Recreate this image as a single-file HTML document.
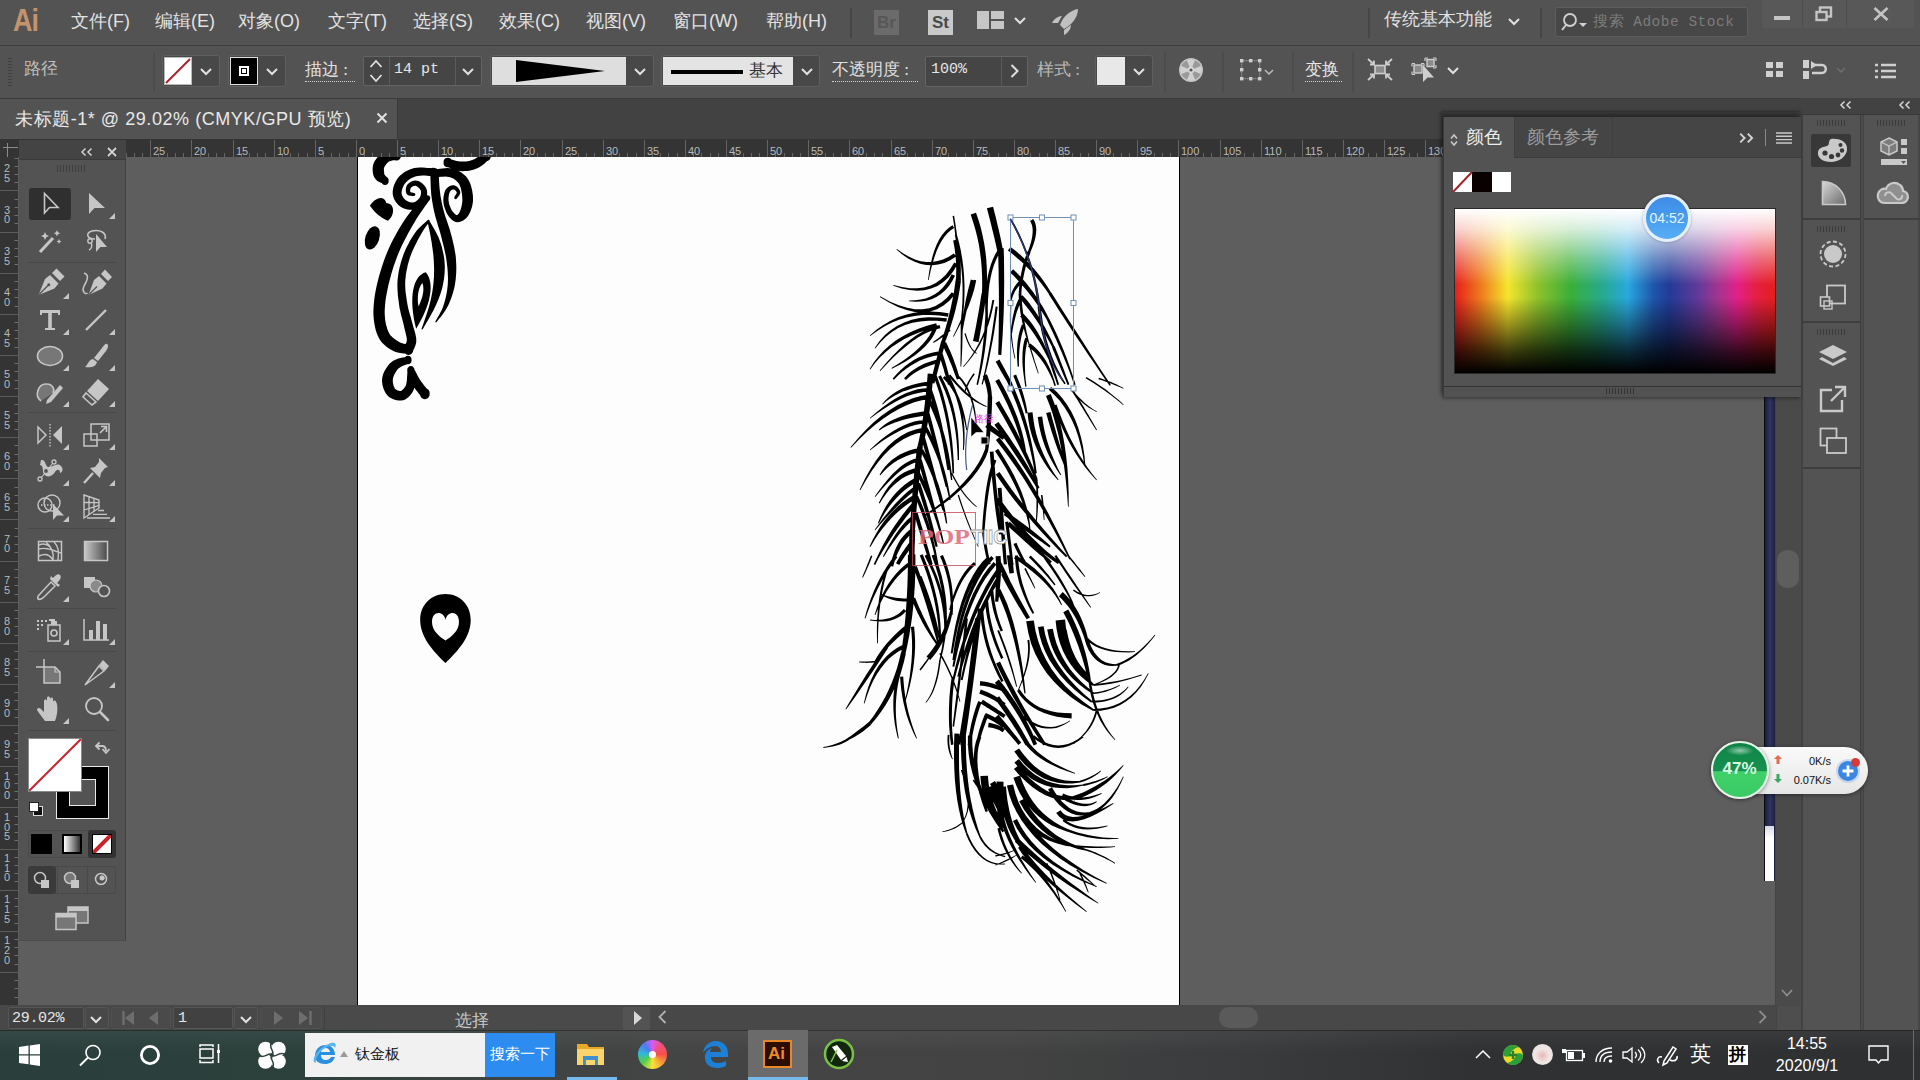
<!DOCTYPE html>
<html lang="zh">
<head>
<meta charset="utf-8">
<title>未标题-1* @ 29.02% (CMYK/GPU 预览) - Adobe Illustrator</title>
<style>
*{box-sizing:border-box;margin:0;padding:0}
html,body{width:1920px;height:1080px;overflow:hidden;background:#535353;font-family:"Liberation Sans",sans-serif;color:#dcdcdc}
.abs{position:absolute}
#root{position:relative;width:1920px;height:1080px;overflow:hidden;background:#535353}
#root div,#root span,#root svg{position:absolute}
svg{overflow:visible}
/* menu bar */
#menubar{left:0;top:0;width:1920px;height:45px;background:#535353}
#menubar .mi{top:9px;font-size:18px;line-height:24px;color:#e2e2e2;white-space:nowrap}
/* control bar */
#ctrl{left:0;top:45px;width:1920px;height:53px;background:#535353;border-top:1px solid #3e3e3e}
.lbl{font-family:"Liberation Serif",serif;font-size:17px;line-height:22px;color:#d6d6d6;white-space:nowrap}
.ul{border-bottom:1px dotted #cfcfcf}
.dd{background:#484848;border:1px solid #5f5f5f;border-radius:3px}
.fld{background:#454545;border:1px solid #646464;border-radius:2px}
.mono{font-family:"Liberation Mono",monospace;color:#e6e6e6;font-size:15px;line-height:20px;white-space:nowrap}
.vsep{width:2px;background:#4c4c4c}
/* tab bar */
#tabbar{left:0;top:98px;width:1920px;height:41px;background:#424242;border-top:1px solid #3a3a3a}
#tab{left:0;top:0;width:398px;height:40px;background:#535353;border-right:1px solid #383838}
/* canvas */
#canvas{left:0;top:139px;width:1801px;height:866px;background:#5e5e5e;overflow:hidden}
#artboard{left:357px;top:0px;width:823px;height:870px;background:#fdfdfd;border:1px solid #000;border-top:none}
#rulerT{left:0;top:0;width:1801px;height:18px;background:#343434}
#rulerL{left:0;top:18px;width:18px;height:850px;background:#343434}
.rl{font-size:11px;line-height:11px;color:#b9b9b9;white-space:nowrap}
/* status */
#status{left:0;top:1005px;width:1801px;height:25px;background:#484848}
/* taskbar */
#taskbar{left:0;top:1030px;width:1920px;height:50px;background:linear-gradient(180deg,rgba(255,255,255,.05) 0,rgba(255,255,255,0) 45%),linear-gradient(90deg,#2a3f3b 0px,#2c403c 300px,#3f4443 520px,#444444 700px,#434343 1000px,#393b3c 1250px,#2f3133 1480px,#2e3032 1920px)}
/* toolbar */
#tools{left:19px;top:140px;width:107px;height:801px;background:#535353;border-right:1px solid #414141;border-bottom:1px solid #4c4c4c}
#tools .hsep{left:9px;width:88px;height:1px;background:#484848}
/* dock */
#dock{left:1801px;top:98px;width:119px;height:932px;background:#535353}
/* color panel */
#cpanel{left:1443px;top:117px;width:358px;height:280px;background:#535353;box-shadow:-2px -3px 4px rgba(0,0,0,.35), -1px 2px 3px rgba(0,0,0,.3)}
</style>
</head>
<body>
<div id="root">
<div id="canvas">
<div id="artboard"></div>
<svg width="1801" height="866" viewBox="0 139 1801 866" style="left:0;top:0"><defs><clipPath id="abclip"><rect x="358" y="139" width="821" height="867"/></clipPath></defs><g clip-path="url(#abclip)"><path d="M395.9 150.9L395.1 150.9L394.1 150.9L392.7 150.9L391.0 150.9L389.2 151.0L387.2 151.2L385.2 151.7L383.2 152.5L381.5 153.6L380.0 154.8L378.6 156.0L377.3 157.4L376.2 158.9L375.1 160.4L374.2 162.0L373.5 163.8L373.0 165.6L372.7 167.5L372.6 169.3L372.7 171.1L372.9 172.7L373.2 174.4L373.7 175.9L374.4 177.5L375.5 179.1L376.8 180.4L378.2 181.4L379.5 182.1L380.6 182.7L381.6 183.1L382.4 183.3L382.8 183.6L387.4 178.1L386.9 177.5L386.2 176.8L385.6 176.0L385.0 175.2L384.5 174.4L384.2 173.8L384.1 173.3L384.2 173.1L384.2 172.6L384.1 171.9L384.0 171.1L383.9 170.2L383.9 169.4L383.9 168.7L384.0 168.0L384.2 167.5L384.4 167.0L384.8 166.2L385.3 165.4L386.0 164.5L386.6 163.7L387.3 162.9L388.0 162.3L388.4 161.9L388.9 161.6L389.7 161.2L390.8 160.9L392.1 160.6L393.5 160.3L394.8 160.1L396.0 159.9L397.0 159.7ZM392.0 155.3a4.5 4.5 0 1 0 8.9 0a4.5 4.5 0 1 0 -8.9 0ZM381.5 180.8a3.6 3.6 0 1 0 7.1 0a3.6 3.6 0 1 0 -7.1 0ZM446.4 166.5L447.3 166.8L448.6 167.4L450.1 168.1L452.0 168.8L454.0 169.6L456.1 170.3L458.4 170.8L460.6 171.1L462.8 171.2L464.9 171.1L467.0 171.0L469.1 170.7L471.2 170.2L473.3 169.7L475.3 169.1L477.3 168.3L479.3 167.3L481.2 166.1L483.0 164.8L484.6 163.4L486.1 162.1L487.3 161.0L488.3 160.1L489.0 159.5L483.4 152.5L482.5 153.2L481.4 154.2L480.2 155.2L478.8 156.3L477.4 157.3L476.0 158.3L474.7 159.0L473.5 159.6L472.2 160.0L470.7 160.5L469.2 160.9L467.5 161.2L465.9 161.4L464.3 161.5L462.7 161.6L461.3 161.6L459.9 161.5L458.4 161.3L456.6 160.9L454.9 160.4L453.2 159.9L451.6 159.4L450.1 158.9L449.0 158.6ZM443.6 162.5a4.2 4.2 0 1 0 8.3 0a4.2 4.2 0 1 0 -8.3 0ZM481.8 156.0a4.5 4.5 0 1 0 8.9 0a4.5 4.5 0 1 0 -8.9 0ZM433.4 168.3L432.0 168.2L430.2 168.1L427.8 167.9L425.2 167.7L422.5 167.5L419.6 167.5L416.9 167.7L414.3 168.1L411.9 168.8L409.7 169.6L407.6 170.5L405.5 171.6L403.6 172.8L401.8 174.2L400.1 175.6L398.5 177.2L397.2 179.0L396.0 180.9L395.0 183.0L394.1 185.1L393.4 187.2L393.0 189.3L392.7 191.5L392.7 193.6L393.0 195.7L393.6 197.8L394.5 199.7L395.5 201.4L396.7 203.0L397.9 204.4L399.3 205.7L400.7 206.8L402.3 207.8L404.0 208.5L405.8 209.1L407.6 209.5L409.4 209.7L411.2 209.8L413.0 209.6L414.8 209.3L416.5 208.8L418.0 208.0L419.5 207.1L420.9 206.0L422.2 204.9L423.3 203.6L424.4 202.4L425.2 201.0L425.9 199.6L426.4 198.1L426.8 196.5L427.1 194.9L427.2 193.4L427.1 191.8L426.9 190.2L426.4 188.7L425.6 187.2L424.7 185.9L423.6 184.7L422.4 183.6L421.1 182.6L419.8 181.8L418.5 181.1L417.0 180.7L415.5 180.5L414.0 180.7L412.6 181.0L411.4 181.6L410.2 182.2L409.1 182.9L408.2 183.7L407.3 184.7L406.7 185.8L406.2 186.9L405.9 188.2L405.8 189.4L405.8 190.6L405.9 191.7L406.2 192.8L406.7 193.9L407.7 194.9L408.8 195.4L409.8 195.7L410.9 195.8L411.8 195.9L412.7 195.9L413.3 195.9L413.7 196.0L414.3 193.1L413.8 193.0L413.1 192.8L412.3 192.6L411.5 192.4L410.8 192.2L410.3 191.9L410.1 191.7L410.2 191.8L410.2 191.6L410.2 191.2L410.2 190.5L410.2 189.8L410.4 189.0L410.6 188.4L410.8 187.9L411.0 187.6L411.4 187.3L411.9 186.9L412.6 186.5L413.4 186.1L414.2 185.9L414.9 185.7L415.4 185.7L415.8 185.8L416.3 186.0L417.0 186.5L417.8 187.1L418.7 187.8L419.5 188.6L420.1 189.4L420.6 190.2L420.9 190.8L421.0 191.4L421.1 192.2L421.0 193.1L420.9 194.1L420.7 195.2L420.4 196.1L420.0 197.0L419.6 197.7L419.1 198.4L418.4 199.2L417.6 200.0L416.7 200.7L415.8 201.4L414.8 201.9L414.0 202.2L413.2 202.4L412.4 202.4L411.5 202.4L410.4 202.2L409.2 201.9L408.2 201.6L407.1 201.1L406.3 200.6L405.6 200.1L404.9 199.5L404.2 198.7L403.5 197.7L402.8 196.8L402.3 195.7L401.9 194.8L401.7 193.9L401.6 193.1L401.6 192.1L401.8 190.9L402.1 189.5L402.6 188.1L403.2 186.7L403.8 185.3L404.6 184.0L405.4 183.0L406.3 182.0L407.4 180.9L408.6 179.9L410.0 179.0L411.5 178.1L413.0 177.4L414.6 176.7L416.1 176.2L417.8 175.9L420.0 175.7L422.4 175.6L424.9 175.6L427.3 175.7L429.6 175.9L431.6 176.0L433.1 176.0ZM429.4 172.2a3.9 3.9 0 1 0 7.7 0a3.9 3.9 0 1 0 -7.7 0ZM412.5 194.5a1.4 1.4 0 1 0 2.9 0a1.4 1.4 0 1 0 -2.9 0ZM424.9 196.3L423.5 197.8L421.7 199.7L419.4 202.0L416.9 204.6L414.2 207.5L411.5 210.6L408.9 213.9L406.4 217.2L404.1 220.7L401.7 224.4L399.4 228.2L397.1 232.3L394.8 236.4L392.6 240.6L390.5 244.8L388.6 249.0L386.8 253.3L385.1 257.6L383.5 262.0L382.0 266.5L380.6 270.9L379.3 275.2L378.2 279.5L377.2 283.6L376.3 287.6L375.5 291.5L374.8 295.5L374.3 299.3L373.9 303.1L373.6 306.8L373.4 310.4L373.4 313.9L373.6 317.3L373.9 320.6L374.4 323.8L375.0 326.9L375.7 329.9L376.6 332.8L377.7 335.5L378.9 338.1L380.4 340.5L382.1 342.7L384.0 344.6L385.9 346.3L387.9 347.7L389.8 348.9L391.6 350.0L393.4 351.0L395.6 351.9L397.8 352.6L400.0 353.0L402.1 353.3L403.9 353.5L405.5 353.6L406.7 353.7L407.6 353.7L409.3 345.0L408.2 344.7L406.9 344.4L405.4 344.1L403.8 343.7L402.3 343.2L400.8 342.7L399.6 342.2L398.4 341.5L397.1 340.7L395.7 339.7L394.3 338.7L393.0 337.7L391.7 336.6L390.6 335.4L389.7 334.2L388.9 332.8L388.1 331.0L387.3 329.1L386.7 326.8L386.0 324.5L385.5 321.9L385.1 319.2L384.9 316.5L384.7 313.6L384.7 310.6L384.9 307.5L385.1 304.2L385.5 300.8L386.0 297.2L386.7 293.6L387.4 289.9L388.2 286.1L389.1 282.2L390.2 278.2L391.3 274.0L392.6 269.8L393.9 265.6L395.4 261.4L396.9 257.2L398.5 253.2L400.2 249.3L402.0 245.2L404.0 241.2L406.1 237.2L408.2 233.3L410.3 229.5L412.4 225.8L414.4 222.4L416.4 219.1L418.5 215.8L420.7 212.6L422.8 209.4L424.9 206.5L426.7 203.9L428.3 201.7L429.5 200.0ZM424.3 198.2a2.9 2.9 0 1 0 5.9 0a2.9 2.9 0 1 0 -5.9 0ZM404.0 349.4a4.5 4.5 0 1 0 8.9 0a4.5 4.5 0 1 0 -8.9 0ZM412.8 351.2L413.1 350.7L413.4 350.0L414.0 348.9L414.6 347.6L415.2 346.1L415.8 344.3L416.2 342.4L416.3 340.3L416.2 338.3L415.9 336.4L415.5 334.5L415.0 332.6L414.5 330.8L413.9 328.8L413.3 326.9L412.8 324.7L412.1 322.3L411.4 319.8L410.7 317.1L409.9 314.4L409.1 311.7L408.4 308.9L407.8 306.2L407.3 303.4L406.8 300.6L406.4 297.7L406.0 294.8L405.6 291.9L405.4 288.9L405.2 286.0L405.2 283.2L405.3 280.3L405.6 277.4L405.9 274.5L406.4 271.6L407.0 268.7L407.6 265.7L408.4 262.8L409.2 259.9L410.1 257.1L411.1 254.4L412.2 251.6L413.5 248.7L414.8 246.0L416.2 243.2L417.5 240.6L418.9 238.1L420.1 235.9L421.3 233.7L422.6 231.6L423.9 229.6L425.2 227.6L426.5 225.8L427.6 224.2L428.6 222.9L429.3 221.8L427.6 220.3L426.6 221.1L425.4 222.2L423.9 223.5L422.2 225.0L420.4 226.7L418.6 228.5L416.8 230.5L415.1 232.7L413.6 235.0L412.0 237.5L410.4 240.1L408.9 242.9L407.4 245.8L405.9 248.8L404.6 251.8L403.4 254.8L402.4 257.7L401.4 260.8L400.5 263.9L399.7 267.0L399.0 270.2L398.4 273.4L398.0 276.6L397.6 279.7L397.4 283.0L397.4 286.2L397.5 289.4L397.7 292.6L397.9 295.7L398.3 298.8L398.7 301.8L399.1 304.8L399.5 307.8L400.2 310.8L400.8 313.8L401.6 316.7L402.3 319.4L403.0 322.1L403.6 324.5L404.1 326.8L404.6 329.1L405.2 331.2L405.6 333.1L406.1 334.9L406.4 336.5L406.7 337.9L406.8 339.2L406.8 340.2L406.8 341.0L406.6 341.9L406.2 342.8L405.8 343.8L405.4 344.8L404.9 345.7L404.4 346.7L404.1 347.5ZM403.7 349.4a4.8 4.8 0 1 0 9.5 0a4.8 4.8 0 1 0 -9.5 0ZM427.3 221.0a1.1 1.1 0 1 0 2.3 0a1.1 1.1 0 1 0 -2.3 0ZM436.0 177.2L437.3 177.1L439.0 177.0L441.0 176.8L443.1 176.7L445.2 176.6L447.2 176.7L448.9 176.9L450.2 177.2L451.5 177.7L452.8 178.3L454.1 179.1L455.4 180.0L456.5 180.9L457.5 181.9L458.4 183.0L459.1 184.0L459.7 185.3L460.3 186.8L460.9 188.6L461.3 190.6L461.7 192.6L462.0 194.6L462.2 196.6L462.3 198.3L462.4 199.9L462.3 201.6L462.1 203.2L461.8 204.9L461.5 206.5L461.1 208.0L460.7 209.3L460.3 210.4L460.0 211.3L459.5 212.2L459.1 213.0L458.6 213.7L458.1 214.2L457.6 214.7L457.3 214.9L457.3 215.1L457.2 215.2L456.8 215.1L456.3 214.9L455.6 214.5L454.8 213.9L454.0 213.1L453.2 212.3L452.6 211.5L451.9 210.5L451.3 209.4L450.7 208.1L450.1 206.8L449.6 205.4L449.2 204.0L448.9 202.7L448.7 201.5L448.5 200.3L448.5 199.0L448.6 197.6L448.7 196.3L448.9 195.0L449.2 193.8L449.5 192.8L449.8 192.1L450.1 191.5L450.5 191.0L451.0 190.5L451.6 190.1L452.2 189.7L452.7 189.5L453.2 189.4L453.4 189.4L453.7 189.4L454.1 189.6L454.7 190.0L455.3 190.5L455.9 191.1L456.4 191.7L456.7 192.2L456.8 192.4L456.8 192.5L456.7 193.0L456.5 193.6L456.1 194.3L455.6 195.1L455.1 195.8L454.7 196.4L454.4 196.9L456.9 198.5L457.1 198.1L457.6 197.6L458.1 196.9L458.7 196.1L459.3 195.2L459.8 194.2L460.2 193.1L460.3 191.9L459.9 190.7L459.4 189.7L458.8 188.8L458.0 187.8L457.2 187.0L456.2 186.3L455.2 185.7L454.0 185.3L452.8 185.2L451.7 185.4L450.5 185.7L449.4 186.2L448.4 186.9L447.3 187.7L446.4 188.7L445.6 189.8L445.0 191.1L444.5 192.4L444.1 193.9L443.8 195.5L443.5 197.1L443.4 198.8L443.3 200.4L443.4 202.1L443.6 203.7L443.9 205.4L444.4 207.0L444.9 208.7L445.5 210.3L446.2 211.9L446.9 213.4L447.7 214.7L448.5 216.0L449.4 217.2L450.4 218.3L451.5 219.4L452.7 220.4L454.1 221.2L455.6 221.9L457.4 222.2L459.2 222.0L460.8 221.6L462.4 220.9L463.9 220.1L465.2 219.0L466.6 217.8L467.8 216.3L468.8 214.8L469.7 213.1L470.5 211.3L471.2 209.3L471.9 207.2L472.4 205.0L472.8 202.7L473.0 200.4L473.0 198.0L472.9 195.6L472.6 193.2L472.2 190.7L471.6 188.1L470.9 185.6L470.0 183.1L468.9 180.8L467.6 178.6L466.1 176.6L464.4 174.9L462.6 173.4L460.7 172.1L458.7 170.9L456.7 170.0L454.6 169.2L452.4 168.6L450.0 168.2L447.4 168.1L444.8 168.2L442.4 168.5L440.1 168.8L438.1 169.1L436.5 169.4L435.4 169.5ZM431.8 173.4a3.9 3.9 0 1 0 7.7 0a3.9 3.9 0 1 0 -7.7 0ZM454.2 197.7a1.4 1.4 0 1 0 2.9 0a1.4 1.4 0 1 0 -2.9 0ZM430.3 173.1L430.4 174.6L430.4 176.7L430.5 179.3L430.6 182.1L430.7 185.1L430.8 188.1L431.0 191.1L431.2 193.9L431.5 196.4L431.8 198.8L432.2 201.2L432.6 203.6L433.0 206.0L433.5 208.5L434.0 211.1L434.7 213.8L435.4 216.7L436.3 219.7L437.2 222.8L438.1 225.9L439.1 228.9L440.0 232.0L440.8 235.0L441.6 237.9L442.3 240.9L443.1 243.9L443.8 246.8L444.5 249.8L445.1 252.7L445.7 255.5L446.2 258.4L446.6 261.3L447.0 264.2L447.3 267.1L447.6 270.0L447.8 273.0L447.9 275.9L448.0 278.8L447.9 281.6L447.8 284.4L447.5 287.1L447.2 289.9L446.7 292.7L446.2 295.4L445.6 298.1L444.9 300.8L444.2 303.3L443.4 305.7L442.6 308.0L441.5 310.4L440.3 312.8L439.1 315.0L437.9 317.1L436.8 319.0L435.9 320.6L435.2 321.9L436.1 322.5L437.0 321.4L438.1 320.0L439.5 318.3L441.1 316.4L442.7 314.3L444.3 312.0L445.8 309.7L447.2 307.3L448.4 304.9L449.5 302.4L450.6 299.7L451.6 297.0L452.6 294.1L453.4 291.2L454.2 288.3L454.8 285.3L455.3 282.3L455.7 279.2L456.0 276.1L456.2 272.9L456.3 269.8L456.3 266.6L456.2 263.4L456.0 260.3L455.8 257.1L455.4 253.9L454.8 250.8L454.3 247.7L453.6 244.6L452.9 241.5L452.2 238.5L451.4 235.4L450.5 232.3L449.6 229.1L448.6 225.9L447.5 222.8L446.5 219.8L445.5 216.9L444.6 214.1L443.9 211.4L443.2 208.9L442.6 206.5L442.1 204.2L441.6 201.9L441.2 199.7L440.8 197.5L440.4 195.2L440.1 192.8L439.8 190.3L439.5 187.5L439.3 184.6L439.1 181.7L439.0 178.9L438.8 176.4L438.7 174.3L438.6 172.7ZM430.3 172.9a4.2 4.2 0 1 0 8.3 0a4.2 4.2 0 1 0 -8.3 0ZM427.5 221.4L427.9 223.0L428.3 225.3L428.9 227.9L429.5 230.8L430.1 233.8L430.7 236.9L431.2 239.9L431.7 242.6L432.0 245.2L432.4 247.8L432.8 250.5L433.1 253.1L433.4 255.7L433.6 258.3L433.8 260.9L433.9 263.5L434.0 266.0L434.1 268.6L434.1 271.2L434.0 273.7L434.0 276.3L433.8 278.9L433.6 281.5L433.4 284.1L433.1 286.6L432.7 289.2L432.3 291.9L431.8 294.5L431.3 297.2L430.7 299.9L430.0 302.7L429.3 305.5L428.4 308.5L427.4 311.8L426.3 315.2L425.1 318.6L424.0 321.9L423.0 324.8L422.1 327.3L421.4 329.2L422.4 329.6L423.4 327.9L424.7 325.7L426.3 323.0L428.1 320.0L429.9 316.8L431.7 313.6L433.4 310.5L434.8 307.5L436.1 304.8L437.3 302.1L438.4 299.4L439.4 296.7L440.4 294.0L441.3 291.2L442.1 288.4L442.8 285.6L443.3 282.8L443.8 280.0L444.2 277.1L444.5 274.3L444.7 271.4L444.8 268.6L444.8 265.7L444.6 262.9L444.4 260.0L444.0 257.1L443.5 254.2L442.9 251.4L442.2 248.6L441.5 245.8L440.6 243.1L439.7 240.4L438.6 237.6L437.2 234.7L435.7 231.8L434.2 229.0L432.7 226.4L431.3 224.1L430.2 222.2L429.4 220.7ZM427.4 221.0a1.0 1.0 0 1 0 2.0 0a1.0 1.0 0 1 0 -2.0 0ZM406.8 356.6L405.8 356.9L404.4 357.2L402.6 357.5L400.5 358.0L398.3 358.6L396.0 359.4L393.7 360.5L391.6 361.9L389.8 363.5L388.3 365.3L386.9 367.2L385.6 369.2L384.4 371.3L383.4 373.5L382.7 375.7L382.2 378.0L382.0 380.4L382.2 382.8L382.5 385.1L383.1 387.4L383.9 389.6L384.8 391.6L385.9 393.5L387.3 395.3L389.0 396.9L390.8 398.1L392.7 399.1L394.8 399.8L396.8 400.3L398.9 400.6L401.0 400.6L403.2 400.2L405.2 399.4L407.0 398.3L408.6 397.0L410.0 395.5L411.2 394.0L412.3 392.4L413.2 390.7L414.0 388.8L414.6 386.8L415.0 384.6L415.1 382.5L415.2 380.4L415.1 378.5L415.1 376.7L415.0 375.2L415.0 374.1L414.9 373.1L414.9 372.2L414.8 371.4L414.7 370.8L414.5 370.2L414.4 369.9L414.4 369.9L414.4 369.9L407.3 370.8L407.4 371.2L407.4 371.6L407.5 371.7L407.4 371.8L407.4 372.0L407.4 372.4L407.3 372.9L407.3 373.8L407.2 375.1L407.1 376.7L407.0 378.4L406.9 380.1L406.7 381.8L406.4 383.3L406.1 384.6L405.8 385.5L405.3 386.4L404.6 387.5L403.9 388.4L403.1 389.3L402.3 390.1L401.6 390.6L401.1 390.9L400.8 391.0L400.4 391.0L399.7 391.0L398.8 390.8L397.8 390.5L396.8 390.1L396.0 389.6L395.3 389.1L394.9 388.7L394.6 388.1L394.1 387.1L393.6 385.9L393.3 384.6L393.0 383.1L392.8 381.8L392.8 380.5L392.8 379.5L393.0 378.4L393.4 377.1L393.9 375.6L394.6 374.1L395.4 372.7L396.2 371.3L397.1 370.0L397.9 369.1L398.7 368.3L399.9 367.5L401.4 366.6L403.1 365.8L404.9 365.1L406.5 364.4L408.0 363.8L409.2 363.3ZM404.4 360.0a3.6 3.6 0 1 0 7.1 0a3.6 3.6 0 1 0 -7.1 0ZM407.3 370.3a3.6 3.6 0 1 0 7.1 0a3.6 3.6 0 1 0 -7.1 0ZM407.6 371.7L407.9 372.7L408.3 373.9L408.9 375.5L409.4 377.2L410.1 379.1L410.9 381.0L411.7 382.9L412.6 384.6L413.6 386.4L414.8 388.2L416.0 389.9L417.3 391.6L418.5 393.2L419.6 394.6L420.4 395.7L421.1 396.6L428.6 390.8L427.9 389.9L426.9 388.7L425.8 387.4L424.6 385.9L423.4 384.4L422.2 382.8L421.1 381.4L420.2 380.1L419.4 378.8L418.5 377.3L417.6 375.7L416.8 374.1L416.0 372.5L415.2 371.1L414.6 369.8L414.1 368.9ZM407.3 370.3a3.6 3.6 0 1 0 7.1 0a3.6 3.6 0 1 0 -7.1 0ZM420.1 393.7a4.8 4.8 0 1 0 9.5 0a4.8 4.8 0 1 0 -9.5 0Z" fill="#000"/><g transform="translate(355 150) scale(0.24079)" fill="#000"><path fill-rule="evenodd" d="M294 508C240 522 222 615 254 742C312 650 334 555 294 508ZM280 552C290 580 281 612 264 650C257 612 262 572 280 552Z"/><path d="M62 232C85 195 122 188 130 220C165 222 168 268 137 294C105 282 80 258 62 232Z"/><ellipse cx="72" cy="365" rx="29" ry="50" transform="rotate(18 72 365)"/></g><path fill-rule="evenodd" fill="#000" d="M445.5 594C431 594 420.2 605 420.2 620C420.2 637 433 651 445.5 663C458 651 470.7 637 470.7 620C470.7 605 460 594 445.5 594ZM445.5 620C444 611 432 610 432 622C432 631 440 637 445.5 640.5C451 637 459 631 459 622C459 610 447 611 445.5 620Z"/><path d="M952.6 216.0L953.7 222.7L954.6 229.4L955.3 236.1L955.9 242.6L956.3 249.0L956.6 255.4L956.7 261.7L956.5 267.9L956.3 273.9L955.8 279.9L960.9 280.1L960.6 274.0L960.3 267.8L959.8 261.6L959.3 255.3L958.7 248.9L957.9 242.4L957.1 235.9L956.2 229.2L955.2 222.5L954.1 215.7ZM953.2 240.4L953.9 244.4L954.6 248.3L955.1 252.3L955.5 256.2L955.9 260.2L956.1 264.1L956.2 268.1L956.2 272.0L956.1 275.9L956.0 279.9L960.7 280.1L960.8 276.1L960.8 272.0L960.8 267.9L960.6 263.9L960.3 259.8L959.9 255.8L959.5 251.7L958.9 247.7L958.3 243.6L957.5 239.6ZM955.7 279.7L954.9 285.3L954.1 291.1L953.0 296.9L951.8 302.9L950.5 309.0L949.0 315.2L947.4 321.5L945.6 327.9L943.6 334.4L941.5 341.0L945.1 342.3L947.5 335.7L949.8 329.2L951.8 322.8L953.7 316.4L955.4 310.2L956.8 304.0L958.2 298.0L959.3 292.0L960.2 286.1L961.0 280.3ZM941.2 341.1L939.8 346.6L938.4 351.8L937.1 356.7L935.9 361.3L934.8 365.6L933.8 369.6L932.9 373.3L932.1 376.8L931.4 379.9L930.7 382.7L934.4 383.6L935.1 380.8L935.9 377.7L936.9 374.3L937.9 370.6L938.9 366.7L940.1 362.4L941.3 357.8L942.6 352.9L944.0 347.7L945.5 342.2ZM954.8 235.3L956.9 243.3L958.7 251.4L960.2 259.6L961.3 267.9L962.1 276.3L962.5 284.8L962.6 293.4L962.4 302.2L961.8 311.0L960.9 319.9L962.5 320.1L963.5 311.1L964.2 302.2L964.5 293.5L964.5 284.8L964.1 276.2L963.4 267.7L962.3 259.3L960.9 251.0L959.1 242.8L956.9 234.7ZM960.7 320.0L960.7 325.9L960.7 331.5L960.7 336.8L960.7 341.9L960.6 346.7L960.6 351.2L960.6 355.4L960.5 359.4L960.5 363.2L960.5 366.6L961.2 366.7L961.5 363.2L961.7 359.5L961.9 355.5L962.1 351.2L962.3 346.7L962.4 341.9L962.5 336.8L962.6 331.5L962.6 325.9L962.6 320.0ZM952.6 225.3L948.8 227.8L945.4 230.9L942.2 234.8L939.3 239.3L936.7 244.4L934.4 250.2L932.4 256.7L930.7 263.8L929.2 271.5L928.0 279.9L928.7 280.1L930.4 271.8L932.3 264.2L934.4 257.3L936.6 251.1L939.1 245.6L941.7 240.7L944.6 236.5L947.6 233.1L950.7 230.2L954.1 228.0ZM953.9 253.5L948.4 256.9L942.9 259.4L937.5 261.1L932.0 262.0L926.4 262.0L920.7 261.2L915.0 259.4L909.1 256.8L903.0 253.3L896.9 248.9L896.4 249.5L902.3 254.4L908.1 258.5L914.1 261.6L920.1 263.8L926.1 265.1L932.2 265.3L938.2 264.6L944.3 262.9L950.2 260.2L956.1 256.5ZM954.2 262.5L950.2 269.1L945.8 274.7L941.0 279.3L935.8 283.0L930.1 285.7L923.9 287.5L917.1 288.3L909.8 288.2L901.9 287.1L893.5 285.0L893.2 285.7L901.6 288.4L909.6 290.1L917.2 290.7L924.4 290.2L931.1 288.6L937.5 285.9L943.3 282.1L948.6 277.2L953.3 271.2L957.5 264.2ZM951.6 274.2L948.9 279.4L945.8 284.0L942.5 288.0L938.8 291.4L934.8 294.3L930.5 296.6L925.8 298.4L920.7 299.6L915.1 300.3L909.2 300.5L909.1 301.2L915.2 301.7L920.9 301.6L926.4 300.7L931.6 299.2L936.4 297.0L940.9 294.1L945.0 290.5L948.8 286.2L952.1 281.3L955.0 275.8ZM951.8 292.2L946.8 298.0L941.3 302.6L935.5 306.0L929.2 308.2L922.4 309.3L915.1 309.2L907.2 307.8L898.8 305.2L889.7 301.4L880.2 296.3L879.8 297.0L889.1 302.6L898.0 307.0L906.6 310.1L914.8 311.9L922.6 312.4L930.0 311.5L937.0 309.3L943.5 305.6L949.4 300.7L954.8 294.5ZM948.6 313.3L939.6 312.0L930.8 311.5L922.3 311.7L913.9 312.8L905.9 314.7L898.1 317.3L890.6 320.7L883.3 324.9L876.4 329.8L869.8 335.6L870.2 336.1L877.2 330.9L884.3 326.4L891.5 322.7L899.0 319.7L906.6 317.4L914.5 315.9L922.5 315.0L930.8 314.9L939.3 315.4L948.0 316.7ZM946.9 318.3L937.3 317.4L928.3 317.3L919.7 318.1L911.6 319.8L904.1 322.4L897.0 325.9L890.6 330.2L884.7 335.3L879.4 341.3L874.7 348.1L875.3 348.5L880.4 342.2L885.9 336.7L891.9 332.0L898.3 328.1L905.1 325.1L912.4 322.8L920.1 321.4L928.4 320.7L937.2 320.8L946.4 321.7ZM936.2 323.2L927.0 325.8L918.4 328.8L910.3 332.3L902.8 336.2L895.8 340.6L889.4 345.4L883.6 350.7L878.4 356.4L873.7 362.5L869.7 369.0L870.3 369.4L874.8 363.3L879.8 357.6L885.2 352.4L891.1 347.6L897.5 343.2L904.4 339.1L911.8 335.5L919.7 332.2L928.2 329.3L937.1 326.8ZM939.7 325.1L934.1 326.5L928.5 328.6L922.7 331.4L916.8 334.9L910.9 339.2L904.8 344.1L898.7 349.7L892.5 355.9L886.1 362.9L879.7 370.6L880.3 371.1L887.1 363.8L893.7 357.1L900.1 351.2L906.4 345.9L912.4 341.3L918.4 337.3L924.1 334.1L929.7 331.4L935.1 329.5L940.3 328.2ZM933.2 327.7L931.4 331.8L929.1 335.9L926.2 339.9L922.8 344.0L918.9 348.0L914.5 352.0L909.5 356.0L904.0 360.0L898.0 364.0L891.4 367.9L891.9 368.8L898.8 365.3L905.2 361.7L911.0 358.0L916.3 354.2L921.1 350.3L925.3 346.3L929.0 342.1L932.1 337.9L934.7 333.5L936.8 329.0ZM949.4 329.3L947.4 330.9L945.6 332.4L943.7 333.9L942.0 335.3L940.3 336.6L938.7 337.9L937.2 339.0L935.8 340.1L934.4 341.1L933.1 342.1L933.6 342.9L935.0 342.1L936.5 341.2L938.1 340.2L939.7 339.1L941.3 338.0L943.1 336.7L944.9 335.3L946.7 333.9L948.6 332.3L950.6 330.7ZM938.1 351.5L933.0 352.4L928.0 353.7L923.1 355.4L918.4 357.5L913.8 360.0L909.3 363.0L904.9 366.3L900.7 370.0L896.7 374.1L892.7 378.6L893.9 379.7L898.1 375.6L902.3 371.8L906.6 368.5L911.0 365.5L915.4 362.9L919.9 360.6L924.4 358.7L929.1 357.2L933.8 356.0L938.6 355.2ZM936.2 359.8L932.2 360.9L928.4 362.2L924.7 363.6L921.2 365.2L917.9 367.0L914.8 368.9L911.8 371.0L909.0 373.3L906.5 375.7L904.1 378.3L905.9 380.0L908.4 377.8L911.0 375.6L913.7 373.6L916.6 371.8L919.6 370.1L922.8 368.5L926.1 367.0L929.6 365.7L933.3 364.5L937.1 363.5ZM942.2 344.3L943.7 347.3L945.1 350.5L946.6 353.7L948.1 357.1L949.5 360.6L951.0 364.1L952.5 367.8L953.9 371.7L955.4 375.6L956.8 379.6L959.8 378.7L958.6 374.5L957.4 370.5L956.1 366.5L954.7 362.7L953.4 359.0L952.0 355.5L950.6 352.0L949.1 348.7L947.6 345.4L946.1 342.3ZM938.2 352.3L939.4 355.7L940.5 359.2L941.5 362.5L942.6 365.9L943.6 369.1L944.5 372.4L945.4 375.5L946.3 378.7L947.1 381.8L947.9 384.8L951.0 384.1L950.2 381.0L949.5 377.9L948.7 374.7L947.9 371.4L947.0 368.1L946.1 364.8L945.1 361.4L944.0 358.0L942.9 354.6L941.8 351.1ZM970.7 214.6L973.1 221.9L975.3 229.2L977.2 236.7L978.8 244.3L980.0 252.1L981.0 260.0L981.7 268.1L982.1 276.3L982.2 284.7L982.0 293.2L986.4 293.5L986.9 284.8L987.0 276.2L986.8 267.8L986.3 259.5L985.4 251.4L984.2 243.4L982.6 235.5L980.8 227.7L978.5 220.1L976.0 212.7ZM981.7 292.9L980.8 298.2L980.0 303.4L979.2 308.5L978.3 313.4L977.4 318.3L976.6 323.1L975.7 327.7L974.8 332.3L973.9 336.8L973.0 341.1L978.6 342.2L979.4 337.8L980.2 333.3L981.0 328.7L981.8 324.0L982.6 319.2L983.4 314.3L984.2 309.3L985.0 304.2L985.8 299.0L986.7 293.7ZM986.9 208.3L988.4 213.9L989.8 219.3L991.1 224.5L992.3 229.4L993.4 234.1L994.5 238.6L995.5 242.9L996.4 246.9L997.2 250.7L997.9 254.2L1003.5 253.2L1002.8 249.5L1002.1 245.7L1001.3 241.6L1000.4 237.3L999.4 232.8L998.3 228.0L997.1 223.0L995.9 217.8L994.5 212.4L993.1 206.7ZM998.4 249.1L995.5 253.8L993.0 259.0L990.9 264.6L989.1 270.7L987.6 277.2L986.5 284.2L985.7 291.6L985.3 299.5L985.2 307.9L985.4 316.7L987.9 316.6L987.8 307.9L988.0 299.7L988.6 291.9L989.4 284.6L990.6 277.8L992.0 271.5L993.8 265.6L995.9 260.2L998.3 255.3L1001.0 250.9ZM985.3 316.6L984.8 323.7L984.3 330.8L983.7 337.7L983.0 344.6L982.2 351.5L981.3 358.2L980.2 364.9L979.1 371.5L977.9 378.0L976.5 384.5L978.0 384.9L979.5 378.4L981.0 371.9L982.4 365.3L983.6 358.6L984.7 351.8L985.6 345.0L986.4 338.0L987.1 331.0L987.6 323.9L988.1 316.7ZM970.8 279.5L969.4 284.9L968.0 290.3L966.8 295.6L965.6 301.0L964.6 306.4L963.7 311.8L962.9 317.1L962.2 322.5L961.6 327.9L961.2 333.3L962.1 333.4L963.1 328.1L964.1 322.8L965.2 317.5L966.3 312.2L967.5 307.0L968.7 301.7L970.0 296.4L971.3 291.1L972.7 285.8L974.2 280.5ZM973.8 279.8L972.8 284.5L971.6 289.4L970.2 294.5L968.5 299.9L966.5 305.5L964.3 311.2L961.9 317.2L959.2 323.4L956.2 329.9L953.0 336.5L953.7 336.8L957.2 330.3L960.4 324.0L963.4 317.9L966.1 312.0L968.5 306.2L970.6 300.6L972.4 295.3L974.0 290.1L975.2 285.0L976.2 280.2ZM964.4 333.5L965.4 336.7L966.5 339.7L967.6 342.4L968.7 344.8L969.9 347.0L971.2 348.8L972.4 350.5L973.7 351.8L975.1 352.9L976.5 353.7L976.8 353.0L975.6 352.2L974.4 351.1L973.2 349.8L972.0 348.2L970.9 346.4L969.8 344.3L968.7 341.9L967.6 339.2L966.6 336.3L965.6 333.2ZM992.4 299.9L990.9 308.0L989.1 315.8L987.0 323.2L984.5 330.4L981.8 337.2L978.7 343.6L975.3 349.8L971.5 355.7L967.5 361.2L963.1 366.4L963.6 366.9L968.2 361.8L972.5 356.3L976.4 350.5L980.0 344.4L983.2 337.8L986.1 331.0L988.7 323.8L990.9 316.2L992.7 308.4L994.3 300.1ZM995.6 306.5L994.5 315.0L993.3 323.3L992.1 331.4L990.8 339.4L989.4 347.3L988.0 355.0L986.5 362.5L985.0 369.9L983.3 377.2L981.6 384.3L982.8 384.6L984.6 377.5L986.4 370.3L988.2 362.9L989.8 355.3L991.3 347.6L992.8 339.8L994.2 331.8L995.4 323.6L996.6 315.3L997.7 306.8ZM1030.1 221.0L1031.1 222.9L1031.9 225.0L1032.4 227.3L1032.7 229.9L1032.6 232.8L1032.3 235.9L1031.7 239.3L1030.8 243.0L1029.5 247.0L1028.0 251.2L1030.3 252.2L1032.1 247.9L1033.6 243.9L1034.8 240.1L1035.6 236.5L1036.1 233.1L1036.3 229.8L1036.1 226.8L1035.5 224.0L1034.6 221.3L1033.2 219.0ZM1027.7 251.1L1026.3 254.8L1024.9 258.7L1023.7 262.7L1022.6 266.8L1021.7 270.9L1020.8 275.2L1020.1 279.6L1019.5 284.0L1019.1 288.6L1018.7 293.2L1021.3 293.4L1021.7 288.8L1022.3 284.4L1022.9 280.0L1023.7 275.7L1024.6 271.6L1025.6 267.5L1026.7 263.5L1027.9 259.7L1029.2 255.9L1030.6 252.3ZM1018.6 293.4L1018.8 298.1L1019.2 302.9L1019.8 307.6L1020.4 312.5L1021.3 317.3L1022.3 322.2L1023.4 327.0L1024.7 332.0L1026.1 336.9L1027.7 341.8L1028.9 341.5L1027.7 336.5L1026.5 331.5L1025.5 326.6L1024.5 321.7L1023.7 316.9L1023.0 312.1L1022.4 307.3L1022.0 302.6L1021.6 297.9L1021.4 293.3ZM1027.7 341.8L1028.7 345.2L1029.8 348.4L1030.8 351.7L1031.8 354.9L1032.8 358.1L1033.8 361.2L1034.9 364.3L1035.9 367.4L1036.9 370.4L1038.0 373.5L1038.7 373.2L1037.7 370.2L1036.8 367.1L1035.8 364.0L1034.8 360.9L1033.9 357.7L1032.9 354.6L1031.9 351.3L1030.9 348.1L1029.9 344.8L1028.9 341.5ZM1009.5 219.1L1013.9 227.1L1018.0 235.3L1021.7 243.6L1025.1 252.1L1028.1 260.8L1030.8 269.7L1033.1 278.7L1035.0 287.9L1036.6 297.3L1037.9 306.8L1040.4 306.5L1039.0 296.9L1037.3 287.5L1035.2 278.2L1032.8 269.1L1030.0 260.2L1026.9 251.4L1023.5 242.9L1019.7 234.5L1015.6 226.3L1011.1 218.2ZM1037.6 306.8L1038.7 316.0L1040.1 324.8L1041.9 333.3L1044.0 341.6L1046.6 349.5L1049.4 357.1L1052.7 364.3L1056.3 371.3L1060.2 377.9L1064.4 384.3L1065.7 383.4L1061.7 377.0L1058.1 370.3L1054.8 363.4L1051.8 356.1L1049.2 348.6L1046.8 340.8L1044.8 332.7L1043.1 324.2L1041.8 315.5L1040.7 306.5ZM1007.9 250.4L1012.5 254.1L1017.1 257.9L1021.5 261.8L1025.8 265.9L1030.0 270.2L1034.0 274.6L1037.9 279.2L1041.7 284.0L1045.4 288.9L1048.9 294.0L1051.1 292.7L1047.8 287.3L1044.3 282.1L1040.7 277.0L1036.9 272.2L1032.9 267.5L1028.8 263.0L1024.5 258.7L1020.0 254.6L1015.3 250.6L1010.5 246.9ZM1048.7 294.2L1053.1 301.1L1057.8 308.6L1063.0 316.5L1068.5 324.9L1074.4 333.9L1080.7 343.3L1087.3 353.2L1094.4 363.5L1101.8 374.4L1109.6 385.8L1110.9 384.9L1103.3 373.4L1096.1 362.4L1089.3 351.9L1082.8 341.8L1076.7 332.3L1070.9 323.4L1065.5 314.9L1060.4 306.9L1055.7 299.5L1051.3 292.5ZM1010.1 272.4L1014.4 276.6L1018.5 280.9L1022.4 285.4L1026.3 290.0L1030.1 294.7L1033.7 299.6L1037.2 304.6L1040.7 309.8L1044.0 315.1L1047.2 320.6L1049.5 319.4L1046.5 313.7L1043.5 308.1L1040.2 302.7L1036.8 297.4L1033.3 292.3L1029.6 287.4L1025.7 282.6L1021.7 278.0L1017.5 273.5L1013.2 269.2ZM1047.1 320.6L1050.2 327.1L1053.3 333.5L1056.3 339.9L1059.1 346.4L1061.9 352.8L1064.5 359.2L1067.1 365.6L1069.6 372.0L1071.9 378.4L1074.1 384.9L1075.6 384.4L1073.5 377.9L1071.4 371.4L1069.1 364.9L1066.7 358.3L1064.2 351.8L1061.5 345.3L1058.7 338.8L1055.8 332.3L1052.8 325.9L1049.6 319.4ZM1019.2 298.2L1022.4 301.6L1025.5 305.4L1028.7 309.4L1031.9 313.8L1035.2 318.6L1038.6 323.6L1041.9 329.0L1045.4 334.7L1048.8 340.8L1052.3 347.2L1054.3 346.2L1051.2 339.5L1048.0 333.3L1044.9 327.3L1041.7 321.7L1038.5 316.4L1035.3 311.5L1032.1 306.9L1028.9 302.6L1025.7 298.7L1022.4 295.2ZM1052.0 347.2L1053.5 351.0L1055.1 354.8L1056.6 358.6L1058.2 362.3L1059.7 366.1L1061.3 369.9L1062.9 373.7L1064.5 377.4L1066.1 381.2L1067.6 385.0L1069.4 384.3L1067.9 380.5L1066.4 376.7L1065.0 372.8L1063.6 369.0L1062.1 365.2L1060.6 361.4L1059.2 357.6L1057.7 353.7L1056.2 349.9L1054.6 346.1ZM1020.1 316.6L1023.0 319.6L1025.9 323.0L1028.8 326.6L1031.7 330.5L1034.6 334.8L1037.5 339.3L1040.4 344.1L1043.3 349.2L1046.2 354.7L1049.1 360.4L1050.9 359.6L1048.4 353.6L1045.9 348.0L1043.3 342.6L1040.6 337.5L1037.9 332.7L1035.1 328.3L1032.2 324.1L1029.3 320.2L1026.3 316.7L1023.2 313.4ZM1048.8 360.4L1049.6 362.9L1050.5 365.3L1051.3 367.8L1052.2 370.3L1053.0 372.7L1053.9 375.2L1054.8 377.6L1055.7 380.1L1056.5 382.6L1057.3 385.0L1059.1 384.4L1058.3 382.0L1057.5 379.5L1056.8 377.0L1056.0 374.5L1055.2 372.0L1054.4 369.5L1053.6 367.0L1052.8 364.6L1052.0 362.1L1051.2 359.6ZM1028.0 346.5L1031.4 349.2L1034.6 352.1L1037.6 355.3L1040.5 358.8L1043.2 362.5L1045.8 366.6L1048.2 370.9L1050.5 375.6L1052.7 380.5L1054.4 385.9L1055.9 385.4L1054.2 380.0L1052.4 374.8L1050.5 369.9L1048.3 365.2L1045.9 360.8L1043.2 356.8L1040.3 353.0L1037.2 349.5L1033.8 346.3L1030.3 343.5ZM1019.8 280.5L1017.9 282.3L1016.3 284.2L1014.8 286.3L1013.5 288.4L1012.4 290.7L1011.5 293.0L1010.8 295.5L1010.3 298.0L1010.0 300.6L1009.9 303.3L1010.8 303.4L1011.4 300.8L1012.1 298.4L1012.9 296.1L1013.8 293.9L1014.8 291.8L1016.0 289.8L1017.3 288.0L1018.7 286.2L1020.2 284.5L1021.9 282.8ZM1018.6 299.3L1017.3 302.1L1016.1 305.0L1015.0 308.1L1014.1 311.3L1013.3 314.7L1012.6 318.1L1012.1 321.7L1011.6 325.5L1011.4 329.3L1011.2 333.3L1012.1 333.4L1012.7 329.5L1013.4 325.7L1014.2 322.1L1015.0 318.7L1015.9 315.3L1016.8 312.1L1017.9 309.1L1019.0 306.2L1020.1 303.4L1021.4 300.7ZM1021.9 324.4L1020.6 327.9L1019.5 331.6L1018.6 335.4L1017.9 339.4L1017.4 343.6L1017.1 347.9L1016.9 352.4L1017.0 357.0L1017.3 361.8L1017.7 366.7L1019.0 366.6L1018.9 361.7L1019.0 357.0L1019.2 352.5L1019.6 348.1L1020.1 343.9L1020.8 339.9L1021.5 336.1L1022.5 332.4L1023.6 328.9L1024.8 325.6ZM1025.2 337.8L1024.1 341.5L1023.3 345.4L1022.8 349.6L1022.5 354.0L1022.4 358.8L1022.5 363.8L1022.9 369.1L1023.6 374.7L1024.4 380.5L1025.3 386.7L1026.5 386.5L1025.7 380.3L1025.2 374.5L1025.0 369.0L1024.9 363.7L1025.0 358.8L1025.3 354.2L1025.7 349.9L1026.4 345.9L1027.2 342.2L1028.2 338.8ZM1010.2 303.3L1010.0 309.3L1009.9 315.1L1009.9 320.9L1010.1 326.6L1010.5 332.1L1011.0 337.6L1011.7 343.0L1012.5 348.2L1013.5 353.4L1014.6 358.4L1015.4 358.2L1014.3 353.2L1013.4 348.1L1012.7 342.8L1012.1 337.5L1011.6 332.0L1011.3 326.5L1011.1 320.9L1011.1 315.1L1011.2 309.3L1011.4 303.4ZM998.0 248.4L998.3 259.2L998.6 270.0L998.7 280.7L998.9 291.4L998.9 302.1L998.9 312.7L998.8 323.3L998.7 333.8L998.5 344.3L998.2 354.8L1001.3 355.0L1002.0 344.5L1002.7 334.0L1003.2 323.4L1003.7 312.8L1004.0 302.1L1004.1 291.4L1004.2 280.7L1004.1 269.9L1004.0 259.1L1003.7 248.2ZM995.6 361.7L997.0 364.1L998.3 366.4L999.6 368.8L1000.9 371.2L1002.3 373.5L1003.7 375.9L1005.0 378.2L1006.4 380.6L1007.8 382.9L1009.1 385.3L1012.4 383.4L1011.1 381.1L1009.8 378.7L1008.6 376.3L1007.3 373.9L1006.0 371.5L1004.7 369.1L1003.4 366.7L1002.1 364.3L1000.8 361.9L999.5 359.6ZM927.7 373.5L927.0 382.5L926.2 391.1L925.3 399.3L924.4 407.2L923.4 414.6L922.4 421.7L921.3 428.3L920.1 434.6L918.9 440.5L917.6 446.0L922.4 447.3L923.9 441.7L925.3 435.7L926.6 429.3L927.8 422.5L928.9 415.4L930.0 407.9L930.9 400.0L931.8 391.7L932.6 383.0L933.3 373.9ZM917.2 446.3L916.2 454.7L915.3 463.0L914.4 471.4L913.6 479.7L912.9 488.1L912.2 496.4L911.5 504.8L911.0 513.1L910.4 521.5L910.0 529.8L915.0 530.2L915.6 521.8L916.2 513.5L916.9 505.2L917.6 496.9L918.4 488.6L919.2 480.3L920.0 472.0L920.9 463.6L921.8 455.3L922.8 447.0ZM909.7 529.9L909.5 533.7L909.3 537.5L909.2 541.2L909.1 544.7L909.0 548.2L908.9 551.6L908.9 555.0L908.8 558.2L908.8 561.3L908.8 564.4L914.5 564.3L914.5 561.3L914.5 558.2L914.5 555.0L914.6 551.7L914.6 548.4L914.7 544.9L914.9 541.4L915.0 537.7L915.1 534.0L915.3 530.1ZM929.8 381.5L923.5 382.3L917.6 383.4L911.9 384.9L906.6 386.7L901.7 388.8L897.0 391.2L892.8 393.9L888.9 397.0L885.4 400.3L882.2 403.9L882.8 404.4L886.3 401.3L890.1 398.5L894.1 395.9L898.4 393.7L902.9 391.6L907.8 389.9L912.9 388.3L918.4 387.0L924.1 386.0L930.2 385.2ZM928.9 394.5L920.8 395.9L912.8 398.3L904.8 401.4L896.9 405.5L889.0 410.4L881.2 416.1L873.4 422.6L865.7 430.0L858.1 438.2L850.5 447.3L851.1 447.7L859.2 439.3L867.3 431.6L875.2 424.7L883.1 418.7L891.0 413.4L898.8 408.9L906.5 405.2L914.2 402.3L921.8 400.2L929.4 398.8ZM926.4 411.1L920.2 411.9L914.2 413.0L908.6 414.2L903.3 415.7L898.4 417.4L893.7 419.4L889.5 421.6L885.5 424.1L882.0 426.8L878.9 429.6L879.5 430.4L883.0 428.1L886.7 426.0L890.7 424.2L895.0 422.4L899.6 420.9L904.4 419.5L909.6 418.3L915.0 417.2L920.8 416.3L926.9 415.5ZM923.0 427.8L915.5 429.4L908.2 432.0L901.2 435.7L894.4 440.4L887.9 446.2L881.7 452.9L875.8 460.7L870.2 469.4L864.8 479.1L859.7 489.8L860.3 490.2L866.1 479.9L872.0 470.6L878.0 462.3L884.1 455.1L890.4 448.8L896.8 443.6L903.3 439.3L909.9 436.0L916.7 433.6L923.6 432.2ZM919.6 447.8L914.3 449.0L909.2 450.6L904.4 452.4L899.9 454.6L895.7 457.2L891.8 460.1L888.3 463.3L885.0 466.8L882.1 470.6L879.6 474.7L880.4 475.3L883.5 471.7L886.7 468.4L890.1 465.4L893.8 462.7L897.6 460.3L901.7 458.2L906.0 456.3L910.5 454.6L915.3 453.3L920.4 452.2ZM918.0 467.8L913.2 468.8L908.5 470.4L904.0 472.6L899.7 475.3L895.7 478.6L891.9 482.5L888.3 486.8L884.9 491.7L881.7 497.2L878.7 503.1L879.6 503.6L883.1 498.0L886.7 493.1L890.4 488.6L894.2 484.7L898.1 481.4L902.0 478.6L906.0 476.2L910.1 474.4L914.3 473.0L918.6 472.2ZM914.8 478.1L909.9 481.0L905.3 484.3L900.9 487.9L896.8 491.9L893.0 496.3L889.4 501.0L886.1 506.1L883.1 511.4L880.4 517.1L877.9 523.1L878.8 523.5L881.8 517.9L885.1 512.6L888.5 507.6L892.0 503.0L895.8 498.7L899.6 494.7L903.7 491.1L907.9 487.7L912.3 484.7L916.9 481.9ZM913.9 494.8L908.2 498.4L902.8 502.3L897.7 506.6L892.8 511.3L888.2 516.3L883.9 521.6L879.9 527.3L876.2 533.4L872.7 539.8L869.6 546.5L870.4 546.9L874.2 540.6L878.1 534.6L882.2 529.0L886.5 523.7L890.9 518.7L895.6 514.1L900.4 509.7L905.4 505.7L910.7 502.0L916.1 498.6ZM911.7 503.6L907.1 509.0L902.6 514.7L898.4 520.4L894.3 526.3L890.4 532.3L886.7 538.5L883.2 544.8L879.9 551.2L876.8 557.7L873.7 564.2L875.2 564.9L878.4 558.5L882.0 552.3L885.7 546.2L889.6 540.2L893.5 534.3L897.6 528.6L901.7 522.9L906.0 517.3L910.4 511.8L915.0 506.4ZM912.2 528.1L909.0 530.3L906.1 532.9L903.4 535.9L900.9 539.1L898.6 542.8L896.5 546.7L894.6 551.0L893.0 555.7L891.5 560.6L890.1 565.9L893.2 566.6L894.5 561.5L896.2 556.8L898.0 552.5L900.0 548.5L902.0 544.8L904.3 541.6L906.6 538.6L909.1 536.1L911.7 533.8L914.5 531.9ZM909.9 542.0L908.3 544.1L906.7 546.2L905.2 548.3L903.7 550.4L902.3 552.5L900.9 554.7L899.6 556.8L898.4 559.0L897.2 561.1L896.0 563.2L899.3 565.0L900.5 563.0L901.7 560.9L903.0 558.9L904.3 556.9L905.7 554.9L907.2 552.9L908.7 550.8L910.2 548.8L911.8 546.8L913.4 544.7ZM928.2 390.7L930.5 397.1L932.7 403.9L934.8 411.0L936.8 418.4L938.8 426.2L940.7 434.3L942.5 442.8L944.2 451.6L945.8 460.7L947.4 470.1L949.3 469.9L948.1 460.3L946.8 451.1L945.3 442.2L943.7 433.7L942.1 425.5L940.2 417.6L938.3 410.0L936.2 402.8L934.1 395.9L931.8 389.3ZM933.6 376.2L936.7 384.9L939.6 393.8L942.2 403.0L944.5 412.4L946.5 422.0L948.2 431.8L949.7 441.8L950.9 452.1L951.9 462.6L952.5 473.4L954.1 473.3L953.8 462.5L953.1 451.9L952.2 441.5L950.9 431.4L949.3 421.5L947.4 411.7L945.1 402.2L942.6 393.0L939.7 383.9L936.5 375.1ZM938.2 376.7L941.7 383.7L944.9 391.0L947.7 398.5L950.2 406.4L952.3 414.5L954.1 423.0L955.5 431.8L956.6 440.9L957.3 450.3L957.7 460.0L959.0 460.0L959.0 450.2L958.6 440.7L957.8 431.5L956.6 422.6L955.0 413.9L953.0 405.6L950.6 397.5L947.8 389.8L944.5 382.4L940.9 375.2ZM924.8 410.5L926.9 417.9L928.9 425.3L930.9 432.8L933.0 440.3L935.0 447.9L937.1 455.6L939.3 463.3L941.4 471.1L943.6 479.0L945.7 486.9L947.6 486.4L945.8 478.4L943.9 470.5L942.1 462.6L940.2 454.8L938.3 447.1L936.4 439.4L934.4 431.8L932.5 424.3L930.5 416.9L928.5 409.5ZM921.5 438.9L923.5 445.9L925.5 452.9L927.6 460.0L929.6 467.1L931.7 474.2L933.8 481.4L935.9 488.5L938.1 495.7L940.2 503.0L942.4 510.2L944.2 509.8L942.4 502.4L940.6 495.1L938.7 487.8L936.9 480.5L935.0 473.3L933.0 466.1L931.1 459.0L929.1 451.9L927.1 444.8L925.1 437.8ZM918.2 460.5L920.2 467.8L922.2 475.0L924.3 482.2L926.3 489.3L928.4 496.3L930.5 503.2L932.6 510.1L934.7 516.9L936.9 523.6L939.1 530.3L940.9 529.7L939.1 523.0L937.3 516.2L935.4 509.3L933.5 502.4L931.6 495.4L929.7 488.3L927.7 481.2L925.8 474.0L923.8 466.8L921.8 459.5ZM916.5 483.9L918.5 489.9L920.5 496.0L922.4 502.2L924.4 508.4L926.3 514.6L928.2 521.0L930.0 527.4L931.9 533.8L933.8 540.3L935.6 546.9L937.7 546.4L936.2 539.7L934.6 533.1L933.0 526.6L931.3 520.1L929.6 513.7L927.8 507.4L925.9 501.1L924.0 494.9L922.1 488.8L920.1 482.7ZM914.0 513.9L915.7 519.3L917.3 524.7L918.9 530.0L920.6 535.3L922.2 540.4L923.8 545.4L925.4 550.4L926.9 555.3L928.5 560.1L930.0 564.8L932.7 564.0L931.3 559.2L929.9 554.4L928.5 549.5L927.0 544.5L925.5 539.4L924.0 534.2L922.5 529.0L920.9 523.7L919.3 518.3L917.6 512.8ZM985.2 427.0L986.9 428.3L988.6 429.6L990.4 430.9L992.1 432.2L993.9 433.4L995.7 434.7L997.4 435.9L999.2 437.2L1000.9 438.5L1002.7 439.8L1005.3 436.2L1003.6 434.9L1001.9 433.6L1000.2 432.3L998.5 430.9L996.8 429.6L995.1 428.2L993.4 426.9L991.6 425.6L989.9 424.3L988.2 423.0ZM987.8 396.6L987.6 403.1L987.4 409.4L987.2 415.4L987.0 421.1L986.7 426.5L986.4 431.7L986.1 436.6L985.8 441.3L985.4 445.7L985.1 449.8L988.2 450.2L988.9 446.1L989.4 441.6L989.9 437.0L990.4 432.0L990.8 426.8L991.2 421.3L991.5 415.6L991.8 409.5L992.0 403.3L992.2 396.7ZM984.9 449.4L982.2 455.9L978.8 462.4L974.6 469.0L969.6 475.6L963.8 482.2L957.3 488.9L949.9 495.7L941.7 502.4L932.8 509.3L923.0 516.1L923.7 517.2L933.8 510.7L943.1 504.2L951.6 497.7L959.3 491.1L966.2 484.4L972.3 477.8L977.5 471.0L982.0 464.3L985.6 457.5L988.4 450.6ZM993.6 459.4L991.9 463.8L990.4 468.8L988.9 474.3L987.6 480.5L986.4 487.3L985.3 494.6L984.4 502.5L983.5 511.1L982.7 520.2L982.1 529.9L984.6 530.1L985.4 520.4L986.2 511.3L987.2 502.9L988.3 495.0L989.4 487.7L990.6 481.1L992.0 475.1L993.4 469.6L994.9 464.8L996.4 460.6ZM981.8 530.2L982.2 534.0L982.7 537.8L983.2 541.5L983.8 545.0L984.4 548.5L985.1 551.9L985.8 555.2L986.6 558.5L987.4 561.6L988.3 564.6L990.7 563.9L989.9 561.0L989.2 557.9L988.5 554.7L987.9 551.4L987.3 548.0L986.7 544.6L986.2 541.0L985.7 537.4L985.3 533.7L984.9 529.8ZM951.1 473.6L953.5 478.2L955.9 482.4L958.3 486.5L960.8 490.2L963.3 493.7L965.9 496.9L968.4 499.8L971.1 502.5L973.7 504.9L976.4 507.0L976.9 506.4L974.3 504.2L971.7 501.8L969.2 499.1L966.7 496.2L964.2 493.0L961.7 489.5L959.3 485.8L956.9 481.8L954.6 477.6L952.2 473.1ZM957.7 495.2L959.4 500.5L961.2 505.8L963.1 511.1L965.0 516.3L967.0 521.5L969.0 526.6L971.2 531.7L973.4 536.8L975.6 541.8L978.0 546.8L978.7 546.5L976.4 541.5L974.2 536.4L972.1 531.3L970.0 526.2L968.0 521.0L966.1 515.9L964.2 510.6L962.4 505.4L960.6 500.1L958.9 494.8ZM973.5 373.3L971.8 375.8L970.2 378.2L968.8 380.5L967.6 382.7L966.6 384.7L965.8 386.7L965.2 388.5L964.8 390.3L964.6 391.9L964.6 393.3L965.4 393.3L965.6 392.0L965.9 390.5L966.4 388.9L967.1 387.2L968.0 385.4L969.0 383.4L970.1 381.3L971.5 379.0L973.0 376.7L974.8 374.2ZM989.8 451.8L990.5 461.3L991.3 470.4L992.1 479.4L993.0 488.0L993.9 496.4L994.8 504.6L995.8 512.4L996.9 520.0L998.0 527.4L999.1 534.4L1002.2 533.9L1001.2 526.9L1000.2 519.6L999.3 512.0L998.4 504.1L997.5 496.0L996.6 487.7L995.8 479.0L995.0 470.1L994.3 461.0L993.5 451.5ZM942.9 378.0L946.2 381.4L949.3 385.2L952.1 389.4L954.8 394.0L957.2 399.0L959.4 404.4L961.4 410.2L963.2 416.4L964.8 423.0L966.2 430.1L967.1 429.9L966.1 422.8L964.8 416.0L963.2 409.7L961.4 403.7L959.2 398.1L956.9 392.9L954.2 388.1L951.3 383.7L948.1 379.7L944.7 376.1ZM948.6 375.8L952.3 380.5L956.1 384.8L959.8 388.8L963.6 392.5L967.4 395.8L971.2 398.8L975.1 401.4L978.9 403.6L982.7 405.5L986.5 407.0L986.8 406.3L983.2 404.5L979.6 402.4L975.9 400.0L972.3 397.3L968.7 394.3L965.0 391.0L961.4 387.3L957.7 383.4L954.0 379.1L950.3 374.5ZM982.8 375.9L983.7 378.3L984.6 380.7L985.4 383.2L986.0 385.6L986.6 388.0L987.1 390.4L987.5 392.8L987.8 395.2L988.0 397.6L988.1 400.0L991.9 400.0L991.9 397.4L991.8 394.8L991.6 392.3L991.3 389.7L990.8 387.1L990.3 384.5L989.6 381.9L988.8 379.4L987.9 376.8L986.9 374.2ZM928.3 388.1L923.0 388.4L917.6 389.3L912.1 390.9L906.4 393.0L900.6 395.7L894.6 399.0L888.6 402.9L882.4 407.4L876.2 412.4L869.8 418.0L870.2 418.6L877.0 413.5L883.6 408.9L889.9 404.9L896.0 401.4L901.9 398.5L907.6 396.1L913.1 394.2L918.4 392.9L923.5 392.1L928.3 391.9ZM924.9 419.8L919.6 420.4L914.3 421.6L909.0 423.2L903.5 425.5L898.0 428.2L892.5 431.5L886.9 435.3L881.2 439.6L875.5 444.4L869.8 449.7L870.2 450.3L876.4 445.4L882.4 441.1L888.2 437.2L893.9 433.9L899.5 431.0L904.9 428.5L910.1 426.6L915.3 425.1L920.3 424.1L925.1 423.5ZM917.1 458.1L913.3 459.2L909.4 460.9L905.4 463.2L901.3 466.1L897.1 469.7L892.8 473.8L888.5 478.6L884.0 483.9L879.4 489.9L874.7 496.4L875.3 496.9L880.5 490.7L885.4 485.2L890.2 480.2L894.8 475.8L899.1 472.0L903.3 468.8L907.3 466.2L911.0 464.2L914.5 462.7L917.9 461.9ZM913.9 486.8L910.4 489.4L906.9 492.3L903.2 495.7L899.4 499.4L895.5 503.5L891.6 508.0L887.5 512.9L883.3 518.1L879.1 523.8L874.7 529.8L875.3 530.2L880.1 524.6L884.8 519.3L889.3 514.4L893.6 509.9L897.8 505.7L901.8 501.8L905.6 498.3L909.3 495.1L912.8 492.3L916.1 489.9ZM913.1 515.1L910.1 517.4L907.1 520.1L904.1 523.3L901.1 526.8L898.1 530.7L895.1 535.0L892.1 539.8L889.0 544.9L886.0 550.5L882.9 556.4L883.7 556.9L887.3 551.3L890.8 546.0L894.1 541.2L897.4 536.7L900.6 532.6L903.7 529.0L906.7 525.7L909.7 522.8L912.5 520.3L915.3 518.2ZM927.6 400.8L931.0 407.8L934.1 415.0L937.0 422.5L939.7 430.1L942.1 437.9L944.3 445.9L946.3 454.2L948.1 462.6L949.7 471.2L951.0 480.1L952.3 479.9L951.4 471.0L950.2 462.2L948.7 453.6L947.0 445.3L945.0 437.1L942.7 429.1L940.1 421.3L937.2 413.8L934.1 406.4L930.7 399.2ZM923.5 427.5L927.0 434.2L930.3 441.0L933.4 447.9L936.3 455.0L939.0 462.1L941.5 469.5L943.8 476.9L945.8 484.5L947.7 492.2L949.4 500.1L950.6 499.9L949.4 491.9L947.9 484.0L946.1 476.3L944.1 468.7L941.8 461.2L939.3 453.8L936.5 446.6L933.4 439.6L930.1 432.6L926.5 425.8ZM920.2 450.8L923.7 457.5L927.0 464.3L930.1 471.2L933.0 478.3L935.7 485.5L938.2 492.8L940.4 500.3L942.5 507.8L944.4 515.6L946.0 523.4L947.3 523.2L946.1 515.2L944.6 507.4L942.8 499.6L940.8 492.0L938.5 484.5L935.9 477.2L933.1 470.0L930.1 462.9L926.8 456.0L923.2 449.2ZM916.8 474.1L920.0 480.8L923.1 487.5L926.1 494.3L928.9 501.1L931.5 508.0L934.0 515.0L936.4 522.0L938.6 529.1L940.8 536.2L942.7 543.5L944.0 543.2L942.4 535.8L940.7 528.5L938.8 521.3L936.6 514.1L934.3 507.0L931.8 500.0L929.1 493.0L926.2 486.1L923.1 479.3L919.9 472.6ZM915.1 497.4L917.9 503.8L920.5 510.3L923.0 516.9L925.4 523.6L927.6 530.3L929.7 537.2L931.7 544.0L933.5 551.0L935.2 558.1L936.7 565.2L938.6 564.9L937.2 557.7L935.8 550.5L934.2 543.4L932.5 536.4L930.5 529.4L928.4 522.6L926.1 515.8L923.7 509.1L921.0 502.5L918.2 496.0ZM946.5 375.9L950.1 383.0L953.2 390.1L956.0 397.3L958.2 404.6L960.1 411.9L961.5 419.4L962.5 426.9L963.1 434.5L963.2 442.2L962.9 450.0L963.8 450.0L964.5 442.2L964.6 434.4L964.3 426.7L963.5 419.1L962.3 411.5L960.5 404.0L958.3 396.5L955.5 389.2L952.3 381.9L948.7 374.7ZM958.3 377.6L961.3 381.0L964.0 384.9L966.4 389.1L968.6 393.7L970.5 398.7L972.2 404.2L973.6 410.0L974.8 416.3L975.7 422.9L976.3 430.0L977.0 430.0L976.7 422.8L976.0 416.1L975.0 409.7L973.7 403.8L972.1 398.2L970.2 393.0L968.1 388.3L965.6 383.9L962.8 379.9L959.7 376.3ZM1085.6 378.3L1089.3 380.5L1093.0 382.8L1096.8 385.2L1100.5 387.7L1104.2 390.3L1108.0 393.0L1111.7 395.8L1115.5 398.7L1119.3 401.8L1123.1 404.9L1123.6 404.4L1119.9 401.1L1116.2 397.9L1112.5 394.9L1108.8 391.9L1105.1 389.1L1101.3 386.4L1097.6 383.9L1093.9 381.5L1090.1 379.2L1086.4 377.0ZM1098.5 379.3L1100.9 380.0L1103.4 380.8L1105.8 381.7L1108.3 382.6L1110.8 383.5L1113.2 384.4L1115.7 385.4L1118.2 386.5L1120.7 387.6L1123.2 388.7L1123.5 388.0L1121.1 386.7L1118.6 385.5L1116.2 384.3L1113.8 383.2L1111.3 382.1L1108.8 381.2L1106.4 380.2L1103.9 379.4L1101.4 378.6L1098.9 377.8ZM1071.1 390.5L1073.4 393.4L1075.8 396.2L1078.3 398.8L1080.8 401.2L1083.3 403.4L1085.9 405.5L1088.5 407.4L1091.1 409.1L1093.8 410.6L1096.5 412.0L1096.8 411.3L1094.2 409.9L1091.7 408.2L1089.2 406.4L1086.7 404.5L1084.2 402.4L1081.8 400.1L1079.4 397.7L1077.0 395.2L1074.6 392.4L1072.3 389.5ZM1072.5 392.2L1075.2 396.4L1077.8 400.6L1080.3 404.7L1082.7 408.6L1085.1 412.5L1087.5 416.3L1089.8 419.9L1092.0 423.4L1094.2 426.9L1096.3 430.2L1097.0 429.8L1095.1 426.4L1093.0 422.8L1090.9 419.2L1088.8 415.5L1086.5 411.7L1084.2 407.8L1081.8 403.8L1079.3 399.7L1076.8 395.5L1074.1 391.2ZM1046.0 396.0L1049.5 404.8L1052.7 414.1L1055.5 423.9L1058.2 434.1L1060.5 444.9L1062.5 456.3L1064.3 468.1L1065.8 480.4L1067.0 493.3L1068.0 506.7L1068.7 506.7L1068.7 493.2L1068.2 480.2L1067.4 467.7L1066.1 455.7L1064.5 444.2L1062.5 433.2L1060.1 422.6L1057.3 412.6L1054.2 403.1L1050.7 394.0ZM1048.8 389.8L1054.4 394.9L1059.6 400.6L1064.3 406.9L1068.5 413.7L1072.3 421.1L1075.7 429.0L1078.6 437.5L1081.0 446.7L1083.0 456.4L1084.5 466.7L1085.5 466.6L1084.5 456.2L1083.0 446.3L1080.9 436.9L1078.3 428.1L1075.2 419.8L1071.5 412.0L1067.2 404.9L1062.4 398.3L1057.1 392.3L1051.2 386.9ZM1027.5 412.7L1028.4 420.3L1029.8 427.7L1031.7 435.0L1034.0 442.0L1036.9 448.9L1040.2 455.6L1043.9 462.1L1048.2 468.4L1052.9 474.4L1058.0 480.2L1058.6 479.8L1054.2 473.4L1050.2 467.0L1046.6 460.6L1043.4 454.0L1040.6 447.3L1038.2 440.6L1036.2 433.7L1034.6 426.7L1033.4 419.6L1032.5 412.3ZM1037.8 416.9L1038.6 423.0L1039.8 429.0L1041.3 435.0L1043.1 441.0L1045.2 446.9L1047.6 452.7L1050.4 458.4L1053.4 464.1L1056.8 469.7L1060.5 475.2L1061.2 474.8L1058.1 468.9L1055.4 463.1L1052.9 457.3L1050.6 451.5L1048.6 445.6L1046.8 439.8L1045.3 434.0L1044.0 428.2L1043.0 422.3L1042.2 416.4ZM1046.2 413.1L1047.9 419.2L1049.7 425.3L1051.5 431.2L1053.4 437.1L1055.3 442.8L1057.4 448.5L1059.5 454.1L1061.7 459.5L1063.9 464.9L1066.2 470.2L1067.1 469.8L1065.5 464.3L1063.8 458.8L1062.2 453.2L1060.5 447.5L1058.8 441.7L1057.1 435.9L1055.5 430.0L1053.8 424.1L1052.1 418.0L1050.5 411.9ZM1053.5 405.5L1056.7 414.4L1060.1 423.0L1063.7 431.3L1067.6 439.2L1071.8 446.9L1076.2 454.2L1080.9 461.2L1085.8 467.9L1091.0 474.2L1096.4 480.2L1096.9 479.8L1091.9 473.5L1087.1 466.9L1082.6 460.1L1078.2 453.0L1074.1 445.6L1070.1 438.0L1066.4 430.0L1062.9 421.8L1059.6 413.3L1056.5 404.5ZM995.3 381.0L999.6 388.8L1003.5 396.5L1007.2 404.1L1010.5 411.5L1013.5 418.8L1016.2 426.0L1018.5 433.0L1020.6 440.0L1022.3 446.8L1023.7 453.5L1026.3 453.1L1025.2 446.2L1023.8 439.2L1022.0 432.0L1019.8 424.7L1017.3 417.3L1014.4 409.9L1011.1 402.3L1007.4 394.6L1003.4 386.8L999.1 378.9ZM1004.6 376.6L1008.7 385.3L1012.6 394.2L1016.3 403.3L1019.7 412.7L1022.9 422.3L1025.8 432.1L1028.4 442.1L1030.8 452.3L1033.0 462.8L1034.9 473.5L1036.8 473.2L1035.3 462.4L1033.4 451.8L1031.3 441.4L1028.9 431.2L1026.1 421.3L1023.1 411.6L1019.7 402.1L1016.1 392.8L1012.2 383.7L1007.9 374.9ZM995.4 403.3L1000.0 411.1L1004.5 418.8L1008.8 426.6L1013.0 434.3L1017.1 442.0L1021.0 449.7L1024.8 457.4L1028.5 465.1L1032.1 472.8L1035.5 480.5L1037.8 479.5L1034.8 471.6L1031.5 463.8L1028.1 455.9L1024.5 448.0L1020.7 440.2L1016.7 432.3L1012.6 424.5L1008.3 416.7L1003.8 408.9L999.2 401.1ZM994.4 424.8L999.8 432.4L1004.9 439.6L1009.8 446.6L1014.4 453.4L1018.8 460.0L1023.0 466.2L1026.9 472.3L1030.6 478.1L1034.0 483.6L1037.2 488.9L1039.5 487.7L1036.7 482.1L1033.6 476.3L1030.3 470.2L1026.6 464.0L1022.6 457.5L1018.4 450.8L1013.8 443.9L1009.0 436.8L1003.9 429.4L998.5 421.9ZM995.9 440.1L1002.7 448.7L1009.7 458.2L1016.8 468.3L1024.0 479.1L1031.2 490.7L1038.6 503.0L1046.1 516.1L1053.7 529.8L1061.5 544.3L1069.3 559.5L1070.7 558.8L1063.4 543.3L1056.1 528.6L1048.9 514.5L1041.7 501.3L1034.5 488.8L1027.4 477.0L1020.3 465.9L1013.2 455.6L1006.2 446.1L999.3 437.3ZM995.0 450.9L1000.7 459.7L1005.9 468.3L1010.5 476.7L1014.7 484.9L1018.4 492.9L1021.6 500.7L1024.3 508.3L1026.5 515.7L1028.3 523.0L1029.5 530.0L1030.5 530.0L1029.8 522.7L1028.6 515.2L1026.7 507.6L1024.3 499.7L1021.4 491.6L1017.8 483.4L1013.8 475.0L1009.1 466.4L1003.9 457.7L998.2 448.8ZM995.8 474.4L1001.1 482.1L1006.8 490.0L1012.8 498.0L1019.2 506.1L1026.1 514.3L1033.3 522.7L1040.9 531.2L1048.9 539.8L1057.2 548.5L1066.0 557.3L1067.4 556.0L1059.0 546.8L1051.0 537.8L1043.4 529.0L1036.0 520.3L1029.1 511.8L1022.5 503.5L1016.2 495.4L1010.3 487.4L1004.7 479.6L999.5 471.9ZM1035.7 480.1L1036.0 485.0L1036.3 489.8L1036.4 494.6L1036.5 499.2L1036.5 503.7L1036.4 508.2L1036.3 512.5L1036.1 516.8L1035.8 520.9L1035.5 525.0L1036.2 525.0L1036.8 521.0L1037.3 516.8L1037.6 512.6L1037.9 508.2L1038.1 503.8L1038.2 499.2L1038.2 494.5L1038.1 489.8L1037.9 484.9L1037.6 479.9ZM1040.9 495.1L1041.2 497.5L1041.5 499.8L1041.8 502.2L1042.1 504.7L1042.4 507.2L1042.7 509.7L1043.0 512.2L1043.3 514.8L1043.5 517.4L1043.8 520.0L1044.5 520.0L1044.4 517.3L1044.3 514.7L1044.2 512.1L1044.0 509.5L1043.8 507.0L1043.6 504.5L1043.3 502.1L1043.1 499.6L1042.8 497.2L1042.4 494.9ZM994.8 500.3L1000.5 508.2L1006.3 515.9L1012.2 523.1L1018.3 530.1L1024.6 536.6L1031.0 542.8L1037.5 548.6L1044.2 554.1L1051.0 559.2L1057.9 564.0L1059.7 561.4L1053.1 556.5L1046.6 551.2L1040.3 545.6L1034.0 539.6L1027.9 533.4L1021.9 526.8L1016.0 520.0L1010.2 512.8L1004.5 505.3L998.9 497.4ZM1003.7 515.1L1009.3 519.1L1014.6 522.8L1019.7 526.4L1024.6 529.9L1029.3 533.2L1033.7 536.4L1038.0 539.4L1042.0 542.2L1045.8 544.9L1049.4 547.4L1050.6 545.9L1047.3 543.0L1043.7 539.9L1039.9 536.8L1035.9 533.5L1031.6 530.1L1027.0 526.6L1022.2 523.0L1017.1 519.3L1011.8 515.5L1006.3 511.5ZM1006.8 524.9L1012.2 529.9L1017.3 534.6L1022.2 539.1L1026.9 543.3L1031.3 547.3L1035.6 551.0L1039.6 554.4L1043.4 557.6L1047.0 560.5L1050.2 563.3L1051.9 561.4L1048.7 558.6L1045.4 555.4L1041.8 551.9L1038.0 548.3L1034.0 544.4L1029.7 540.3L1025.1 536.0L1020.3 531.5L1015.2 526.7L1009.8 521.7ZM997.7 487.9L998.3 496.4L998.9 504.7L999.5 512.8L1000.1 520.7L1000.7 528.5L1001.3 536.0L1001.9 543.4L1002.6 550.7L1003.2 557.7L1003.8 564.6L1007.0 564.3L1006.4 557.4L1005.9 550.4L1005.4 543.2L1004.8 535.8L1004.3 528.2L1003.8 520.4L1003.2 512.5L1002.6 504.4L1002.1 496.1L1001.5 487.7ZM1005.1 521.9L1005.7 526.0L1006.3 530.2L1006.8 534.5L1007.4 538.8L1008.0 543.1L1008.6 547.5L1009.2 551.9L1009.9 556.3L1010.5 560.8L1011.1 565.4L1013.6 565.0L1013.0 560.5L1012.5 556.0L1012.0 551.5L1011.5 547.1L1011.0 542.7L1010.4 538.4L1009.9 534.1L1009.3 529.8L1008.8 525.6L1008.2 521.5ZM1013.5 543.9L1014.4 546.1L1015.4 548.2L1016.4 550.3L1017.5 552.5L1018.6 554.6L1019.8 556.7L1021.1 558.8L1022.4 560.9L1023.7 563.0L1025.1 565.2L1027.2 563.8L1025.9 561.7L1024.6 559.6L1023.4 557.5L1022.3 555.3L1021.2 553.2L1020.2 551.1L1019.2 549.0L1018.2 546.9L1017.3 544.8L1016.5 542.8ZM1013.2 375.8L1014.8 379.6L1016.3 383.4L1017.7 387.2L1019.1 390.9L1020.4 394.7L1021.6 398.5L1022.7 402.2L1023.8 406.0L1024.8 409.8L1025.7 413.5L1027.6 413.1L1026.9 409.3L1026.2 405.4L1025.3 401.6L1024.3 397.7L1023.2 393.8L1022.0 390.0L1020.7 386.1L1019.2 382.3L1017.7 378.4L1016.1 374.6ZM907.9 554.7L907.9 565.1L907.7 575.5L907.4 585.6L906.9 595.7L906.3 605.5L905.6 615.3L904.7 624.9L903.7 634.4L902.5 643.7L901.2 652.9L905.5 653.8L907.5 644.6L909.3 635.2L910.8 625.7L912.2 616.0L913.3 606.1L914.1 596.1L914.8 586.0L915.2 575.7L915.4 565.2L915.4 554.6ZM900.9 652.8L899.1 660.6L897.0 668.2L894.5 675.6L891.8 682.8L888.7 689.8L885.4 696.7L881.7 703.3L877.7 709.8L873.4 716.2L868.8 722.3L871.2 724.3L876.3 718.3L880.9 712.0L885.3 705.5L889.3 698.8L892.9 691.8L896.2 684.7L899.1 677.3L901.7 669.7L903.9 661.9L905.8 653.8ZM868.8 721.9L866.1 724.2L863.4 726.4L860.7 728.5L858.0 730.6L855.4 732.6L852.8 734.6L850.1 736.4L847.5 738.3L844.9 739.9L842.2 741.4L843.0 743.1L845.8 741.6L848.6 740.1L851.5 738.6L854.4 737.0L857.2 735.2L860.0 733.4L862.9 731.4L865.7 729.3L868.5 727.1L871.2 724.8ZM895.0 555.2L890.9 560.6L887.1 566.2L883.5 572.0L880.1 578.0L877.0 584.2L874.1 590.6L871.4 597.3L868.9 604.1L866.6 611.0L864.6 618.2L865.4 618.4L867.9 611.5L870.5 604.7L873.3 598.1L876.3 591.7L879.4 585.5L882.7 579.4L886.1 573.6L889.7 567.9L893.5 562.4L897.4 557.2ZM871.0 555.4L870.2 557.5L869.3 559.5L868.5 561.7L867.6 563.8L866.8 566.0L865.9 568.2L865.0 570.4L864.0 572.7L863.1 575.0L862.2 577.3L862.8 577.7L864.0 575.4L865.1 573.2L866.1 570.9L867.1 568.7L868.1 566.5L869.0 564.4L869.9 562.2L870.8 560.1L871.6 558.0L872.4 556.0ZM909.0 561.9L904.4 565.5L900.0 569.5L895.8 573.9L892.0 578.7L888.4 583.8L885.1 589.3L882.1 595.1L879.3 601.4L876.8 607.9L874.6 614.9L875.4 615.1L878.1 608.4L881.0 602.1L884.0 596.2L887.3 590.6L890.8 585.4L894.4 580.5L898.3 576.1L902.3 571.9L906.5 568.2L911.0 564.7ZM906.7 598.4L903.8 598.4L901.0 598.2L898.2 598.0L895.6 597.7L893.0 597.3L890.5 596.8L888.0 596.2L885.6 595.5L883.3 594.7L881.0 593.8L880.7 594.5L882.8 595.8L885.0 597.0L887.4 598.1L889.8 599.0L892.4 599.8L895.1 600.5L897.9 600.9L900.7 601.3L903.6 601.5L906.7 601.6ZM903.8 609.0L901.5 611.3L899.0 613.4L896.2 615.2L893.3 616.7L890.1 617.9L886.6 618.8L882.9 619.5L878.9 619.8L874.6 619.9L870.1 619.6L869.9 620.4L874.5 621.1L878.9 621.5L883.0 621.5L887.0 621.2L890.8 620.4L894.3 619.3L897.7 617.8L900.8 615.9L903.6 613.7L906.2 611.0ZM885.6 569.7L883.7 576.1L882.1 582.8L880.6 589.7L879.4 596.8L878.4 604.1L877.7 611.5L877.2 619.2L876.9 627.0L876.9 635.1L877.1 643.3L877.9 643.3L878.0 635.1L878.3 627.1L878.7 619.3L879.4 611.7L880.3 604.3L881.4 597.1L882.7 590.1L884.1 583.3L885.8 576.7L887.7 570.3ZM906.1 624.9L902.0 628.3L898.1 631.8L894.4 635.3L890.9 638.9L887.6 642.5L884.5 646.2L881.7 649.9L879.0 653.7L876.6 657.5L874.5 661.3L875.5 662.0L878.2 658.6L881.0 655.1L884.0 651.8L887.1 648.4L890.3 645.0L893.7 641.7L897.3 638.3L901.0 635.0L904.8 631.7L908.9 628.4ZM874.9 660.9L873.3 661.1L871.6 661.2L870.0 661.3L868.4 661.4L866.9 661.5L865.3 661.5L863.7 661.6L862.2 661.6L860.7 661.6L859.2 661.6L859.1 662.4L860.7 662.5L862.2 662.7L863.7 662.8L865.3 662.8L866.9 662.9L868.5 662.8L870.1 662.8L871.8 662.7L873.4 662.6L875.1 662.4ZM885.1 645.6L880.2 653.2L875.5 660.4L871.0 667.4L866.7 674.1L862.7 680.6L858.8 686.8L855.2 692.7L851.7 698.4L848.5 703.8L845.5 709.0L846.1 709.4L849.7 704.6L853.3 699.5L857.2 694.0L861.1 688.3L865.3 682.3L869.5 676.0L874.0 669.4L878.6 662.4L883.3 655.2L888.2 647.7ZM902.5 645.0L896.9 648.0L891.6 651.7L886.7 656.1L882.2 661.0L878.1 666.6L874.4 672.8L871.2 679.5L868.3 686.9L865.9 694.8L863.8 703.2L864.5 703.4L867.2 695.2L870.1 687.5L873.3 680.5L876.8 674.2L880.7 668.4L884.8 663.2L889.1 658.6L893.8 654.7L898.8 651.2L904.1 648.4ZM898.5 669.5L896.7 676.0L895.2 682.6L894.2 689.2L893.5 696.0L893.3 702.9L893.4 709.8L893.9 716.9L894.8 724.0L896.2 731.2L897.9 738.4L898.8 738.2L897.5 730.9L896.6 723.8L896.0 716.7L895.8 709.8L895.9 702.9L896.4 696.2L897.1 689.7L898.2 683.2L899.7 676.8L901.5 670.5ZM910.9 626.9L911.6 633.5L912.0 640.4L912.1 647.4L911.9 654.6L911.4 662.0L910.6 669.5L909.6 677.2L908.2 685.2L906.6 693.3L904.6 701.6L905.4 701.8L907.8 693.6L909.9 685.5L911.6 677.6L913.0 669.8L914.0 662.2L914.7 654.7L915.1 647.4L915.1 640.3L914.7 633.3L914.1 626.5ZM900.1 676.7L900.6 683.4L901.3 690.0L902.3 696.5L903.5 702.8L905.0 709.1L906.7 715.2L908.7 721.2L911.0 727.1L913.5 732.9L916.3 738.5L917.0 738.2L914.7 732.4L912.6 726.5L910.7 720.6L909.0 714.5L907.5 708.4L906.2 702.3L905.2 696.0L904.3 689.6L903.7 683.1L903.2 676.6ZM913.2 567.3L915.9 574.4L918.4 581.5L921.0 588.8L923.5 596.3L925.9 603.8L928.3 611.5L930.6 619.3L932.9 627.3L935.2 635.3L937.4 643.6L939.3 643.1L937.4 634.8L935.5 626.6L933.4 618.5L931.3 610.6L929.1 602.8L926.8 595.2L924.4 587.7L922.0 580.3L919.4 573.1L916.8 566.0ZM911.6 599.0L913.6 604.0L915.8 608.9L918.0 613.7L920.3 618.3L922.7 622.9L925.1 627.3L927.7 631.6L930.3 635.8L933.1 639.9L935.9 643.9L937.5 642.8L935.0 638.7L932.6 634.5L930.2 630.2L927.9 625.8L925.7 621.3L923.4 616.8L921.3 612.1L919.2 607.4L917.1 602.6L915.1 597.6ZM919.8 555.5L923.3 564.3L926.5 573.0L929.3 581.7L931.8 590.2L933.9 598.7L935.6 607.1L937.0 615.4L938.1 623.7L938.7 631.9L939.0 640.0L941.0 640.0L940.9 631.8L940.4 623.5L939.6 615.1L938.4 606.6L936.7 598.1L934.7 589.5L932.3 580.8L929.5 572.0L926.3 563.2L922.7 554.3ZM931.6 555.6L935.4 566.0L938.6 576.4L941.0 586.8L942.8 597.2L943.9 607.6L944.3 618.0L944.1 628.4L943.2 638.9L941.6 649.3L939.4 659.8L940.6 660.2L943.3 649.7L945.2 639.1L946.4 628.6L946.9 618.0L946.7 607.4L945.7 596.8L944.0 586.2L941.6 575.6L938.4 565.0L934.5 554.4ZM939.2 659.9L938.5 665.7L937.6 671.2L936.6 676.3L935.4 681.0L934.1 685.4L932.7 689.5L931.1 693.2L929.4 696.5L927.6 699.6L925.5 702.3L926.1 702.7L928.3 700.1L930.3 697.1L932.2 693.7L933.9 689.9L935.4 685.8L936.8 681.4L938.1 676.6L939.1 671.4L940.0 665.9L940.8 660.1ZM940.0 556.2L942.3 561.5L944.2 567.0L945.9 572.5L947.4 578.2L948.6 584.0L949.5 590.0L950.2 596.0L950.6 602.2L950.8 608.5L950.7 614.9L952.6 615.1L953.0 608.5L953.0 602.1L952.8 595.8L952.3 589.6L951.5 583.5L950.3 577.6L948.9 571.7L947.2 566.0L945.2 560.4L942.9 554.9ZM930.2 660.0L933.5 656.1L936.6 652.0L939.5 647.6L942.1 642.9L944.5 638.1L946.7 633.0L948.6 627.6L950.3 622.1L951.7 616.3L952.9 610.3L950.4 609.7L948.8 615.5L946.9 621.0L944.9 626.3L942.8 631.3L940.5 636.1L938.0 640.7L935.4 645.0L932.6 649.1L929.6 653.0L926.5 656.6ZM920.6 670.5L923.2 667.2L925.5 664.1L927.7 661.0L929.7 658.1L931.4 655.4L933.0 652.7L934.3 650.2L935.5 647.9L936.4 645.6L937.1 643.5L936.2 643.2L935.4 645.2L934.4 647.3L933.2 649.6L931.8 652.1L930.2 654.6L928.5 657.3L926.5 660.2L924.3 663.1L922.0 666.3L919.4 669.5ZM988.0 556.2L982.6 561.6L977.5 568.0L972.9 575.4L968.6 583.7L964.7 592.9L961.2 603.1L958.0 614.2L955.2 626.3L952.8 639.3L950.7 653.2L952.6 653.5L955.1 639.7L957.8 626.8L960.9 615.0L964.2 604.1L967.9 594.1L971.8 585.2L976.1 577.2L980.6 570.2L985.4 564.1L990.5 559.0ZM993.6 562.0L988.0 568.6L982.7 576.0L977.8 584.4L973.1 593.5L968.9 603.5L964.9 614.4L961.3 626.2L958.0 638.7L955.0 652.2L952.4 666.5L954.3 666.8L957.3 652.7L960.5 639.4L964.1 627.0L967.9 615.4L972.0 604.8L976.3 595.0L980.9 586.1L985.8 578.1L991.0 570.9L996.4 564.6ZM996.8 568.9L991.2 577.3L985.8 586.3L980.8 595.9L975.9 606.1L971.3 616.9L967.0 628.2L962.9 640.2L959.1 652.8L955.6 666.0L952.3 679.7L954.4 680.3L958.0 666.6L961.8 653.6L965.8 641.2L970.1 629.4L974.5 618.1L979.2 607.5L984.0 597.5L989.1 588.1L994.4 579.3L999.9 571.1ZM995.2 580.7L990.6 588.4L986.2 596.4L981.9 604.9L977.8 613.8L973.9 623.2L970.2 632.9L966.7 643.2L963.4 653.8L960.2 664.9L957.3 676.4L959.4 676.9L962.6 665.6L966.0 654.6L969.5 644.1L973.1 634.0L976.9 624.3L980.8 615.1L984.9 606.3L989.2 598.0L993.6 590.1L998.1 582.6ZM974.0 562.1L970.7 565.1L967.5 568.5L964.5 572.2L961.8 576.4L959.2 581.0L956.8 586.0L954.6 591.4L952.6 597.1L950.8 603.3L949.2 609.8L950.8 610.2L952.7 603.8L954.7 597.8L956.9 592.2L959.2 587.1L961.6 582.3L964.2 578.0L967.0 574.0L969.8 570.5L972.8 567.3L976.0 564.6ZM978.1 608.2L977.0 619.2L975.8 630.8L974.4 643.0L972.8 655.9L971.1 669.3L969.3 683.4L967.3 698.1L965.2 713.4L963.0 729.3L960.6 745.8L964.3 746.3L966.7 729.8L969.0 713.9L971.1 698.6L973.1 683.9L974.9 669.8L976.6 656.3L978.1 643.5L979.5 631.2L980.8 619.6L981.9 608.5ZM975.1 618.2L973.7 631.9L972.2 645.4L970.6 658.6L969.0 671.6L967.3 684.4L965.6 696.8L963.8 709.1L961.9 721.0L960.0 732.8L957.9 744.2L960.4 744.7L962.5 733.2L964.6 721.5L966.6 709.5L968.5 697.3L970.3 684.8L972.0 672.0L973.7 659.0L975.3 645.8L976.8 632.2L978.2 618.5ZM951.8 676.4L950.8 683.6L950.0 690.7L949.4 697.8L949.1 704.8L948.9 711.6L948.9 718.4L949.1 725.2L949.6 731.8L950.2 738.4L951.0 744.9L953.5 744.5L952.8 738.1L952.3 731.6L951.9 725.1L951.8 718.4L951.9 711.7L952.1 704.9L952.5 698.0L953.1 691.0L953.9 684.0L954.9 676.9ZM980.1 610.1L980.6 617.3L981.5 624.5L982.8 631.7L984.4 639.0L986.3 646.2L988.6 653.4L991.3 660.6L994.3 667.7L997.7 674.9L1001.4 682.1L1003.6 680.9L1000.0 673.8L996.8 666.6L993.9 659.5L991.4 652.4L989.2 645.3L987.3 638.2L985.8 631.2L984.6 624.1L983.8 617.0L983.2 609.9ZM985.1 601.8L985.6 607.3L986.3 612.9L987.3 618.5L988.6 624.2L990.0 629.9L991.8 635.6L993.8 641.4L996.0 647.2L998.5 653.0L1001.1 658.9L1003.4 657.8L1000.8 652.0L998.5 646.2L996.4 640.5L994.5 634.8L992.9 629.1L991.5 623.5L990.3 618.0L989.4 612.4L988.7 607.0L988.2 601.6ZM990.1 590.1L990.6 594.7L991.1 599.1L991.9 603.5L992.7 607.8L993.7 611.9L994.9 616.0L996.1 620.1L997.6 624.0L999.1 627.8L1000.7 631.6L1003.0 630.5L1001.4 626.8L1000.0 623.1L998.8 619.2L997.6 615.3L996.6 611.2L995.7 607.1L994.9 602.9L994.2 598.7L993.7 594.3L993.2 589.9ZM979.8 685.5L982.2 685.8L984.6 686.1L987.0 686.5L989.4 687.1L991.8 687.7L994.3 688.4L996.7 689.2L999.2 690.0L1001.6 691.1L1004.0 692.3L1005.7 688.8L1003.2 687.6L1000.6 686.5L998.1 685.5L995.6 684.5L993.0 683.6L990.5 682.9L987.9 682.3L985.3 681.8L982.8 681.4L980.2 681.1ZM979.3 693.8L981.7 694.6L984.1 695.5L986.4 696.5L988.8 697.6L991.2 698.8L993.7 700.1L996.1 701.5L998.5 703.0L1000.9 704.6L1003.3 706.3L1005.6 703.3L1003.1 701.5L1000.6 699.8L998.2 698.1L995.7 696.6L993.2 695.1L990.7 693.8L988.2 692.6L985.7 691.5L983.2 690.5L980.7 689.6ZM980.5 703.6L982.6 704.8L984.7 706.1L986.9 707.4L989.1 708.8L991.4 710.2L993.8 711.7L996.2 713.2L998.6 714.7L1001.1 716.4L1003.6 718.1L1005.8 714.9L1003.2 713.2L1000.7 711.5L998.3 709.9L996.0 708.2L993.7 706.7L991.4 705.2L989.2 703.7L987.0 702.4L984.9 701.0L982.8 699.8ZM984.2 717.0L986.2 717.9L988.3 718.8L990.2 719.8L992.1 720.7L994.0 721.8L995.8 722.9L997.6 724.0L999.3 725.2L1000.9 726.5L1002.5 727.8L1005.0 725.0L1003.3 723.5L1001.6 722.2L999.8 720.8L998.0 719.5L996.1 718.2L994.2 717.0L992.2 715.9L990.1 714.9L988.0 713.9L985.8 713.0ZM988.1 727.2L989.8 727.4L991.5 727.7L993.1 728.1L994.7 728.5L996.2 728.9L997.7 729.4L999.0 730.0L1000.3 730.7L1001.6 731.4L1002.7 732.2L1005.0 729.1L1003.6 728.2L1002.2 727.4L1000.7 726.6L999.2 725.8L997.6 725.1L996.0 724.5L994.2 723.9L992.4 723.5L990.5 723.1L988.6 722.8ZM978.3 701.0L976.8 704.8L975.4 708.8L974.1 713.0L972.9 717.2L971.8 721.6L970.8 726.1L969.9 730.7L969.1 735.5L968.3 740.4L967.6 745.3L970.8 745.8L971.5 740.8L972.3 736.0L973.2 731.4L974.2 726.9L975.3 722.5L976.4 718.2L977.7 714.0L978.9 710.0L980.3 706.1L981.7 702.4ZM984.9 714.3L983.8 717.1L982.6 720.0L981.6 722.9L980.6 725.9L979.6 728.9L978.7 732.0L977.9 735.1L977.1 738.3L976.3 741.5L975.6 744.8L978.7 745.5L979.4 742.3L980.2 739.1L981.1 736.0L982.0 733.0L983.0 730.0L984.0 727.1L985.1 724.2L986.1 721.3L987.2 718.5L988.4 715.7ZM939.3 653.7L941.9 658.4L944.4 663.1L946.7 667.8L948.9 672.6L951.0 677.3L953.0 682.2L954.8 687.0L956.6 691.9L958.2 696.8L959.6 701.8L960.4 701.6L959.0 696.6L957.6 691.6L956.0 686.6L954.2 681.7L952.3 676.8L950.3 672.0L948.1 667.2L945.7 662.4L943.3 657.7L940.7 652.9ZM995.6 556.3L995.8 559.9L996.0 563.6L996.1 567.6L996.1 571.8L996.1 576.2L996.0 580.8L995.8 585.7L995.6 590.7L995.4 596.0L995.1 601.5L998.2 601.8L999.0 596.3L999.6 591.0L1000.1 585.9L1000.5 581.0L1000.8 576.4L1001.0 571.9L1001.0 567.6L1001.0 563.5L1000.8 559.6L1000.6 555.9ZM991.3 556.1L985.6 562.5L980.3 569.9L975.5 578.1L971.0 587.2L966.9 597.1L963.2 607.9L959.9 619.6L957.0 632.2L954.5 645.6L952.4 659.9L954.3 660.1L956.7 646.0L959.5 632.7L962.6 620.3L966.1 608.8L969.8 598.2L974.0 588.5L978.4 579.7L983.2 571.7L988.3 564.7L993.8 558.5ZM997.7 575.7L992.9 583.8L988.4 592.3L984.1 601.4L980.1 611.0L976.2 621.1L972.7 631.8L969.3 643.0L966.2 654.8L963.4 667.0L960.7 679.8L962.6 680.2L965.5 667.5L968.6 655.4L972.0 643.8L975.5 632.7L979.2 622.2L983.1 612.2L987.2 602.8L991.5 593.8L995.9 585.4L1000.6 577.6ZM918.5 577.2L921.1 583.8L923.6 590.3L925.9 596.7L928.1 603.0L930.1 609.2L932.0 615.2L933.8 621.2L935.5 627.1L937.0 632.8L938.4 638.5L939.9 638.2L938.9 632.4L937.6 626.5L936.2 620.6L934.6 614.5L932.8 608.3L930.9 602.1L928.8 595.7L926.5 589.3L924.1 582.7L921.5 576.1ZM924.6 555.8L928.2 562.9L931.4 570.0L934.3 577.1L936.8 584.2L939.0 591.2L940.7 598.3L942.1 605.4L943.2 612.5L943.9 619.6L944.2 626.7L945.8 626.7L945.7 619.5L945.3 612.3L944.4 605.0L943.1 597.8L941.5 590.6L939.4 583.3L936.9 576.1L934.0 568.9L930.7 561.7L927.1 554.5ZM965.4 618.2L964.1 629.8L962.8 641.2L961.5 652.4L960.2 663.5L958.9 674.4L957.6 685.2L956.3 695.8L955.0 706.2L953.8 716.5L952.5 726.6L954.1 726.8L955.5 716.7L957.0 706.5L958.4 696.0L959.8 685.5L961.1 674.7L962.5 663.8L963.9 652.7L965.2 641.5L966.6 630.1L967.9 618.5ZM1067.9 556.6L1069.6 558.6L1071.2 560.7L1072.9 562.7L1074.5 564.8L1076.2 566.8L1077.9 568.9L1079.6 570.9L1081.3 572.9L1083.0 574.9L1084.7 576.9L1085.3 576.4L1083.7 574.3L1082.1 572.2L1080.6 570.1L1079.0 568.0L1077.3 565.9L1075.7 563.9L1074.1 561.8L1072.4 559.7L1070.8 557.7L1069.1 555.6ZM1054.5 556.2L1058.2 561.7L1061.8 567.1L1065.4 572.4L1069.0 577.7L1072.6 582.9L1076.2 588.0L1079.8 593.0L1083.4 598.0L1086.9 602.9L1090.5 607.7L1091.1 607.3L1087.8 602.3L1084.5 597.2L1081.1 592.1L1077.6 587.0L1074.2 581.8L1070.7 576.5L1067.1 571.2L1063.6 565.9L1060.0 560.5L1056.3 555.0ZM1072.9 590.6L1075.6 592.5L1078.3 594.0L1081.1 595.1L1083.8 595.9L1086.6 596.3L1089.4 596.3L1092.1 596.0L1094.8 595.3L1097.5 594.2L1100.2 592.8L1099.8 592.2L1097.2 593.4L1094.5 594.3L1091.9 594.8L1089.3 595.1L1086.7 594.9L1084.2 594.5L1081.6 593.7L1079.0 592.6L1076.4 591.2L1073.8 589.4ZM1014.0 558.4L1020.5 562.6L1026.6 567.0L1032.3 571.4L1037.6 575.9L1042.5 580.5L1047.0 585.2L1051.2 590.1L1054.9 595.0L1058.3 600.0L1061.3 605.2L1062.0 604.8L1059.5 599.3L1056.6 593.9L1053.2 588.6L1049.2 583.4L1044.8 578.3L1040.0 573.4L1034.7 568.6L1028.9 564.0L1022.6 559.5L1016.0 555.2ZM1028.9 557.4L1031.6 560.1L1034.3 562.7L1036.9 565.4L1039.5 568.2L1042.1 571.0L1044.6 573.8L1047.1 576.6L1049.6 579.5L1052.1 582.4L1054.5 585.4L1055.5 584.6L1053.3 581.5L1051.0 578.4L1048.7 575.3L1046.3 572.4L1043.8 569.4L1041.3 566.6L1038.7 563.7L1036.1 561.0L1033.4 558.3L1030.6 555.6ZM1041.5 554.8L1046.6 562.2L1051.4 569.1L1055.8 575.6L1059.7 581.8L1063.2 587.5L1066.3 592.8L1069.0 597.8L1071.2 602.3L1073.1 606.4L1074.5 610.1L1075.5 609.9L1074.3 606.0L1072.7 601.6L1070.6 596.9L1068.1 591.9L1065.1 586.4L1061.7 580.6L1057.8 574.3L1053.5 567.7L1048.7 560.7L1043.5 553.3ZM1058.9 596.3L1062.2 599.4L1065.3 602.9L1068.3 606.6L1071.1 610.5L1073.8 614.8L1076.4 619.3L1078.8 624.2L1081.0 629.3L1083.2 634.7L1085.1 640.4L1088.2 639.6L1086.7 633.6L1084.9 627.8L1082.9 622.4L1080.7 617.2L1078.3 612.3L1075.6 607.7L1072.7 603.3L1069.6 599.3L1066.3 595.5L1062.7 592.1ZM1084.9 640.6L1086.7 645.8L1088.9 650.4L1091.4 654.5L1094.2 658.0L1097.3 660.8L1100.7 663.1L1104.4 664.7L1108.3 665.7L1112.4 666.1L1116.7 665.8L1116.6 664.2L1112.5 664.0L1108.8 663.3L1105.4 662.2L1102.2 660.5L1099.4 658.3L1096.8 655.6L1094.4 652.4L1092.2 648.7L1090.2 644.3L1088.5 639.4ZM1117.0 666.0L1121.1 664.5L1125.1 662.6L1129.1 660.4L1133.0 657.8L1136.8 654.9L1140.6 651.6L1144.4 648.0L1148.1 644.1L1151.7 639.8L1155.3 635.2L1154.7 634.8L1150.9 639.2L1147.1 643.2L1143.3 647.0L1139.5 650.4L1135.7 653.4L1131.8 656.2L1128.0 658.6L1124.1 660.7L1120.2 662.5L1116.3 664.0ZM1063.3 612.2L1066.7 618.7L1069.9 625.3L1072.8 632.0L1075.6 638.9L1078.3 646.0L1080.7 653.2L1083.0 660.5L1085.1 668.1L1087.0 675.7L1088.8 683.5L1091.2 683.1L1090.1 675.1L1088.7 667.2L1087.1 659.5L1085.2 651.9L1083.0 644.4L1080.6 637.1L1077.9 630.0L1074.9 623.0L1071.8 616.2L1068.3 609.5ZM1088.8 683.5L1089.9 690.4L1091.4 697.1L1093.2 703.5L1095.3 709.5L1097.8 715.3L1100.5 720.9L1103.6 726.1L1107.0 731.0L1110.7 735.6L1114.7 739.9L1115.3 739.4L1111.6 734.9L1108.2 730.2L1105.1 725.2L1102.3 720.0L1099.7 714.5L1097.5 708.8L1095.5 702.8L1093.8 696.5L1092.4 690.0L1091.2 683.2ZM1085.9 639.1L1088.8 642.0L1092.3 644.6L1096.1 646.8L1100.4 648.6L1105.2 650.1L1110.3 651.2L1115.9 651.9L1121.8 652.3L1128.2 652.4L1135.0 652.0L1135.0 651.3L1128.2 651.3L1121.9 651.0L1116.0 650.4L1110.6 649.5L1105.7 648.3L1101.2 646.7L1097.1 644.9L1093.5 642.8L1090.3 640.3L1087.5 637.6ZM1026.2 621.3L1028.2 632.6L1031.1 643.4L1035.2 653.8L1040.4 663.6L1046.6 672.9L1053.8 681.6L1062.1 689.8L1071.4 697.4L1081.6 704.4L1092.9 710.8L1093.8 709.2L1083.4 701.8L1074.0 694.2L1065.6 686.2L1058.2 677.9L1051.7 669.2L1046.3 660.2L1041.8 650.9L1038.2 641.1L1035.5 631.0L1033.8 620.4ZM1093.3 711.1L1100.6 710.7L1107.5 709.6L1114.0 707.7L1120.2 705.0L1125.9 701.6L1131.3 697.5L1136.2 692.6L1140.8 686.9L1144.9 680.6L1148.7 673.5L1148.0 673.2L1144.0 680.0L1139.7 686.1L1135.1 691.5L1130.2 696.1L1124.9 700.1L1119.3 703.2L1113.3 705.7L1107.0 707.5L1100.4 708.6L1093.3 708.9ZM1038.0 627.1L1039.6 635.6L1042.1 643.9L1045.4 652.0L1049.5 659.9L1054.5 667.6L1060.2 675.1L1066.7 682.3L1074.1 689.2L1082.2 695.9L1091.1 702.4L1092.2 700.9L1083.9 693.9L1076.4 686.8L1069.6 679.6L1063.7 672.3L1058.5 664.9L1054.0 657.4L1050.3 649.8L1047.4 642.1L1045.1 634.3L1043.6 626.3ZM1091.7 702.6L1096.6 702.4L1101.3 702.0L1105.7 701.2L1109.8 700.1L1113.6 698.7L1117.2 696.9L1120.5 694.9L1123.5 692.5L1126.2 689.9L1128.6 686.9L1128.0 686.4L1125.5 689.2L1122.8 691.6L1119.8 693.8L1116.5 695.6L1113.0 697.2L1109.3 698.4L1105.3 699.4L1101.0 700.2L1096.5 700.6L1091.7 700.7ZM1047.2 629.6L1048.9 637.6L1051.2 645.2L1054.2 652.5L1057.9 659.5L1062.2 666.1L1067.1 672.5L1072.6 678.4L1078.7 684.0L1085.5 689.2L1092.8 694.1L1093.9 692.5L1087.1 687.1L1081.0 681.5L1075.5 675.7L1070.5 669.7L1066.2 663.4L1062.4 657.0L1059.2 650.3L1056.5 643.4L1054.4 636.2L1052.8 628.7ZM1093.4 694.1L1096.4 693.7L1099.3 693.2L1102.2 692.6L1105.0 691.9L1107.7 691.1L1110.4 690.1L1112.9 689.1L1115.4 687.9L1117.8 686.7L1120.2 685.3L1119.8 684.7L1117.4 685.9L1115.0 687.0L1112.5 688.0L1109.9 688.9L1107.3 689.8L1104.6 690.5L1101.9 691.2L1099.1 691.7L1096.2 692.2L1093.2 692.6ZM1055.6 620.4L1056.5 628.5L1058.1 636.4L1060.3 644.0L1063.1 651.2L1066.6 658.0L1070.7 664.4L1075.3 670.4L1080.6 676.0L1086.4 681.1L1092.7 685.7L1093.9 684.3L1088.8 678.6L1084.2 672.8L1080.2 666.9L1076.6 660.8L1073.6 654.5L1071.0 648.0L1068.8 641.3L1067.1 634.4L1065.9 627.2L1065.1 619.6ZM1093.4 685.9L1098.1 685.5L1102.8 685.0L1107.6 684.3L1112.4 683.4L1117.2 682.5L1122.1 681.3L1127.0 680.1L1131.9 678.6L1136.8 677.1L1141.8 675.4L1141.5 674.6L1136.5 676.1L1131.6 677.5L1126.6 678.7L1121.8 679.9L1116.9 680.9L1112.1 681.8L1107.3 682.5L1102.6 683.2L1097.9 683.7L1093.3 684.1ZM1061.7 630.4L1063.0 637.0L1064.7 643.2L1066.7 649.0L1069.0 654.4L1071.6 659.4L1074.6 663.9L1077.9 668.0L1081.5 671.6L1085.3 674.8L1089.5 677.5L1090.5 675.9L1087.0 672.8L1083.7 669.4L1080.7 665.7L1077.9 661.7L1075.4 657.3L1073.2 652.5L1071.2 647.4L1069.4 641.8L1067.9 635.9L1066.6 629.6ZM1118.4 664.8L1117.7 667.0L1116.7 669.1L1115.2 671.2L1113.3 673.3L1111.0 675.3L1108.3 677.2L1105.2 679.1L1101.6 681.0L1097.6 682.8L1093.2 684.6L1093.5 685.4L1098.0 683.8L1102.1 682.1L1105.8 680.3L1109.0 678.4L1111.9 676.4L1114.3 674.3L1116.4 672.2L1118.0 669.9L1119.2 667.6L1119.9 665.2ZM996.4 591.2L999.9 598.1L1003.1 605.7L1006.3 614.1L1009.3 623.2L1012.1 633.1L1014.9 643.7L1017.4 655.0L1019.9 667.0L1022.2 679.9L1024.4 693.4L1025.6 693.3L1024.1 679.6L1022.4 666.6L1020.4 654.4L1018.2 642.9L1015.8 632.1L1013.2 622.1L1010.3 612.7L1007.2 604.1L1003.8 596.3L1000.3 589.1ZM1001.1 574.5L1003.1 578.5L1005.3 582.7L1007.6 586.9L1010.0 591.3L1012.5 595.7L1015.1 600.3L1017.8 604.9L1020.7 609.6L1023.6 614.4L1026.7 619.3L1030.0 617.4L1027.1 612.4L1024.4 607.5L1021.7 602.7L1019.1 598.0L1016.7 593.4L1014.3 589.0L1012.0 584.6L1009.7 580.4L1007.6 576.2L1005.6 572.2ZM995.8 561.5L997.0 564.0L998.2 566.4L999.5 568.9L1000.7 571.3L1001.9 573.7L1003.2 576.2L1004.5 578.6L1005.7 581.0L1007.0 583.4L1008.3 585.8L1011.7 584.2L1010.5 581.7L1009.4 579.2L1008.2 576.7L1007.0 574.3L1005.8 571.8L1004.6 569.3L1003.4 566.9L1002.2 564.4L1001.0 562.0L999.7 559.5ZM1014.9 555.6L1015.2 561.1L1015.8 566.7L1016.7 572.3L1018.0 578.1L1019.5 583.9L1021.5 589.7L1023.7 595.6L1026.3 601.6L1029.2 607.7L1032.5 613.8L1034.2 612.9L1031.2 606.7L1028.5 600.7L1026.2 594.7L1024.1 588.8L1022.3 583.0L1020.9 577.4L1019.7 571.8L1018.9 566.3L1018.3 560.9L1018.0 555.5ZM1024.3 568.7L1025.3 570.7L1026.3 572.7L1027.3 574.7L1028.4 576.7L1029.4 578.6L1030.4 580.6L1031.5 582.6L1032.5 584.6L1033.6 586.5L1034.7 588.5L1035.3 588.2L1034.4 586.1L1033.5 584.1L1032.5 582.1L1031.6 580.0L1030.6 578.0L1029.6 576.0L1028.7 574.0L1027.7 572.0L1026.7 570.0L1025.7 568.0ZM1006.9 555.4L1007.1 557.2L1007.3 559.0L1007.6 560.8L1007.8 562.7L1008.0 564.5L1008.3 566.3L1008.6 568.1L1008.9 570.0L1009.2 571.8L1009.5 573.6L1013.9 573.1L1013.7 571.2L1013.6 569.4L1013.4 567.5L1013.2 565.7L1013.0 563.9L1012.8 562.0L1012.6 560.2L1012.3 558.4L1012.1 556.6L1011.9 554.7ZM1027.4 640.2L1027.9 644.2L1028.1 648.4L1027.9 652.8L1027.5 657.5L1026.7 662.3L1025.6 667.4L1024.2 672.7L1022.4 678.2L1020.4 683.9L1018.0 689.8L1018.7 690.2L1021.3 684.3L1023.6 678.6L1025.5 673.1L1027.1 667.8L1028.3 662.7L1029.2 657.7L1029.7 653.0L1029.9 648.4L1029.8 644.0L1029.3 639.8ZM997.3 630.8L999.5 636.2L1001.6 641.7L1003.7 647.2L1005.7 652.7L1007.6 658.3L1009.4 663.9L1011.2 669.6L1013.0 675.3L1014.6 681.0L1016.2 686.8L1017.1 686.6L1015.7 680.7L1014.2 674.9L1012.7 669.2L1011.0 663.4L1009.2 657.8L1007.3 652.1L1005.4 646.6L1003.3 641.0L1001.2 635.5L999.0 630.1ZM1017.0 690.8L1020.3 695.7L1024.1 700.1L1028.4 704.1L1033.2 707.6L1038.4 710.6L1044.1 713.1L1050.3 715.1L1056.9 716.7L1064.0 717.7L1071.6 718.4L1071.7 713.3L1064.4 713.1L1057.6 712.4L1051.3 711.2L1045.4 709.5L1039.9 707.4L1035.0 704.7L1030.5 701.6L1026.4 697.9L1022.8 693.8L1019.7 689.2ZM996.1 663.5L999.8 671.3L1003.8 679.3L1007.9 687.3L1012.3 695.4L1017.0 703.5L1021.8 711.8L1026.9 720.1L1032.2 728.4L1037.7 736.9L1043.3 745.4L1046.0 743.7L1040.5 735.1L1035.2 726.5L1030.1 718.1L1025.2 709.7L1020.5 701.5L1016.1 693.3L1011.8 685.3L1007.7 677.3L1003.8 669.4L1000.0 661.6ZM994.9 682.8L999.5 688.4L1004.0 694.3L1008.2 700.2L1012.3 706.3L1016.3 712.5L1020.1 718.8L1023.7 725.3L1027.2 731.8L1030.5 738.5L1033.6 745.4L1037.1 744.0L1034.1 736.9L1031.0 730.0L1027.6 723.2L1024.1 716.5L1020.4 710.0L1016.4 703.6L1012.3 697.4L1008.0 691.3L1003.5 685.3L998.8 679.5ZM995.0 699.2L998.3 703.6L1001.5 708.1L1004.7 712.6L1007.8 717.2L1010.9 721.8L1013.9 726.4L1016.9 731.1L1019.9 735.8L1022.8 740.6L1025.6 745.5L1029.5 743.3L1026.6 738.4L1023.8 733.5L1020.9 728.6L1018.0 723.8L1015.0 719.1L1011.9 714.4L1008.8 709.8L1005.6 705.2L1002.4 700.7L999.1 696.2ZM995.1 717.6L997.4 720.3L999.7 723.1L1002.0 725.9L1004.4 728.6L1006.7 731.4L1009.0 734.1L1011.4 736.8L1013.8 739.6L1016.1 742.3L1018.4 745.1L1021.3 742.6L1019.0 739.9L1016.8 737.1L1014.5 734.2L1012.2 731.4L1010.0 728.6L1007.7 725.8L1005.4 723.1L1003.1 720.3L1000.8 717.5L998.5 714.8ZM1022.6 717.5L1027.4 721.2L1032.2 724.2L1036.9 726.4L1041.8 727.9L1046.6 728.6L1051.4 728.6L1056.2 727.9L1060.9 726.3L1065.6 724.1L1070.2 721.1L1069.8 720.5L1065.1 723.2L1060.4 725.1L1055.8 726.4L1051.3 726.9L1046.7 726.8L1042.2 726.0L1037.7 724.5L1033.2 722.3L1028.6 719.4L1024.0 715.8ZM1095.8 709.8L1094.9 713.5L1093.7 717.1L1092.2 720.7L1090.5 724.1L1088.4 727.5L1086.1 730.9L1083.4 734.1L1080.5 737.3L1077.2 740.5L1073.6 743.4L1074.1 744.0L1077.7 741.0L1081.2 738.0L1084.3 734.9L1087.2 731.7L1089.7 728.4L1091.9 724.9L1093.8 721.4L1095.4 717.8L1096.6 714.0L1097.6 710.2ZM850.0 736.6L847.7 738.1L845.4 739.5L843.0 740.8L840.4 742.0L837.8 743.0L835.1 744.0L832.3 745.0L829.4 745.8L826.4 746.5L823.3 747.1L823.4 747.9L826.6 747.6L829.7 747.1L832.7 746.5L835.7 745.8L838.5 744.9L841.3 743.9L843.9 742.7L846.5 741.4L848.9 739.9L851.2 738.3ZM954.4 733.6L954.0 746.0L954.0 757.8L954.3 769.1L954.9 779.9L955.9 790.2L957.2 800.0L958.9 809.2L960.9 817.9L963.2 826.0L965.9 833.6L967.4 833.1L965.5 825.4L963.8 817.2L962.4 808.6L961.2 799.4L960.2 789.8L959.6 779.6L959.1 769.0L959.0 757.8L959.0 746.1L959.4 733.8ZM965.8 833.7L968.5 840.0L971.6 845.7L974.8 850.6L978.4 854.8L982.2 858.3L986.3 861.0L990.6 863.0L995.2 864.2L999.9 864.6L1004.9 864.5L1004.8 863.5L1000.0 863.7L995.4 863.0L991.1 861.7L987.0 859.7L983.2 857.0L979.6 853.6L976.3 849.5L973.1 844.8L970.2 839.2L967.5 833.0ZM960.9 734.0L960.9 746.3L961.3 758.2L962.1 769.6L963.3 780.6L964.9 791.2L967.0 801.3L969.4 810.9L972.3 820.1L975.6 828.8L979.3 837.0L980.7 836.4L977.8 828.0L975.2 819.2L972.9 810.1L970.9 800.5L969.2 790.5L967.9 780.1L966.9 769.2L966.2 757.9L965.9 746.2L965.9 734.0ZM979.2 837.1L980.9 840.2L982.8 843.1L984.9 845.7L987.2 848.1L989.7 850.2L992.4 852.1L995.3 853.7L998.4 855.1L1001.6 856.2L1005.0 857.2L1005.3 855.9L1002.0 855.0L998.9 853.8L996.0 852.4L993.3 850.7L990.8 848.9L988.4 846.8L986.3 844.5L984.3 842.0L982.5 839.2L980.8 836.2ZM967.9 735.4L967.9 744.8L968.7 754.3L970.2 763.9L972.5 773.5L975.6 783.2L979.5 792.9L984.1 802.7L989.4 812.5L995.5 822.3L1002.3 832.3L1004.4 830.9L997.9 820.9L992.2 810.9L987.2 801.1L982.9 791.4L979.4 781.8L976.6 772.4L974.4 763.0L973.0 753.8L972.3 744.6L972.3 735.6ZM977.9 735.9L975.9 741.4L974.6 747.4L973.9 753.8L973.8 760.7L974.2 768.1L975.3 776.0L977.0 784.3L979.2 793.1L982.1 802.4L985.5 812.1L987.9 811.2L984.7 801.5L982.1 792.3L980.1 783.6L978.7 775.4L977.8 767.8L977.4 760.7L977.6 754.1L978.3 748.0L979.6 742.4L981.3 737.4ZM947.7 734.8L947.5 737.3L947.4 739.9L947.5 742.5L947.7 745.0L948.1 747.5L948.6 749.9L949.2 752.3L950.1 754.7L951.0 757.0L952.2 759.3L952.8 759.0L952.0 756.7L951.3 754.3L950.7 752.0L950.2 749.6L949.8 747.2L949.5 744.8L949.3 742.4L949.3 739.9L949.3 737.4L949.5 734.9ZM960.9 770.3L963.3 777.4L965.2 784.0L966.5 790.3L967.3 796.2L967.6 801.7L967.4 806.7L966.7 811.4L965.4 815.7L963.7 819.6L961.4 823.1L962.0 823.6L964.5 820.0L966.4 816.1L967.8 811.7L968.7 806.9L969.0 801.7L968.8 796.1L968.0 790.1L966.7 783.7L964.8 776.9L962.4 769.7ZM961.3 822.9L959.6 824.1L957.9 825.3L956.1 826.4L954.3 827.3L952.5 828.2L950.6 829.0L948.6 829.7L946.6 830.3L944.6 830.9L942.4 831.3L942.6 832.0L944.7 831.7L946.9 831.3L948.9 830.7L951.0 830.0L952.9 829.3L954.9 828.4L956.7 827.4L958.6 826.3L960.3 825.1L962.1 823.8ZM980.4 776.0L980.8 781.2L981.5 786.5L982.7 791.8L984.3 797.1L986.2 802.5L988.5 807.8L991.2 813.2L994.3 818.6L997.8 824.0L1001.3 829.6L1005.0 827.1L1001.6 821.7L998.9 816.1L996.5 810.7L994.3 805.4L992.5 800.2L991.0 795.1L989.8 790.1L988.9 785.2L988.3 780.4L987.9 775.7ZM986.3 788.5L987.6 790.9L988.8 793.4L990.0 795.8L991.3 798.3L992.5 800.7L993.8 803.1L995.1 805.5L996.4 807.9L997.6 810.4L998.8 812.8L1005.6 809.4L1004.4 807.0L1003.2 804.5L1002.0 802.1L1000.9 799.6L999.7 797.1L998.5 794.6L997.3 792.2L996.1 789.7L994.9 787.3L993.7 784.8ZM990.0 783.9L991.1 785.8L992.1 787.7L993.1 789.6L994.1 791.6L995.0 793.6L996.0 795.6L996.9 797.7L997.8 799.7L998.7 801.9L999.5 804.0L1004.2 802.3L1003.4 800.1L1002.5 797.9L1001.7 795.7L1000.9 793.5L1000.0 791.4L999.1 789.3L998.1 787.2L997.1 785.1L996.1 783.1L995.0 781.1ZM972.7 780.4L973.5 781.7L974.4 783.1L975.3 784.4L976.2 785.7L977.1 787.1L978.1 788.4L979.1 789.7L980.1 791.0L981.1 792.3L982.2 793.6L982.8 793.1L981.9 791.7L981.0 790.4L980.1 789.0L979.2 787.6L978.3 786.3L977.4 784.9L976.5 783.6L975.7 782.3L974.8 780.9L974.0 779.6ZM1032.5 737.2L1037.6 741.0L1042.8 744.0L1047.9 746.2L1053.1 747.4L1058.3 747.9L1063.5 747.4L1068.7 746.0L1073.8 743.8L1078.9 740.8L1083.9 737.0L1082.7 735.5L1077.8 739.2L1072.9 742.0L1068.0 744.0L1063.1 745.1L1058.3 745.5L1053.5 745.1L1048.7 743.8L1043.9 741.8L1039.0 739.0L1034.1 735.3ZM1021.5 737.4L1024.0 742.0L1027.1 746.4L1030.9 750.6L1035.3 754.5L1040.4 758.3L1046.0 761.8L1052.3 765.1L1059.2 768.2L1066.7 771.0L1074.9 773.7L1075.1 773.0L1067.3 769.7L1060.1 766.3L1053.5 762.9L1047.5 759.3L1042.2 755.6L1037.6 751.9L1033.5 748.0L1030.0 744.1L1027.2 740.0L1025.0 735.8ZM1014.3 751.6L1019.6 758.7L1025.2 764.9L1031.1 770.3L1037.4 774.8L1043.9 778.4L1050.7 781.0L1057.8 782.8L1065.1 783.6L1072.5 783.5L1080.1 782.5L1079.9 780.9L1072.4 781.0L1065.3 780.4L1058.6 779.1L1052.2 777.0L1046.1 774.1L1040.2 770.5L1034.6 766.2L1029.2 761.1L1024.0 755.1L1019.0 748.4ZM1080.3 782.6L1082.6 781.8L1084.9 781.0L1087.1 780.1L1089.3 779.1L1091.4 778.0L1093.5 776.8L1095.5 775.5L1097.4 774.2L1099.3 772.7L1101.1 771.1L1100.6 770.5L1098.7 771.9L1096.7 773.2L1094.7 774.4L1092.7 775.5L1090.7 776.6L1088.6 777.6L1086.4 778.5L1084.2 779.3L1082.0 780.1L1079.7 780.8ZM1014.4 762.6L1019.8 768.9L1025.5 774.3L1031.7 778.9L1038.2 782.6L1045.0 785.3L1052.2 787.2L1059.6 788.1L1067.3 788.2L1075.3 787.3L1083.5 785.6L1083.2 784.4L1075.1 785.2L1067.3 785.2L1060.0 784.5L1053.1 783.1L1046.6 780.9L1040.5 778.0L1034.7 774.4L1029.1 770.1L1023.9 765.0L1018.9 759.1ZM1083.5 785.9L1086.2 785.4L1088.8 784.8L1091.3 784.1L1093.9 783.3L1096.3 782.4L1098.7 781.5L1101.0 780.5L1103.3 779.4L1105.5 778.2L1107.7 777.0L1107.3 776.3L1105.1 777.4L1102.8 778.3L1100.5 779.2L1098.2 780.1L1095.8 780.9L1093.3 781.6L1090.9 782.3L1088.3 783.0L1085.8 783.6L1083.2 784.1ZM1013.9 769.1L1020.2 776.0L1026.4 782.0L1032.6 787.2L1038.8 791.5L1045.0 795.0L1051.2 797.6L1057.3 799.3L1063.4 800.1L1069.4 800.0L1075.3 799.1L1074.7 795.9L1069.2 796.5L1063.7 796.2L1058.2 795.2L1052.7 793.4L1047.1 790.9L1041.4 787.5L1035.6 783.3L1029.7 778.3L1023.8 772.5L1017.7 765.9ZM1074.0 800.4L1080.0 798.2L1085.8 795.8L1091.4 793.0L1096.7 789.9L1101.8 786.6L1106.7 782.9L1111.3 779.0L1115.7 774.8L1119.8 770.3L1123.6 765.6L1123.1 765.1L1118.7 769.3L1114.2 773.2L1109.6 776.9L1104.8 780.4L1099.8 783.6L1094.7 786.6L1089.5 789.3L1084.1 791.9L1078.4 794.2L1072.6 796.2ZM1061.8 796.4L1065.5 797.9L1069.3 799.1L1073.2 799.8L1077.1 800.1L1081.1 800.1L1085.2 799.6L1089.3 798.7L1093.4 797.4L1097.6 795.7L1101.8 793.7L1101.5 793.0L1097.2 794.6L1092.9 795.8L1088.8 796.7L1084.8 797.2L1081.0 797.4L1077.2 797.3L1073.6 796.9L1070.0 796.1L1066.6 795.0L1063.2 793.6ZM1062.5 798.8L1066.5 801.2L1070.4 803.1L1074.2 804.5L1077.9 805.5L1081.5 806.1L1084.9 806.2L1088.2 805.8L1091.3 805.0L1094.2 803.7L1096.9 802.0L1096.5 801.3L1093.7 802.6L1090.8 803.4L1087.9 803.8L1084.9 803.8L1081.8 803.5L1078.6 802.8L1075.2 801.7L1071.7 800.3L1068.0 798.4L1064.2 796.2ZM1048.1 789.4L1051.6 795.2L1055.2 800.3L1059.1 804.7L1063.1 808.3L1067.3 811.3L1071.6 813.5L1076.2 814.9L1080.8 815.6L1085.5 815.4L1090.3 814.6L1089.7 812.1L1085.3 812.5L1081.1 812.3L1077.0 811.5L1073.2 810.0L1069.4 807.9L1065.7 805.1L1062.1 801.7L1058.6 797.6L1055.2 792.8L1051.9 787.3ZM1090.4 814.5L1094.5 812.9L1098.4 810.8L1102.1 808.2L1105.7 805.1L1109.1 801.5L1112.4 797.5L1115.4 793.0L1118.4 788.1L1121.1 782.7L1123.7 776.8L1123.0 776.5L1120.1 782.2L1117.1 787.4L1114.0 792.1L1110.8 796.3L1107.5 800.1L1104.2 803.4L1100.7 806.3L1097.1 808.7L1093.4 810.6L1089.6 812.1ZM1056.2 813.0L1059.3 816.7L1063.1 819.4L1067.7 820.9L1072.7 821.4L1078.2 820.8L1084.2 819.2L1090.7 816.7L1097.8 813.3L1105.4 808.9L1113.5 803.7L1113.1 803.0L1104.6 807.5L1096.7 811.1L1089.6 813.8L1083.2 815.7L1077.6 816.7L1072.8 816.9L1068.7 816.3L1065.4 815.0L1062.7 813.1L1060.5 810.3ZM1013.4 777.8L1016.4 785.7L1019.9 793.2L1024.0 800.0L1028.6 806.3L1033.7 812.0L1039.3 817.1L1045.3 821.6L1051.9 825.4L1058.8 828.6L1066.2 831.2L1067.1 828.8L1060.3 825.5L1054.0 821.8L1048.2 817.6L1042.9 813.0L1038.0 808.0L1033.6 802.5L1029.6 796.5L1026.0 790.0L1022.8 783.1L1020.0 775.6ZM1066.2 831.2L1071.6 833.1L1076.9 834.7L1082.2 836.1L1087.5 837.2L1092.7 838.1L1098.0 838.8L1103.1 839.1L1108.2 839.2L1113.3 839.1L1118.4 838.7L1118.3 838.0L1113.3 838.0L1108.3 837.8L1103.2 837.4L1098.2 836.8L1093.1 836.0L1088.0 835.0L1082.8 833.8L1077.6 832.4L1072.4 830.7L1067.1 828.8ZM1062.6 821.0L1066.1 823.5L1069.9 825.6L1073.9 827.2L1078.1 828.4L1082.6 829.2L1087.2 829.5L1092.0 829.3L1097.0 828.7L1102.2 827.7L1107.6 826.2L1107.4 825.5L1102.0 826.6L1096.8 827.3L1091.9 827.6L1087.3 827.5L1082.8 827.1L1078.7 826.2L1074.7 825.0L1071.0 823.4L1067.4 821.4L1064.1 819.0ZM999.0 786.9L999.7 794.2L1000.7 801.3L1002.0 808.1L1003.6 814.7L1005.6 821.0L1007.8 826.9L1010.4 832.6L1013.4 838.0L1016.6 843.0L1020.1 847.8L1023.2 845.6L1020.4 840.7L1017.8 835.6L1015.4 830.3L1013.4 824.8L1011.5 819.0L1009.9 813.0L1008.6 806.8L1007.4 800.3L1006.6 793.5L1006.0 786.4ZM1006.9 785.6L1009.4 795.2L1012.6 804.1L1016.7 812.2L1021.6 819.5L1027.2 826.0L1033.7 831.7L1040.8 836.5L1048.7 840.5L1057.2 843.6L1066.4 845.9L1066.9 844.1L1058.2 841.0L1050.3 837.2L1043.1 832.9L1036.7 827.9L1031.1 822.3L1026.2 816.1L1021.9 809.2L1018.3 801.7L1015.4 793.4L1013.1 784.4ZM1066.5 845.9L1071.5 846.5L1076.5 847.0L1081.4 847.4L1086.4 847.7L1091.2 847.9L1096.1 848.0L1100.9 847.9L1105.6 847.7L1110.3 847.4L1115.0 847.0L1115.0 846.3L1110.3 846.5L1105.6 846.5L1100.8 846.5L1096.1 846.4L1091.3 846.3L1086.4 846.0L1081.6 845.7L1076.7 845.2L1071.8 844.7L1066.8 844.1ZM1019.2 801.3L1023.8 809.2L1029.0 816.5L1034.6 823.1L1040.7 829.1L1047.3 834.4L1054.3 839.0L1061.7 843.0L1069.6 846.3L1077.9 848.9L1086.5 850.8L1086.8 849.2L1078.6 846.5L1070.8 843.3L1063.5 839.6L1056.6 835.4L1050.2 830.6L1044.2 825.3L1038.6 819.5L1033.4 813.1L1028.6 806.2L1024.2 798.7ZM1086.4 850.7L1089.4 851.8L1092.3 852.8L1095.2 854.0L1098.1 855.2L1101.0 856.5L1103.8 857.8L1106.6 859.2L1109.3 860.6L1112.1 862.1L1114.8 863.7L1115.2 863.0L1112.6 861.3L1109.9 859.7L1107.1 858.1L1104.4 856.6L1101.5 855.2L1098.7 853.9L1095.8 852.6L1092.9 851.4L1089.9 850.3L1086.9 849.3ZM1016.1 811.2L1021.3 819.9L1027.4 828.3L1034.3 836.4L1042.1 844.2L1050.8 851.6L1060.3 858.7L1070.6 865.4L1081.7 871.8L1093.7 877.9L1106.5 883.7L1106.8 883.0L1094.5 876.5L1082.9 869.8L1072.3 862.8L1062.4 855.7L1053.4 848.4L1045.2 840.9L1037.8 833.2L1031.3 825.3L1025.5 817.2L1020.5 808.8ZM1013.0 820.9L1017.2 829.0L1022.4 836.7L1028.5 844.2L1035.5 851.3L1043.4 858.1L1052.3 864.5L1062.0 870.6L1072.6 876.4L1084.1 881.9L1096.5 887.0L1096.8 886.3L1084.8 880.5L1073.6 874.5L1063.4 868.3L1054.1 861.9L1045.7 855.3L1038.2 848.5L1031.6 841.4L1025.9 834.2L1021.0 826.8L1017.0 819.1ZM1014.9 841.8L1021.2 847.9L1027.9 854.0L1035.1 860.1L1042.7 866.3L1050.8 872.5L1059.4 878.7L1068.4 884.9L1077.8 891.1L1087.8 897.4L1098.1 903.6L1098.5 903.0L1088.7 896.0L1079.2 889.1L1070.2 882.4L1061.6 875.7L1053.3 869.2L1045.5 862.8L1038.1 856.5L1031.2 850.3L1024.6 844.2L1018.4 838.2ZM1018.1 847.8L1021.9 853.4L1026.3 859.1L1031.4 865.1L1037.3 871.2L1043.7 877.5L1050.9 884.1L1058.8 890.7L1067.3 897.6L1076.5 904.7L1086.4 912.0L1086.9 911.4L1077.5 903.5L1068.7 896.0L1060.6 888.7L1053.1 881.7L1046.3 875.0L1040.1 868.5L1034.6 862.3L1029.7 856.5L1025.4 850.8L1021.9 845.5ZM1020.7 857.9L1025.6 862.0L1030.4 866.4L1035.1 871.0L1039.7 876.0L1044.2 881.2L1048.6 886.8L1053.0 892.6L1057.2 898.7L1061.4 905.1L1065.5 911.8L1066.2 911.5L1062.5 904.5L1058.6 897.8L1054.7 891.4L1050.5 885.4L1046.2 879.6L1041.8 874.1L1037.2 869.0L1032.5 864.2L1027.6 859.6L1022.6 855.4ZM999.8 815.3L1001.1 821.2L1002.9 827.3L1005.2 833.6L1008.0 840.1L1011.3 846.7L1015.2 853.6L1019.5 860.6L1024.3 867.8L1029.7 875.2L1035.5 882.7L1036.1 882.3L1030.8 874.4L1025.9 866.7L1021.5 859.4L1017.6 852.2L1014.1 845.3L1011.1 838.7L1008.5 832.3L1006.4 826.2L1004.7 820.3L1003.5 814.7ZM997.4 828.4L998.8 833.7L1000.4 838.9L1002.3 843.9L1004.3 848.7L1006.6 853.3L1009.1 857.7L1011.9 862.0L1014.8 866.0L1018.0 869.9L1021.4 873.6L1021.9 873.1L1018.9 869.2L1016.0 865.2L1013.3 861.0L1010.9 856.7L1008.6 852.3L1006.5 847.7L1004.5 843.0L1002.8 838.1L1001.2 833.0L999.9 827.8ZM995.3 856.5L997.3 856.2L999.3 855.8L1001.3 855.3L1003.3 854.8L1005.3 854.2L1007.3 853.6L1009.3 852.9L1011.2 852.1L1013.2 851.3L1015.2 850.3L1014.8 849.7L1012.9 850.4L1010.9 851.2L1008.9 851.9L1006.9 852.5L1005.0 853.1L1003.0 853.6L1001.0 854.1L999.1 854.6L997.1 855.0L995.2 855.3ZM995.7 865.6L997.9 864.8L1000.0 864.0L1002.1 863.1L1004.2 862.2L1006.3 861.2L1008.5 860.2L1010.6 859.0L1012.7 857.9L1014.8 856.6L1016.9 855.3L1016.5 854.7L1014.3 855.9L1012.2 857.0L1010.1 858.1L1008.0 859.1L1005.8 860.1L1003.7 861.1L1001.6 862.0L999.5 862.9L997.4 863.7L995.3 864.4ZM1046.0 863.7L1047.6 867.3L1049.2 871.0L1050.7 874.6L1052.1 878.3L1053.5 881.9L1054.9 885.5L1056.1 889.2L1057.4 892.8L1058.5 896.5L1059.6 900.1L1060.4 899.9L1059.4 896.2L1058.4 892.5L1057.3 888.8L1056.1 885.1L1054.8 881.4L1053.5 877.7L1052.1 874.1L1050.6 870.4L1049.0 866.7L1047.4 863.0ZM1076.2 870.6L1078.2 872.3L1080.1 873.9L1082.1 875.6L1084.1 877.2L1086.0 878.9L1087.9 880.5L1089.9 882.1L1091.8 883.7L1093.7 885.3L1095.6 886.9L1096.1 886.4L1094.3 884.7L1092.5 882.9L1090.7 881.2L1088.8 879.5L1086.9 877.8L1085.0 876.1L1083.1 874.4L1081.1 872.8L1079.2 871.1L1077.2 869.4ZM1079.3 873.7L1080.3 875.7L1081.2 877.6L1082.2 879.6L1083.1 881.5L1084.0 883.4L1084.8 885.3L1085.6 887.1L1086.4 889.0L1087.2 890.8L1088.0 892.6L1088.7 892.4L1088.1 890.5L1087.4 888.6L1086.7 886.7L1086.0 884.8L1085.2 882.9L1084.4 880.9L1083.5 878.9L1082.6 877.0L1081.7 875.0L1080.7 873.0ZM996.6 781.6L996.5 786.2L996.6 790.7L996.6 795.2L996.7 799.8L996.9 804.3L997.1 808.8L997.4 813.4L997.7 817.9L998.1 822.4L998.5 826.9L1004.8 826.4L1004.5 821.9L1004.3 817.5L1004.1 813.0L1003.9 808.5L1003.7 804.0L1003.6 799.6L1003.5 795.1L1003.5 790.6L1003.5 786.2L1003.5 781.7Z" fill="#000"/><rect x="1010.5" y="217.5" width="63" height="171" fill="none" stroke="#6f8fb5" stroke-width="1"/><rect x="1008.0" y="215.0" width="5" height="5" fill="#fff" stroke="#6f8fb5" stroke-width="1"/><rect x="1039.5" y="215.0" width="5" height="5" fill="#fff" stroke="#6f8fb5" stroke-width="1"/><rect x="1071.0" y="215.0" width="5" height="5" fill="#fff" stroke="#6f8fb5" stroke-width="1"/><rect x="1008.0" y="300.5" width="5" height="5" fill="#fff" stroke="#6f8fb5" stroke-width="1"/><rect x="1071.0" y="300.5" width="5" height="5" fill="#fff" stroke="#6f8fb5" stroke-width="1"/><rect x="1008.0" y="386.0" width="5" height="5" fill="#fff" stroke="#6f8fb5" stroke-width="1"/><rect x="1039.5" y="386.0" width="5" height="5" fill="#fff" stroke="#6f8fb5" stroke-width="1"/><rect x="1071.0" y="386.0" width="5" height="5" fill="#fff" stroke="#6f8fb5" stroke-width="1"/><path d="M1010.3 218.7C1025 245 1036 275 1039.2 306.7C1042 335 1050 365 1062.5 380" fill="none" stroke="#2f3a78" stroke-width="1.4"/><path d="M972.5 405C966 430 964 450 966.7 470" fill="none" stroke="#44588c" stroke-width="1.2"/><path d="M971 417L971 437L976 432.5L984 432.5Z" fill="#000" stroke="#fff" stroke-width=".6"/><rect x="981" y="437" width="7" height="7" fill="#000" stroke="#ddd" stroke-width="1"/><text x="974" y="421.5" font-size="9.5" fill="#e23ee2" font-family="Liberation Sans, sans-serif">路径</text><rect x="912.5" y="512.5" width="63" height="53" fill="none" stroke="#c0485a" stroke-width="1" opacity=".8"/><text x="918" y="544" font-size="21" font-weight="bold" fill="#e0687e" opacity=".85" font-family="Liberation Serif, serif" textLength="52" lengthAdjust="spacingAndGlyphs">POP</text><text x="971" y="544" font-size="21" font-weight="bold" fill="#fff" stroke="#999" stroke-width=".8" font-family="Liberation Sans, sans-serif" textLength="36" lengthAdjust="spacingAndGlyphs">TIIC</text></g></svg>
<div id="rulerT">
<svg width="1801" height="18" style="left:0;top:0"><path d="M27.5 1V18" stroke="#646464" stroke-width="1"/><path d="M35.5 14V18" stroke="#646464" stroke-width="1"/><path d="M43.5 14V18" stroke="#646464" stroke-width="1"/><path d="M52.5 14V18" stroke="#646464" stroke-width="1"/><path d="M60.5 14V18" stroke="#646464" stroke-width="1"/><path d="M68.5 1V18" stroke="#646464" stroke-width="1"/><path d="M76.5 14V18" stroke="#646464" stroke-width="1"/><path d="M84.5 14V18" stroke="#646464" stroke-width="1"/><path d="M93.5 14V18" stroke="#646464" stroke-width="1"/><path d="M101.5 14V18" stroke="#646464" stroke-width="1"/><path d="M109.5 1V18" stroke="#646464" stroke-width="1"/><path d="M117.5 14V18" stroke="#646464" stroke-width="1"/><path d="M126.5 14V18" stroke="#646464" stroke-width="1"/><path d="M134.5 14V18" stroke="#646464" stroke-width="1"/><path d="M142.5 14V18" stroke="#646464" stroke-width="1"/><path d="M150.5 1V18" stroke="#646464" stroke-width="1"/><path d="M158.5 14V18" stroke="#646464" stroke-width="1"/><path d="M167.5 14V18" stroke="#646464" stroke-width="1"/><path d="M175.5 14V18" stroke="#646464" stroke-width="1"/><path d="M183.5 14V18" stroke="#646464" stroke-width="1"/><path d="M191.5 1V18" stroke="#646464" stroke-width="1"/><path d="M200.5 14V18" stroke="#646464" stroke-width="1"/><path d="M208.5 14V18" stroke="#646464" stroke-width="1"/><path d="M216.5 14V18" stroke="#646464" stroke-width="1"/><path d="M224.5 14V18" stroke="#646464" stroke-width="1"/><path d="M233.5 1V18" stroke="#646464" stroke-width="1"/><path d="M241.5 14V18" stroke="#646464" stroke-width="1"/><path d="M249.5 14V18" stroke="#646464" stroke-width="1"/><path d="M257.5 14V18" stroke="#646464" stroke-width="1"/><path d="M265.5 14V18" stroke="#646464" stroke-width="1"/><path d="M274.5 1V18" stroke="#646464" stroke-width="1"/><path d="M282.5 14V18" stroke="#646464" stroke-width="1"/><path d="M290.5 14V18" stroke="#646464" stroke-width="1"/><path d="M298.5 14V18" stroke="#646464" stroke-width="1"/><path d="M307.5 14V18" stroke="#646464" stroke-width="1"/><path d="M315.5 1V18" stroke="#646464" stroke-width="1"/><path d="M323.5 14V18" stroke="#646464" stroke-width="1"/><path d="M331.5 14V18" stroke="#646464" stroke-width="1"/><path d="M339.5 14V18" stroke="#646464" stroke-width="1"/><path d="M348.5 14V18" stroke="#646464" stroke-width="1"/><path d="M356.5 1V18" stroke="#646464" stroke-width="1"/><path d="M364.5 14V18" stroke="#646464" stroke-width="1"/><path d="M372.5 14V18" stroke="#646464" stroke-width="1"/><path d="M381.5 14V18" stroke="#646464" stroke-width="1"/><path d="M389.5 14V18" stroke="#646464" stroke-width="1"/><path d="M397.5 1V18" stroke="#646464" stroke-width="1"/><path d="M405.5 14V18" stroke="#646464" stroke-width="1"/><path d="M413.5 14V18" stroke="#646464" stroke-width="1"/><path d="M422.5 14V18" stroke="#646464" stroke-width="1"/><path d="M430.5 14V18" stroke="#646464" stroke-width="1"/><path d="M438.5 1V18" stroke="#646464" stroke-width="1"/><path d="M446.5 14V18" stroke="#646464" stroke-width="1"/><path d="M455.5 14V18" stroke="#646464" stroke-width="1"/><path d="M463.5 14V18" stroke="#646464" stroke-width="1"/><path d="M471.5 14V18" stroke="#646464" stroke-width="1"/><path d="M479.5 1V18" stroke="#646464" stroke-width="1"/><path d="M488.5 14V18" stroke="#646464" stroke-width="1"/><path d="M496.5 14V18" stroke="#646464" stroke-width="1"/><path d="M504.5 14V18" stroke="#646464" stroke-width="1"/><path d="M512.5 14V18" stroke="#646464" stroke-width="1"/><path d="M520.5 1V18" stroke="#646464" stroke-width="1"/><path d="M529.5 14V18" stroke="#646464" stroke-width="1"/><path d="M537.5 14V18" stroke="#646464" stroke-width="1"/><path d="M545.5 14V18" stroke="#646464" stroke-width="1"/><path d="M553.5 14V18" stroke="#646464" stroke-width="1"/><path d="M562.5 1V18" stroke="#646464" stroke-width="1"/><path d="M570.5 14V18" stroke="#646464" stroke-width="1"/><path d="M578.5 14V18" stroke="#646464" stroke-width="1"/><path d="M586.5 14V18" stroke="#646464" stroke-width="1"/><path d="M594.5 14V18" stroke="#646464" stroke-width="1"/><path d="M603.5 1V18" stroke="#646464" stroke-width="1"/><path d="M611.5 14V18" stroke="#646464" stroke-width="1"/><path d="M619.5 14V18" stroke="#646464" stroke-width="1"/><path d="M627.5 14V18" stroke="#646464" stroke-width="1"/><path d="M636.5 14V18" stroke="#646464" stroke-width="1"/><path d="M644.5 1V18" stroke="#646464" stroke-width="1"/><path d="M652.5 14V18" stroke="#646464" stroke-width="1"/><path d="M660.5 14V18" stroke="#646464" stroke-width="1"/><path d="M668.5 14V18" stroke="#646464" stroke-width="1"/><path d="M677.5 14V18" stroke="#646464" stroke-width="1"/><path d="M685.5 1V18" stroke="#646464" stroke-width="1"/><path d="M693.5 14V18" stroke="#646464" stroke-width="1"/><path d="M701.5 14V18" stroke="#646464" stroke-width="1"/><path d="M710.5 14V18" stroke="#646464" stroke-width="1"/><path d="M718.5 14V18" stroke="#646464" stroke-width="1"/><path d="M726.5 1V18" stroke="#646464" stroke-width="1"/><path d="M734.5 14V18" stroke="#646464" stroke-width="1"/><path d="M743.5 14V18" stroke="#646464" stroke-width="1"/><path d="M751.5 14V18" stroke="#646464" stroke-width="1"/><path d="M759.5 14V18" stroke="#646464" stroke-width="1"/><path d="M767.5 1V18" stroke="#646464" stroke-width="1"/><path d="M775.5 14V18" stroke="#646464" stroke-width="1"/><path d="M784.5 14V18" stroke="#646464" stroke-width="1"/><path d="M792.5 14V18" stroke="#646464" stroke-width="1"/><path d="M800.5 14V18" stroke="#646464" stroke-width="1"/><path d="M808.5 1V18" stroke="#646464" stroke-width="1"/><path d="M817.5 14V18" stroke="#646464" stroke-width="1"/><path d="M825.5 14V18" stroke="#646464" stroke-width="1"/><path d="M833.5 14V18" stroke="#646464" stroke-width="1"/><path d="M841.5 14V18" stroke="#646464" stroke-width="1"/><path d="M849.5 1V18" stroke="#646464" stroke-width="1"/><path d="M858.5 14V18" stroke="#646464" stroke-width="1"/><path d="M866.5 14V18" stroke="#646464" stroke-width="1"/><path d="M874.5 14V18" stroke="#646464" stroke-width="1"/><path d="M882.5 14V18" stroke="#646464" stroke-width="1"/><path d="M891.5 1V18" stroke="#646464" stroke-width="1"/><path d="M899.5 14V18" stroke="#646464" stroke-width="1"/><path d="M907.5 14V18" stroke="#646464" stroke-width="1"/><path d="M915.5 14V18" stroke="#646464" stroke-width="1"/><path d="M923.5 14V18" stroke="#646464" stroke-width="1"/><path d="M932.5 1V18" stroke="#646464" stroke-width="1"/><path d="M940.5 14V18" stroke="#646464" stroke-width="1"/><path d="M948.5 14V18" stroke="#646464" stroke-width="1"/><path d="M956.5 14V18" stroke="#646464" stroke-width="1"/><path d="M965.5 14V18" stroke="#646464" stroke-width="1"/><path d="M973.5 1V18" stroke="#646464" stroke-width="1"/><path d="M981.5 14V18" stroke="#646464" stroke-width="1"/><path d="M989.5 14V18" stroke="#646464" stroke-width="1"/><path d="M998.5 14V18" stroke="#646464" stroke-width="1"/><path d="M1006.5 14V18" stroke="#646464" stroke-width="1"/><path d="M1014.5 1V18" stroke="#646464" stroke-width="1"/><path d="M1022.5 14V18" stroke="#646464" stroke-width="1"/><path d="M1030.5 14V18" stroke="#646464" stroke-width="1"/><path d="M1039.5 14V18" stroke="#646464" stroke-width="1"/><path d="M1047.5 14V18" stroke="#646464" stroke-width="1"/><path d="M1055.5 1V18" stroke="#646464" stroke-width="1"/><path d="M1063.5 14V18" stroke="#646464" stroke-width="1"/><path d="M1072.5 14V18" stroke="#646464" stroke-width="1"/><path d="M1080.5 14V18" stroke="#646464" stroke-width="1"/><path d="M1088.5 14V18" stroke="#646464" stroke-width="1"/><path d="M1096.5 1V18" stroke="#646464" stroke-width="1"/><path d="M1104.5 14V18" stroke="#646464" stroke-width="1"/><path d="M1113.5 14V18" stroke="#646464" stroke-width="1"/><path d="M1121.5 14V18" stroke="#646464" stroke-width="1"/><path d="M1129.5 14V18" stroke="#646464" stroke-width="1"/><path d="M1137.5 1V18" stroke="#646464" stroke-width="1"/><path d="M1146.5 14V18" stroke="#646464" stroke-width="1"/><path d="M1154.5 14V18" stroke="#646464" stroke-width="1"/><path d="M1162.5 14V18" stroke="#646464" stroke-width="1"/><path d="M1170.5 14V18" stroke="#646464" stroke-width="1"/><path d="M1178.5 1V18" stroke="#646464" stroke-width="1"/><path d="M1187.5 14V18" stroke="#646464" stroke-width="1"/><path d="M1195.5 14V18" stroke="#646464" stroke-width="1"/><path d="M1203.5 14V18" stroke="#646464" stroke-width="1"/><path d="M1211.5 14V18" stroke="#646464" stroke-width="1"/><path d="M1220.5 1V18" stroke="#646464" stroke-width="1"/><path d="M1228.5 14V18" stroke="#646464" stroke-width="1"/><path d="M1236.5 14V18" stroke="#646464" stroke-width="1"/><path d="M1244.5 14V18" stroke="#646464" stroke-width="1"/><path d="M1253.5 14V18" stroke="#646464" stroke-width="1"/><path d="M1261.5 1V18" stroke="#646464" stroke-width="1"/><path d="M1269.5 14V18" stroke="#646464" stroke-width="1"/><path d="M1277.5 14V18" stroke="#646464" stroke-width="1"/><path d="M1285.5 14V18" stroke="#646464" stroke-width="1"/><path d="M1294.5 14V18" stroke="#646464" stroke-width="1"/><path d="M1302.5 1V18" stroke="#646464" stroke-width="1"/><path d="M1310.5 14V18" stroke="#646464" stroke-width="1"/><path d="M1318.5 14V18" stroke="#646464" stroke-width="1"/><path d="M1327.5 14V18" stroke="#646464" stroke-width="1"/><path d="M1335.5 14V18" stroke="#646464" stroke-width="1"/><path d="M1343.5 1V18" stroke="#646464" stroke-width="1"/><path d="M1351.5 14V18" stroke="#646464" stroke-width="1"/><path d="M1359.5 14V18" stroke="#646464" stroke-width="1"/><path d="M1368.5 14V18" stroke="#646464" stroke-width="1"/><path d="M1376.5 14V18" stroke="#646464" stroke-width="1"/><path d="M1384.5 1V18" stroke="#646464" stroke-width="1"/><path d="M1392.5 14V18" stroke="#646464" stroke-width="1"/><path d="M1401.5 14V18" stroke="#646464" stroke-width="1"/><path d="M1409.5 14V18" stroke="#646464" stroke-width="1"/><path d="M1417.5 14V18" stroke="#646464" stroke-width="1"/><path d="M1425.5 1V18" stroke="#646464" stroke-width="1"/><path d="M1434.5 14V18" stroke="#646464" stroke-width="1"/><path d="M1442.5 14V18" stroke="#646464" stroke-width="1"/><path d="M1450.5 14V18" stroke="#646464" stroke-width="1"/><path d="M1458.5 14V18" stroke="#646464" stroke-width="1"/><path d="M1466.5 1V18" stroke="#646464" stroke-width="1"/><path d="M1475.5 14V18" stroke="#646464" stroke-width="1"/><path d="M1483.5 14V18" stroke="#646464" stroke-width="1"/><path d="M1491.5 14V18" stroke="#646464" stroke-width="1"/><path d="M1499.5 14V18" stroke="#646464" stroke-width="1"/><path d="M1508.5 1V18" stroke="#646464" stroke-width="1"/><path d="M1516.5 14V18" stroke="#646464" stroke-width="1"/><path d="M1524.5 14V18" stroke="#646464" stroke-width="1"/><path d="M1532.5 14V18" stroke="#646464" stroke-width="1"/><path d="M1540.5 14V18" stroke="#646464" stroke-width="1"/><path d="M1549.5 1V18" stroke="#646464" stroke-width="1"/><path d="M1557.5 14V18" stroke="#646464" stroke-width="1"/><path d="M1565.5 14V18" stroke="#646464" stroke-width="1"/><path d="M1573.5 14V18" stroke="#646464" stroke-width="1"/><path d="M1582.5 14V18" stroke="#646464" stroke-width="1"/><path d="M1590.5 1V18" stroke="#646464" stroke-width="1"/><path d="M1598.5 14V18" stroke="#646464" stroke-width="1"/><path d="M1606.5 14V18" stroke="#646464" stroke-width="1"/><path d="M1614.5 14V18" stroke="#646464" stroke-width="1"/><path d="M1623.5 14V18" stroke="#646464" stroke-width="1"/><path d="M1631.5 1V18" stroke="#646464" stroke-width="1"/><path d="M1639.5 14V18" stroke="#646464" stroke-width="1"/><path d="M1647.5 14V18" stroke="#646464" stroke-width="1"/><path d="M1656.5 14V18" stroke="#646464" stroke-width="1"/><path d="M1664.5 14V18" stroke="#646464" stroke-width="1"/><path d="M1672.5 1V18" stroke="#646464" stroke-width="1"/><path d="M1680.5 14V18" stroke="#646464" stroke-width="1"/><path d="M1689.5 14V18" stroke="#646464" stroke-width="1"/><path d="M1697.5 14V18" stroke="#646464" stroke-width="1"/><path d="M1705.5 14V18" stroke="#646464" stroke-width="1"/><path d="M1713.5 1V18" stroke="#646464" stroke-width="1"/><path d="M1721.5 14V18" stroke="#646464" stroke-width="1"/><path d="M1730.5 14V18" stroke="#646464" stroke-width="1"/><path d="M1738.5 14V18" stroke="#646464" stroke-width="1"/><path d="M1746.5 14V18" stroke="#646464" stroke-width="1"/><path d="M1754.5 1V18" stroke="#646464" stroke-width="1"/><path d="M1763.5 14V18" stroke="#646464" stroke-width="1"/><path d="M1771.5 14V18" stroke="#646464" stroke-width="1"/><path d="M1779.5 14V18" stroke="#646464" stroke-width="1"/><path d="M1787.5 14V18" stroke="#646464" stroke-width="1"/><path d="M1795.5 1V18" stroke="#646464" stroke-width="1"/></svg>
<span class="rl" style="left:153px;top:7px">25</span>
<span class="rl" style="left:194px;top:7px">20</span>
<span class="rl" style="left:236px;top:7px">15</span>
<span class="rl" style="left:277px;top:7px">10</span>
<span class="rl" style="left:318px;top:7px">5</span>
<span class="rl" style="left:359px;top:7px">0</span>
<span class="rl" style="left:400px;top:7px">5</span>
<span class="rl" style="left:441px;top:7px">10</span>
<span class="rl" style="left:482px;top:7px">15</span>
<span class="rl" style="left:523px;top:7px">20</span>
<span class="rl" style="left:565px;top:7px">25</span>
<span class="rl" style="left:606px;top:7px">30</span>
<span class="rl" style="left:647px;top:7px">35</span>
<span class="rl" style="left:688px;top:7px">40</span>
<span class="rl" style="left:729px;top:7px">45</span>
<span class="rl" style="left:770px;top:7px">50</span>
<span class="rl" style="left:811px;top:7px">55</span>
<span class="rl" style="left:852px;top:7px">60</span>
<span class="rl" style="left:894px;top:7px">65</span>
<span class="rl" style="left:935px;top:7px">70</span>
<span class="rl" style="left:976px;top:7px">75</span>
<span class="rl" style="left:1017px;top:7px">80</span>
<span class="rl" style="left:1058px;top:7px">85</span>
<span class="rl" style="left:1099px;top:7px">90</span>
<span class="rl" style="left:1140px;top:7px">95</span>
<span class="rl" style="left:1181px;top:7px">100</span>
<span class="rl" style="left:1223px;top:7px">105</span>
<span class="rl" style="left:1264px;top:7px">110</span>
<span class="rl" style="left:1305px;top:7px">115</span>
<span class="rl" style="left:1346px;top:7px">120</span>
<span class="rl" style="left:1387px;top:7px">125</span>
<span class="rl" style="left:1428px;top:7px">130</span>
<span class="rl" style="left:1469px;top:7px">135</span>
<span class="rl" style="left:1511px;top:7px">140</span>
<span class="rl" style="left:1552px;top:7px">145</span>
<span class="rl" style="left:1593px;top:7px">150</span>
<span class="rl" style="left:1634px;top:7px">155</span>
<span class="rl" style="left:1675px;top:7px">160</span>
<span class="rl" style="left:1716px;top:7px">165</span>
<span class="rl" style="left:1757px;top:7px">170</span>
</div>
<div id="rulerL">
<svg width="18" height="850" style="left:0;top:0"><path d="M14.5 1.5H18" stroke="#6e6e6e" stroke-width="1"/><path d="M14.5 9.5H18" stroke="#6e6e6e" stroke-width="1"/><path d="M14.5 17.5H18" stroke="#6e6e6e" stroke-width="1"/><path d="M14.5 25.5H18" stroke="#6e6e6e" stroke-width="1"/><path d="M0 33.5H18" stroke="#5c5c5c" stroke-width="1"/><path d="M14.5 42.5H18" stroke="#6e6e6e" stroke-width="1"/><path d="M14.5 50.5H18" stroke="#6e6e6e" stroke-width="1"/><path d="M14.5 58.5H18" stroke="#6e6e6e" stroke-width="1"/><path d="M14.5 66.5H18" stroke="#6e6e6e" stroke-width="1"/><path d="M0 75.5H18" stroke="#5c5c5c" stroke-width="1"/><path d="M14.5 83.5H18" stroke="#6e6e6e" stroke-width="1"/><path d="M14.5 91.5H18" stroke="#6e6e6e" stroke-width="1"/><path d="M14.5 99.5H18" stroke="#6e6e6e" stroke-width="1"/><path d="M14.5 107.5H18" stroke="#6e6e6e" stroke-width="1"/><path d="M0 116.5H18" stroke="#5c5c5c" stroke-width="1"/><path d="M14.5 124.5H18" stroke="#6e6e6e" stroke-width="1"/><path d="M14.5 132.5H18" stroke="#6e6e6e" stroke-width="1"/><path d="M14.5 140.5H18" stroke="#6e6e6e" stroke-width="1"/><path d="M14.5 149.5H18" stroke="#6e6e6e" stroke-width="1"/><path d="M0 157.5H18" stroke="#5c5c5c" stroke-width="1"/><path d="M14.5 165.5H18" stroke="#6e6e6e" stroke-width="1"/><path d="M14.5 173.5H18" stroke="#6e6e6e" stroke-width="1"/><path d="M14.5 181.5H18" stroke="#6e6e6e" stroke-width="1"/><path d="M14.5 190.5H18" stroke="#6e6e6e" stroke-width="1"/><path d="M0 198.5H18" stroke="#5c5c5c" stroke-width="1"/><path d="M14.5 206.5H18" stroke="#6e6e6e" stroke-width="1"/><path d="M14.5 214.5H18" stroke="#6e6e6e" stroke-width="1"/><path d="M14.5 223.5H18" stroke="#6e6e6e" stroke-width="1"/><path d="M14.5 231.5H18" stroke="#6e6e6e" stroke-width="1"/><path d="M0 239.5H18" stroke="#5c5c5c" stroke-width="1"/><path d="M14.5 247.5H18" stroke="#6e6e6e" stroke-width="1"/><path d="M14.5 256.5H18" stroke="#6e6e6e" stroke-width="1"/><path d="M14.5 264.5H18" stroke="#6e6e6e" stroke-width="1"/><path d="M14.5 272.5H18" stroke="#6e6e6e" stroke-width="1"/><path d="M0 280.5H18" stroke="#5c5c5c" stroke-width="1"/><path d="M14.5 288.5H18" stroke="#6e6e6e" stroke-width="1"/><path d="M14.5 297.5H18" stroke="#6e6e6e" stroke-width="1"/><path d="M14.5 305.5H18" stroke="#6e6e6e" stroke-width="1"/><path d="M14.5 313.5H18" stroke="#6e6e6e" stroke-width="1"/><path d="M0 321.5H18" stroke="#5c5c5c" stroke-width="1"/><path d="M14.5 330.5H18" stroke="#6e6e6e" stroke-width="1"/><path d="M14.5 338.5H18" stroke="#6e6e6e" stroke-width="1"/><path d="M14.5 346.5H18" stroke="#6e6e6e" stroke-width="1"/><path d="M14.5 354.5H18" stroke="#6e6e6e" stroke-width="1"/><path d="M0 362.5H18" stroke="#5c5c5c" stroke-width="1"/><path d="M14.5 371.5H18" stroke="#6e6e6e" stroke-width="1"/><path d="M14.5 379.5H18" stroke="#6e6e6e" stroke-width="1"/><path d="M14.5 387.5H18" stroke="#6e6e6e" stroke-width="1"/><path d="M14.5 395.5H18" stroke="#6e6e6e" stroke-width="1"/><path d="M0 404.5H18" stroke="#5c5c5c" stroke-width="1"/><path d="M14.5 412.5H18" stroke="#6e6e6e" stroke-width="1"/><path d="M14.5 420.5H18" stroke="#6e6e6e" stroke-width="1"/><path d="M14.5 428.5H18" stroke="#6e6e6e" stroke-width="1"/><path d="M14.5 437.5H18" stroke="#6e6e6e" stroke-width="1"/><path d="M0 445.5H18" stroke="#5c5c5c" stroke-width="1"/><path d="M14.5 453.5H18" stroke="#6e6e6e" stroke-width="1"/><path d="M14.5 461.5H18" stroke="#6e6e6e" stroke-width="1"/><path d="M14.5 469.5H18" stroke="#6e6e6e" stroke-width="1"/><path d="M14.5 478.5H18" stroke="#6e6e6e" stroke-width="1"/><path d="M0 486.5H18" stroke="#5c5c5c" stroke-width="1"/><path d="M14.5 494.5H18" stroke="#6e6e6e" stroke-width="1"/><path d="M14.5 502.5H18" stroke="#6e6e6e" stroke-width="1"/><path d="M14.5 511.5H18" stroke="#6e6e6e" stroke-width="1"/><path d="M14.5 519.5H18" stroke="#6e6e6e" stroke-width="1"/><path d="M0 527.5H18" stroke="#5c5c5c" stroke-width="1"/><path d="M14.5 535.5H18" stroke="#6e6e6e" stroke-width="1"/><path d="M14.5 543.5H18" stroke="#6e6e6e" stroke-width="1"/><path d="M14.5 552.5H18" stroke="#6e6e6e" stroke-width="1"/><path d="M14.5 560.5H18" stroke="#6e6e6e" stroke-width="1"/><path d="M0 568.5H18" stroke="#5c5c5c" stroke-width="1"/><path d="M14.5 576.5H18" stroke="#6e6e6e" stroke-width="1"/><path d="M14.5 585.5H18" stroke="#6e6e6e" stroke-width="1"/><path d="M14.5 593.5H18" stroke="#6e6e6e" stroke-width="1"/><path d="M14.5 601.5H18" stroke="#6e6e6e" stroke-width="1"/><path d="M0 609.5H18" stroke="#5c5c5c" stroke-width="1"/><path d="M14.5 617.5H18" stroke="#6e6e6e" stroke-width="1"/><path d="M14.5 626.5H18" stroke="#6e6e6e" stroke-width="1"/><path d="M14.5 634.5H18" stroke="#6e6e6e" stroke-width="1"/><path d="M14.5 642.5H18" stroke="#6e6e6e" stroke-width="1"/><path d="M0 650.5H18" stroke="#5c5c5c" stroke-width="1"/><path d="M14.5 659.5H18" stroke="#6e6e6e" stroke-width="1"/><path d="M14.5 667.5H18" stroke="#6e6e6e" stroke-width="1"/><path d="M14.5 675.5H18" stroke="#6e6e6e" stroke-width="1"/><path d="M14.5 683.5H18" stroke="#6e6e6e" stroke-width="1"/><path d="M0 692.5H18" stroke="#5c5c5c" stroke-width="1"/><path d="M14.5 700.5H18" stroke="#6e6e6e" stroke-width="1"/><path d="M14.5 708.5H18" stroke="#6e6e6e" stroke-width="1"/><path d="M14.5 716.5H18" stroke="#6e6e6e" stroke-width="1"/><path d="M14.5 724.5H18" stroke="#6e6e6e" stroke-width="1"/><path d="M0 733.5H18" stroke="#5c5c5c" stroke-width="1"/><path d="M14.5 741.5H18" stroke="#6e6e6e" stroke-width="1"/><path d="M14.5 749.5H18" stroke="#6e6e6e" stroke-width="1"/><path d="M14.5 757.5H18" stroke="#6e6e6e" stroke-width="1"/><path d="M14.5 766.5H18" stroke="#6e6e6e" stroke-width="1"/><path d="M0 774.5H18" stroke="#5c5c5c" stroke-width="1"/><path d="M14.5 782.5H18" stroke="#6e6e6e" stroke-width="1"/><path d="M14.5 790.5H18" stroke="#6e6e6e" stroke-width="1"/><path d="M14.5 798.5H18" stroke="#6e6e6e" stroke-width="1"/><path d="M14.5 807.5H18" stroke="#6e6e6e" stroke-width="1"/><path d="M0 815.5H18" stroke="#5c5c5c" stroke-width="1"/><path d="M14.5 823.5H18" stroke="#6e6e6e" stroke-width="1"/><path d="M14.5 831.5H18" stroke="#6e6e6e" stroke-width="1"/><path d="M14.5 840.5H18" stroke="#6e6e6e" stroke-width="1"/><path d="M14.5 848.5H18" stroke="#6e6e6e" stroke-width="1"/></svg>
<span class="rl" style="left:3px;top:6.4px;width:8px;text-align:center">2</span>
<span class="rl" style="left:3px;top:16.2px;width:8px;text-align:center">5</span>
<span class="rl" style="left:3px;top:47.5px;width:8px;text-align:center">3</span>
<span class="rl" style="left:3px;top:57.3px;width:8px;text-align:center">0</span>
<span class="rl" style="left:3px;top:88.7px;width:8px;text-align:center">3</span>
<span class="rl" style="left:3px;top:98.5px;width:8px;text-align:center">5</span>
<span class="rl" style="left:3px;top:129.8px;width:8px;text-align:center">4</span>
<span class="rl" style="left:3px;top:139.6px;width:8px;text-align:center">0</span>
<span class="rl" style="left:3px;top:170.9px;width:8px;text-align:center">4</span>
<span class="rl" style="left:3px;top:180.7px;width:8px;text-align:center">5</span>
<span class="rl" style="left:3px;top:212.1px;width:8px;text-align:center">5</span>
<span class="rl" style="left:3px;top:221.9px;width:8px;text-align:center">0</span>
<span class="rl" style="left:3px;top:253.2px;width:8px;text-align:center">5</span>
<span class="rl" style="left:3px;top:263.0px;width:8px;text-align:center">5</span>
<span class="rl" style="left:3px;top:294.3px;width:8px;text-align:center">6</span>
<span class="rl" style="left:3px;top:304.1px;width:8px;text-align:center">0</span>
<span class="rl" style="left:3px;top:335.4px;width:8px;text-align:center">6</span>
<span class="rl" style="left:3px;top:345.2px;width:8px;text-align:center">5</span>
<span class="rl" style="left:3px;top:376.6px;width:8px;text-align:center">7</span>
<span class="rl" style="left:3px;top:386.4px;width:8px;text-align:center">0</span>
<span class="rl" style="left:3px;top:417.7px;width:8px;text-align:center">7</span>
<span class="rl" style="left:3px;top:427.5px;width:8px;text-align:center">5</span>
<span class="rl" style="left:3px;top:458.8px;width:8px;text-align:center">8</span>
<span class="rl" style="left:3px;top:468.6px;width:8px;text-align:center">0</span>
<span class="rl" style="left:3px;top:500.0px;width:8px;text-align:center">8</span>
<span class="rl" style="left:3px;top:509.8px;width:8px;text-align:center">5</span>
<span class="rl" style="left:3px;top:541.1px;width:8px;text-align:center">9</span>
<span class="rl" style="left:3px;top:550.9px;width:8px;text-align:center">0</span>
<span class="rl" style="left:3px;top:582.2px;width:8px;text-align:center">9</span>
<span class="rl" style="left:3px;top:592.0px;width:8px;text-align:center">5</span>
<span class="rl" style="left:3px;top:613.5px;width:8px;text-align:center">1</span>
<span class="rl" style="left:3px;top:623.4px;width:8px;text-align:center">0</span>
<span class="rl" style="left:3px;top:633.1px;width:8px;text-align:center">0</span>
<span class="rl" style="left:3px;top:654.7px;width:8px;text-align:center">1</span>
<span class="rl" style="left:3px;top:664.5px;width:8px;text-align:center">0</span>
<span class="rl" style="left:3px;top:674.3px;width:8px;text-align:center">5</span>
<span class="rl" style="left:3px;top:695.8px;width:8px;text-align:center">1</span>
<span class="rl" style="left:3px;top:705.6px;width:8px;text-align:center">1</span>
<span class="rl" style="left:3px;top:715.4px;width:8px;text-align:center">0</span>
<span class="rl" style="left:3px;top:736.9px;width:8px;text-align:center">1</span>
<span class="rl" style="left:3px;top:746.7px;width:8px;text-align:center">1</span>
<span class="rl" style="left:3px;top:756.5px;width:8px;text-align:center">5</span>
<span class="rl" style="left:3px;top:778.1px;width:8px;text-align:center">1</span>
<span class="rl" style="left:3px;top:787.9px;width:8px;text-align:center">2</span>
<span class="rl" style="left:3px;top:797.7px;width:8px;text-align:center">0</span>
</div>
<div style="left:0;top:0;width:18px;height:18px;background:#343434"><svg width="18" height="18" style="left:0;top:0"><path d="M3 8.5H18M7.5 4V18" stroke="#8a8a8a" stroke-width="1" fill="none"/></svg></div>
</div>
<div id="tools">
<div style="left:0;top:0;width:107px;height:20px;background:#444;border-bottom:1px solid #3a3a3a;border-radius:0 3px 0 0"></div>
<svg width="12" height="8" style="left:62px;top:8px"><path d="M4.5 .5L1 4L4.5 7.5M10.5 .5L7 4L10.5 7.5" fill="none" stroke="#d0d0d0" stroke-width="1.5"/></svg>
<svg width="10" height="10" style="left:88px;top:7px"><path d="M1 1L9 9M9 1L1 9" stroke="#d0d0d0" stroke-width="1.8"/></svg>
<div style="left:38px;top:25px;width:29px;height:7px;background:repeating-linear-gradient(90deg,#3e3e3e 0 1px,transparent 1px 3px)"></div>
<div style="left:10px;top:48px;width:42px;height:32px;background:#2f2f2f;border-radius:3px"></div>
<svg width="30" height="30" viewBox="-15.0 -15.0 30 30" style="left:16.0px;top:49.0px"><path d="M-5.5 -10.5V9L-0.5 3.5H8Z" fill="none" stroke="#c6c6c6" stroke-width="1.6" stroke-linejoin="miter"/></svg>
<svg width="30" height="30" viewBox="-15.0 -15.0 30 30" style="left:62.0px;top:49.0px"><path d="M-7 -11V10L-1.5 4H9Z" fill="#c6c6c6"/></svg>
<svg width="6" height="6" style="left:90px;top:73px"><path d="M6 0V6H0Z" fill="#c6c6c6"/></svg>
<svg width="30" height="30" viewBox="-15.0 -15.0 30 30" style="left:16.0px;top:86.0px"><path d="M-10 11L3 -3" stroke="#c6c6c6" stroke-width="3" stroke-linecap="butt"/><path d="M-5 -9l1.2 2.8 2.8 1.2-2.8 1.2-1.2 2.8-1.2-2.8-2.8-1.2 2.8-1.2zM7 -11l1 2.3 2.3 1-2.3 1-1 2.3-1-2.3-2.3-1 2.3-1zM9 -2l.8 1.7 1.7.8-1.7.8-.8 1.7-.8-1.7-1.7-.8 1.7-.8z" fill="#c6c6c6"/></svg>
<svg width="30" height="30" viewBox="-15.0 -15.0 30 30" style="left:62.0px;top:86.0px"><path d="M-1 -2C-9 -2 -11 -8 -4 -10C4 -12 11 -8 9 -2" fill="none" stroke="#c6c6c6" stroke-width="1.6"/><circle cx="-6" cy="0" r="2.2" fill="none" stroke="#c6c6c6" stroke-width="1.4"/><path d="M-5 2C-3 5 -5 8 -7 9" fill="none" stroke="#c6c6c6" stroke-width="1.4"/><path d="M0 -7V11L4.5 6H11Z" fill="#c6c6c6"/></svg>
<svg width="30" height="30" viewBox="-15.0 -15.0 30 30" style="left:16.0px;top:129.0px"><path d="M-11.5 11L-5 -5L0 -9L8.5 -.5L4.5 4.5Z" fill="#c6c6c6"/><path d="M2 -11L6.5 -15.5L14.5 -7.5L10 -3Z" fill="#c6c6c6"/><path d="M-11 10.5L-2 1.5" stroke="#535353" stroke-width="1.3"/><circle cx="-1.2" cy=".8" r="1.5" fill="#535353"/></svg>
<svg width="30" height="30" viewBox="-15.0 -15.0 30 30" style="left:62.0px;top:129.0px"><path d="M-7.5 11L-2 -4L3 -8L10.5 -.5L6.5 4.5Z" fill="#c6c6c6"/><path d="M5 -10L9 -14.5L16 -7L12 -3Z" fill="#c6c6c6"/><path d="M-7 10.5L1 2.5" stroke="#535353" stroke-width="1.3"/><path d="M-12 -11C-6 -9 -9 -3 -12 2C-14.5 7 -11 11 -8.5 9" fill="none" stroke="#c6c6c6" stroke-width="1.5"/></svg>
<svg width="6" height="6" style="left:44px;top:153px"><path d="M6 0V6H0Z" fill="#c6c6c6"/></svg>
<svg width="30" height="30" viewBox="-15.0 -15.0 30 30" style="left:16.0px;top:165.0px"><path d="M-10 -10H10V-5H8V-7H1.8V8H5V10H-5V8H-1.8V-7H-8V-5H-10Z" fill="#c6c6c6"/></svg>
<svg width="30" height="30" viewBox="-15.0 -15.0 30 30" style="left:62.0px;top:165.0px"><path d="M-10 10L10 -10" stroke="#c6c6c6" stroke-width="2.4"/></svg>
<svg width="6" height="6" style="left:44px;top:189px"><path d="M6 0V6H0Z" fill="#c6c6c6"/></svg>
<svg width="6" height="6" style="left:90px;top:189px"><path d="M6 0V6H0Z" fill="#c6c6c6"/></svg>
<svg width="30" height="30" viewBox="-15.0 -15.0 30 30" style="left:16.0px;top:201.0px"><ellipse cx="0" cy="0" rx="12.5" ry="9.5" fill="#777" stroke="#c6c6c6" stroke-width="1.6"/></svg>
<svg width="30" height="30" viewBox="-15.0 -15.0 30 30" style="left:62.0px;top:201.0px"><path d="M11 -12C13 -11 12 -8 10 -5L2 5L-2 2L6 -8C8 -11 10 -13 11 -12Z" fill="#c6c6c6"/><path d="M-3 3L1 6C0 11 -6 12 -11 11C-8 9 -8 4 -3 3Z" fill="#c6c6c6"/></svg>
<svg width="6" height="6" style="left:44px;top:225px"><path d="M6 0V6H0Z" fill="#c6c6c6"/></svg>
<svg width="6" height="6" style="left:90px;top:225px"><path d="M6 0V6H0Z" fill="#c6c6c6"/></svg>
<svg width="30" height="30" viewBox="-15.0 -15.0 30 30" style="left:16.0px;top:237.0px"><path d="M-9 9C-16 4 -12 -9 -3 -8C3 -8 5 -2 3 1" fill="#777" stroke="#c6c6c6" stroke-width="1.6"/><path d="M-3 8L10 -7L13 -4L1 10L-4 12Z" fill="#c6c6c6"/></svg>
<svg width="30" height="30" viewBox="-15.0 -15.0 30 30" style="left:62.0px;top:237.0px"><path d="M2 -13L13 -3L2 9L-9 -1Z" fill="#c6c6c6"/><path d="M-10 1L0 10L-4 13L-13 5Z" fill="none" stroke="#c6c6c6" stroke-width="1.6"/></svg>
<svg width="6" height="6" style="left:44px;top:261px"><path d="M6 0V6H0Z" fill="#c6c6c6"/></svg>
<svg width="6" height="6" style="left:90px;top:261px"><path d="M6 0V6H0Z" fill="#c6c6c6"/></svg>
<svg width="30" height="30" viewBox="-15.0 -15.0 30 30" style="left:16.0px;top:280.0px"><path d="M-12 -8V8L-4 0Z" fill="none" stroke="#c6c6c6" stroke-width="1.5"/><path d="M12 -9V9L3 0Z" fill="#c6c6c6"/><path d="M0 -11V12" stroke="#c6c6c6" stroke-width="1.4" stroke-dasharray="1.5 1.5"/></svg>
<svg width="30" height="30" viewBox="-15.0 -15.0 30 30" style="left:62.0px;top:280.0px"><rect x="-5" y="-11" width="18" height="16" fill="none" stroke="#c6c6c6" stroke-width="1.5"/><rect x="-12" y="-1" width="13" height="12" fill="none" stroke="#c6c6c6" stroke-width="1.5"/><path d="M4 -2L10 -8M5 -8.5H10.5V-3" fill="none" stroke="#c6c6c6" stroke-width="1.6"/></svg>
<svg width="6" height="6" style="left:44px;top:304px"><path d="M6 0V6H0Z" fill="#c6c6c6"/></svg>
<svg width="6" height="6" style="left:90px;top:304px"><path d="M6 0V6H0Z" fill="#c6c6c6"/></svg>
<svg width="30" height="30" viewBox="-15.0 -15.0 30 30" style="left:16.0px;top:316.0px"><path d="M-9 -11C-4 -12 -5 -5 -2 -4C3 -3 6 -9 11 -5C14 -2 12 2 10 2C10 -2 7 -2 5 1C2 6 -4 7 -6 3C-8 -1 -6 -5 -10 -6Z" fill="#c6c6c6"/><circle cx="-10" cy="8" r="2" fill="none" stroke="#c6c6c6" stroke-width="1.3"/><circle cx="4" cy="-9" r="2" fill="none" stroke="#c6c6c6" stroke-width="1.3"/><path d="M-9 7L3 -8" stroke="#c6c6c6" stroke-width="1.2"/><circle cx="-4" cy="0" r="2.5" fill="#535353" stroke="#c6c6c6" stroke-width="1.2"/></svg>
<svg width="30" height="30" viewBox="-15.0 -15.0 30 30" style="left:62.0px;top:316.0px"><path d="M3 -13L12 -4L9 -3L5 2L4 7L-6 -3L-1 -4L3 -9Z" fill="#c6c6c6"/><path d="M-3 2L-12 12" stroke="#c6c6c6" stroke-width="2.4"/></svg>
<svg width="6" height="6" style="left:44px;top:340px"><path d="M6 0V6H0Z" fill="#c6c6c6"/></svg>
<svg width="6" height="6" style="left:90px;top:340px"><path d="M6 0V6H0Z" fill="#c6c6c6"/></svg>
<svg width="30" height="30" viewBox="-15.0 -15.0 30 30" style="left:16.0px;top:352.0px"><circle cx="-5" cy="-2" r="7" fill="none" stroke="#c6c6c6" stroke-width="1.4"/><circle cx="2" cy="-4" r="8" fill="none" stroke="#c6c6c6" stroke-width="1.4"/><path d="M-9 -2H5" stroke="#c6c6c6" stroke-width="1.4" stroke-dasharray="1.5 1.5"/><path d="M3 -3V13L7 8.5H14Z" fill="#c6c6c6"/></svg>
<svg width="30" height="30" viewBox="-15.0 -15.0 30 30" style="left:62.0px;top:352.0px"><path d="M-12 -12L3 -7V1L-12 11Z" fill="none" stroke="#c6c6c6" stroke-width="1.4"/><path d="M-12 -4.5L3 -4.3M-12 3L3 -1.6M-7 -10.3V7.7M-2 -8.7V4.3" fill="none" stroke="#c6c6c6" stroke-width="1.3"/><path d="M2 3.5H8M-3 7.3H11M-9 11H14" stroke="#c6c6c6" stroke-width="1.3"/></svg>
<svg width="6" height="6" style="left:44px;top:376px"><path d="M6 0V6H0Z" fill="#c6c6c6"/></svg>
<svg width="6" height="6" style="left:90px;top:376px"><path d="M6 0V6H0Z" fill="#c6c6c6"/></svg>
<svg width="30" height="30" viewBox="-15.0 -15.0 30 30" style="left:16.0px;top:396.0px"><rect x="-11.5" y="-9.5" width="23" height="19" fill="none" stroke="#c6c6c6" stroke-width="1.5"/><path d="M-11 -2C-4 -4 2 -1 11 2M-11 5C-5 2 0 4 3 9M-4 -9C2 -4 4 2 3 9M4 -9C8 -5 9 -1 8 9M-11 -6C-6 -8 -2 -6 0 -4" fill="none" stroke="#c6c6c6" stroke-width="1.4"/></svg>
<svg width="30" height="30" viewBox="-15.0 -15.0 30 30" style="left:62.0px;top:396.0px"><defs><linearGradient id="tg" x1="0" x2="1"><stop offset="0" stop-color="#c8c8c8"/><stop offset="1" stop-color="#4a4a4a"/></linearGradient></defs><rect x="-11.5" y="-9.5" width="23" height="19" fill="url(#tg)" stroke="#c6c6c6" stroke-width="1.5"/></svg>
<svg width="30" height="30" viewBox="-15.0 -15.0 30 30" style="left:16.0px;top:432.0px"><path d="M-12 12C-13 9 -11 8 -10 7L1 -5L5 -1L-6 10C-8 12 -10 13 -12 12Z" fill="none" stroke="#c6c6c6" stroke-width="1.5"/><path d="M0 -8L8 0L10 -2L7 -4C10 -7 12 -10 10 -12C8 -14 5 -11 3 -9L1 -11Z" fill="#c6c6c6"/></svg>
<svg width="30" height="30" viewBox="-15.0 -15.0 30 30" style="left:62.0px;top:432.0px"><rect x="-12" y="-10" width="11" height="11" fill="#c6c6c6"/><circle cx="0" cy="-1" r="6" fill="#8a8a8a" stroke="#c6c6c6" stroke-width="1.2"/><circle cx="8" cy="4" r="5.5" fill="#535353" stroke="#c6c6c6" stroke-width="1.6"/></svg>
<svg width="6" height="6" style="left:44px;top:456px"><path d="M6 0V6H0Z" fill="#c6c6c6"/></svg>
<svg width="30" height="30" viewBox="-15.0 -15.0 30 30" style="left:16.0px;top:475.0px"><rect x="-2" y="-5" width="12" height="16" fill="none" stroke="#c6c6c6" stroke-width="1.5"/><rect x="1" y="-9" width="6" height="4" fill="#c6c6c6"/><path d="M-1 -11H5V-9H-1Z" fill="#c6c6c6"/><circle cx="4" cy="3" r="3" fill="none" stroke="#c6c6c6" stroke-width="1.6"/><path d="M-13 -10h2v2h-2zM-9 -10h2v2h-2zM-5 -10h2v2h-2zM-13 -6h2v2h-2zM-9 -6h2v2h-2zM-13 -2h2v2h-2z" fill="#c6c6c6"/></svg>
<svg width="30" height="30" viewBox="-15.0 -15.0 30 30" style="left:62.0px;top:475.0px"><path d="M-12 -11V10H13" fill="none" stroke="#c6c6c6" stroke-width="1.5"/><rect x="-7" y="0" width="4" height="10" fill="#c6c6c6"/><rect x="0" y="-9" width="4" height="19" fill="#c6c6c6"/><rect x="7" y="-6" width="4" height="16" fill="#c6c6c6"/></svg>
<svg width="6" height="6" style="left:44px;top:499px"><path d="M6 0V6H0Z" fill="#c6c6c6"/></svg>
<svg width="6" height="6" style="left:90px;top:499px"><path d="M6 0V6H0Z" fill="#c6c6c6"/></svg>
<svg width="30" height="30" viewBox="-15.0 -15.0 30 30" style="left:16.0px;top:518.0px"><path d="M-6 -6H5L10 -1V10H-6Z" fill="#777" stroke="#c6c6c6" stroke-width="1.5"/><path d="M5 -6V-1H10" fill="none" stroke="#c6c6c6" stroke-width="1.2"/><path d="M-14 -6H-6M-6 -14V-6" stroke="#c6c6c6" stroke-width="1.5"/></svg>
<svg width="30" height="30" viewBox="-15.0 -15.0 30 30" style="left:62.0px;top:518.0px"><path d="M-11 12L3 -7L8 -2Z" fill="none" stroke="#c6c6c6" stroke-width="1.5"/><path d="M3 -8L7 -13L13 -7L9 -2Z" fill="#c6c6c6"/></svg>
<svg width="6" height="6" style="left:90px;top:542px"><path d="M6 0V6H0Z" fill="#c6c6c6"/></svg>
<svg width="30" height="30" viewBox="-15.0 -15.0 30 30" style="left:16.0px;top:554.0px"><path d="M-5 12C-8 8 -11 4 -13 1C-13 -1 -11 -2 -9 0L-6 3V-8C-6 -10 -3 -10 -3 -8V-11C-3 -13 0 -13 0 -11V-9C0 -12 3 -12 3 -10V-7C3 -9 6 -9 6 -7C8 -5 8 5 5 12Z" fill="#c6c6c6"/></svg>
<svg width="30" height="30" viewBox="-15.0 -15.0 30 30" style="left:62.0px;top:554.0px"><circle cx="-2" cy="-3" r="8" fill="none" stroke="#c6c6c6" stroke-width="1.8"/><path d="M4 3L12 11" stroke="#c6c6c6" stroke-width="2.6" stroke-linecap="round"/></svg>
<svg width="6" height="6" style="left:44px;top:578px"><path d="M6 0V6H0Z" fill="#c6c6c6"/></svg>
<div class="hsep" style="top:122px"></div>
<div class="hsep" style="top:272px"></div>
<div class="hsep" style="top:388px"></div>
<div class="hsep" style="top:468px"></div>
<div class="hsep" style="top:511px"></div>
<div class="hsep" style="top:590px"></div>
<div style="left:37px;top:626px;width:53px;height:53px;background:#000;border:1px solid #e8e8e8"></div>
<div style="left:50px;top:639px;width:27px;height:27px;background:#535353;border:1px solid #e8e8e8"></div>
<div style="left:9px;top:598px;width:54px;height:54px;background:#fff;border:1px solid #8a8a8a;overflow:hidden"><svg width="54" height="54" style="left:-1px;top:-1px"><path d="M0 54L54 0" stroke="#c8222a" stroke-width="2"/></svg></div>
<svg width="16" height="16" style="left:75px;top:601px"><path d="M3 5H8C11 5 12 7 12 10M5.5 1.5L2 5L5.5 8.5M8.5 8L12 12L15.5 8" fill="none" stroke="#c6c6c6" stroke-width="1.8"/></svg>
<div style="left:14px;top:666px;width:10px;height:10px;background:#111;border:1px solid #ddd"></div>
<div style="left:10px;top:662px;width:10px;height:10px;background:#fff;border:1px solid #222"></div>
<div style="left:9px;top:690px;width:88px;height:28px;border:1px solid #4a4a4a;border-radius:3px"></div>
<div style="left:69px;top:690px;width:28px;height:28px;background:#333;border-radius:3px"></div>
<div style="left:12px;top:694px;width:21px;height:20px;background:#000"></div>
<div style="left:43px;top:694px;width:20px;height:20px;background:linear-gradient(90deg,#fff,#333);border:2px solid #000"></div>
<div style="left:73px;top:694px;width:20px;height:20px;background:#fff;border:1px solid #000;overflow:hidden"><svg width="20" height="20" style="left:-1px;top:-1px"><path d="M0 20L20 0" stroke="#c8222a" stroke-width="4"/></svg></div>
<div style="left:9px;top:726px;width:88px;height:28px;border:1px solid #4a4a4a;border-radius:3px"></div>
<div style="left:9px;top:726px;width:28px;height:28px;background:#3a3a3a;border-radius:3px"></div>
<div style="left:38px;top:727px;width:1px;height:26px;background:#4a4a4a"></div><div style="left:68px;top:727px;width:1px;height:26px;background:#4a4a4a"></div>
<svg width="20" height="20" style="left:13px;top:730px"><circle cx="8" cy="8" r="5.5" fill="none" stroke="#c6c6c6" stroke-width="1.5"/><rect x="9" y="10" width="8" height="8" fill="#c6c6c6"/></svg>
<svg width="20" height="20" style="left:43px;top:730px"><circle cx="8" cy="8" r="5.5" fill="#777" stroke="#c6c6c6" stroke-width="1.5"/><rect x="9" y="10" width="8" height="8" fill="#c6c6c6"/></svg>
<svg width="20" height="20" style="left:72px;top:730px"><circle cx="10" cy="9" r="5.5" fill="none" stroke="#c6c6c6" stroke-width="1.5"/><path d="M10 9V5.5A3.5 3.5 0 0 1 13.5 9Z" fill="#c6c6c6"/><circle cx="11" cy="8" r="2.5" fill="#c6c6c6"/></svg>
<svg width="36" height="26" style="left:35px;top:766px"><rect x="14" y="1" width="20" height="16" fill="#777" stroke="#c6c6c6" stroke-width="1.5"/><rect x="14" y="1" width="20" height="4" fill="#c6c6c6"/><rect x="2" y="7.5" width="20" height="16" fill="#777" stroke="#c6c6c6" stroke-width="1.5"/><rect x="2" y="7.5" width="20" height="4" fill="#c6c6c6"/></svg>
</div>
<div id="menubar">
<span style="left:13px;top:1px;font-size:32px;line-height:38px;font-weight:bold;color:#c4936c;letter-spacing:-1px;transform:scaleX(.84);transform-origin:0 0">Ai</span>
<span class="mi" style="left:71px">文件(F)</span>
<span class="mi" style="left:155px">编辑(E)</span>
<span class="mi" style="left:238px">对象(O)</span>
<span class="mi" style="left:328px">文字(T)</span>
<span class="mi" style="left:413px">选择(S)</span>
<span class="mi" style="left:499px">效果(C)</span>
<span class="mi" style="left:586px">视图(V)</span>
<span class="mi" style="left:673px">窗口(W)</span>
<span class="mi" style="left:766px">帮助(H)</span>
<div class="vsep" style="left:850px;top:8px;height:30px;background:#464646"></div>
<div style="left:874px;top:10px;width:25px;height:25px;background:#6b6b6b"><span style="left:3px;top:3px;font-size:17px;line-height:20px;font-weight:bold;color:#575757">Br</span></div>
<div style="left:928px;top:10px;width:25px;height:25px;background:#c9c9c9"><span style="left:4px;top:3px;font-size:17px;line-height:20px;font-weight:bold;color:#4a4a4a">St</span></div>
<svg width="27" height="18" style="left:977px;top:11px"><rect x="0" y="0" width="12" height="18" fill="#c6c6c6"/><rect x="14" y="0" width="13" height="8" fill="#c6c6c6"/><rect x="14" y="10" width="13" height="8" fill="#c6c6c6"/></svg>
<svg width="12" height="7" style="left:1014px;top:17px"><path d="M1 1L6.0 6L11 1" fill="none" stroke="#e0e0e0" stroke-width="2"/></svg>
<svg width="28" height="28" style="left:1051px;top:8px"><path d="M27 1C20 2 12 8 9 17L13 21C21 17 27 9 27 1Z" fill="#c0c0c0"/><path d="M11 8C7 8 3 11 1 15L7 15Z M20 17C20 21 17 25 13 27L13 22Z" fill="#c0c0c0"/></svg>
<div class="vsep" style="left:1368px;top:8px;height:30px;background:#464646"></div>
<span class="mi" style="left:1384px;top:7px">传统基本功能</span>
<svg width="12" height="7" style="left:1508px;top:18px"><path d="M1 1L6.0 6L11 1" fill="none" stroke="#e0e0e0" stroke-width="2"/></svg>
<div class="vsep" style="left:1540px;top:8px;height:30px;background:#464646"></div>
<div style="left:1555px;top:7px;width:193px;height:30px;background:#474747;border:1px solid #5e5e5e;border-radius:3px"><svg width="30" height="20" style="left:6px;top:4px"><circle cx="8" cy="8" r="6" fill="none" stroke="#d0d0d0" stroke-width="1.8"/><path d="M4 13L0 18" stroke="#d0d0d0" stroke-width="2"/><path d="M17 11H25L21 15Z" fill="#d0d0d0"/></svg><span class="mono" style="left:37px;top:4px;font-size:14.5px;color:#7c7c7c;letter-spacing:.5px">搜索 Adobe Stock</span></div>
<div style="left:1762px;top:0;width:152px;height:28px;background:#585858;border-radius:0 0 4px 4px"></div><div style="left:1802px;top:0;width:1px;height:27px;background:#4d4d4d"></div><div style="left:1846px;top:0;width:1px;height:27px;background:#4d4d4d"></div>
<div style="left:1774px;top:16px;width:16px;height:4px;background:#c4c4c4"></div>
<svg width="18" height="16" style="left:1815px;top:6px"><rect x="5" y="1.5" width="11" height="9" fill="none" stroke="#c4c4c4" stroke-width="2.4"/><rect x="1.5" y="6" width="10" height="8" fill="#585858" stroke="#c4c4c4" stroke-width="2.4"/></svg>
<svg width="16" height="14" style="left:1873px;top:7px"><path d="M1.5 1L14.5 13M14.5 1L1.5 13" stroke="#c4c4c4" stroke-width="2.6"/></svg>
</div>
<div id="ctrl">
<div style="left:8px;top:11px;width:4px;height:29px;background:repeating-linear-gradient(0deg,#3f3f3f 0 1px,transparent 1px 3px)"></div>
<span class="lbl" style="left:24px;top:12px;color:#bdbdbd">路径</span>
<div class="vsep" style="left:153px;top:6px;height:40px"></div>
<div class="dd" style="left:162px;top:9px;width:58px;height:32px"></div>
<div style="left:164px;top:11px;width:28px;height:28px;background:#fff;border:1px solid #bbb;overflow:hidden"><svg width="28" height="28" style="left:-1px;top:-1px"><path d="M2 26L26 2" stroke="#a8222a" stroke-width="2"/></svg></div>
<svg width="12" height="7" style="left:200px;top:22px"><path d="M1 1L6.0 6L11 1" fill="none" stroke="#e0e0e0" stroke-width="2"/></svg>
<div class="dd" style="left:228px;top:9px;width:58px;height:32px"></div>
<div style="left:230px;top:11px;width:28px;height:28px;background:#000;border:1px solid #ddd"><div style="left:8px;top:8px;width:10px;height:10px;border:2px solid #fff;background:#fff;box-shadow:inset 0 0 0 1px #000"></div></div>
<svg width="12" height="7" style="left:266px;top:22px"><path d="M1 1L6.0 6L11 1" fill="none" stroke="#e0e0e0" stroke-width="2"/></svg>
<span class="lbl ul" style="left:305px;top:13px;width:50px;height:23px;color:#e0e0e0">描边 :</span>
<div class="fld" style="left:363px;top:10px;width:119px;height:30px"></div>
<div style="left:389px;top:11px;width:1px;height:28px;background:#5a5a5a"></div><div style="left:455px;top:11px;width:1px;height:28px;background:#5a5a5a"></div>
<svg width="14" height="24" style="left:369px;top:13px"><path d="M1.5 8L7 2L12.5 8M1.5 16L7 22L12.5 16" fill="none" stroke="#e0e0e0" stroke-width="1.8"/></svg>
<span class="mono" style="left:394px;top:14px">14 pt</span>
<svg width="12" height="7" style="left:462px;top:22px"><path d="M1 1L6.0 6L11 1" fill="none" stroke="#e0e0e0" stroke-width="2"/></svg>
<div class="dd" style="left:490px;top:9px;width:164px;height:32px"></div>
<div style="left:492px;top:11px;width:134px;height:28px;background:#dedede"><svg width="134" height="28" style="left:0;top:0"><path d="M24 3V25L113 14Z" fill="#000"/></svg></div>
<svg width="12" height="7" style="left:634px;top:22px"><path d="M1 1L6.0 6L11 1" fill="none" stroke="#e0e0e0" stroke-width="2"/></svg>
<div class="dd" style="left:661px;top:9px;width:159px;height:32px"></div>
<div style="left:663px;top:11px;width:130px;height:28px;background:#e4e4e4"><div style="left:8px;top:13px;width:72px;height:4px;background:#000"></div><span style="left:86px;top:3px;font-size:17px;line-height:22px;color:#333;white-space:nowrap">基本</span></div>
<svg width="12" height="7" style="left:801px;top:22px"><path d="M1 1L6.0 6L11 1" fill="none" stroke="#e0e0e0" stroke-width="2"/></svg>
<span class="lbl ul" style="left:832px;top:13px;width:86px;height:23px;color:#e0e0e0">不透明度 :</span>
<div class="fld" style="left:925px;top:10px;width:103px;height:31px"></div>
<div style="left:1001px;top:11px;width:1px;height:29px;background:#5a5a5a"></div>
<span class="mono" style="left:931px;top:14px">100%</span>
<svg width="9" height="14" style="left:1010px;top:18px"><path d="M1.5 1L7.5 7L1.5 13" fill="none" stroke="#e0e0e0" stroke-width="2"/></svg>
<span class="lbl" style="left:1037px;top:13px;color:#b8b8b8">样式 :</span>
<div class="dd" style="left:1095px;top:9px;width:58px;height:32px"></div>
<div style="left:1097px;top:11px;width:28px;height:28px;background:#e8e8e8"></div>
<svg width="12" height="7" style="left:1133px;top:22px"><path d="M1 1L6.0 6L11 1" fill="none" stroke="#e0e0e0" stroke-width="2"/></svg>
<div class="vsep" style="left:1164px;top:6px;height:40px"></div>
<svg width="26" height="26" style="left:1178px;top:11px"><circle cx="13" cy="13" r="12" fill="#c4c4c4"/><path d="M13 13L22.70 8.98A10.5 10.5 0 0 1 22.70 17.02Z" fill="#d0d0d0"/><path d="M13 13L22.70 17.02A10.5 10.5 0 0 1 17.02 22.70Z" fill="#9a9a9a"/><path d="M13 13L17.02 22.70A10.5 10.5 0 0 1 8.98 22.70Z" fill="#d0d0d0"/><path d="M13 13L8.98 22.70A10.5 10.5 0 0 1 3.30 17.02Z" fill="#9a9a9a"/><path d="M13 13L3.30 17.02A10.5 10.5 0 0 1 3.30 8.98Z" fill="#d0d0d0"/><path d="M13 13L3.30 8.98A10.5 10.5 0 0 1 8.98 3.30Z" fill="#9a9a9a"/><path d="M13 13L8.98 3.30A10.5 10.5 0 0 1 17.02 3.30Z" fill="#d0d0d0"/><path d="M13 13L17.02 3.30A10.5 10.5 0 0 1 22.70 8.98Z" fill="#9a9a9a"/><circle cx="13" cy="13" r="3.2" fill="#d8d8d8"/><circle cx="13" cy="13" r="1.6" fill="#555"/></svg>
<div class="vsep" style="left:1222px;top:6px;height:40px"></div>
<svg width="24" height="24" style="left:1240px;top:13px"><rect x="1.7" y="1.7" width="18" height="18" fill="none" stroke="#b8b8b8" stroke-width="1" stroke-dasharray="1 1"/><rect x="0" y="0" width="3.4" height="3.4" fill="#cfcfcf"/><rect x="0" y="9" width="3.4" height="3.4" fill="#cfcfcf"/><rect x="0" y="18" width="3.4" height="3.4" fill="#cfcfcf"/><rect x="9" y="0" width="3.4" height="3.4" fill="#cfcfcf"/><rect x="9" y="18" width="3.4" height="3.4" fill="#cfcfcf"/><rect x="18" y="0" width="3.4" height="3.4" fill="#cfcfcf"/><rect x="18" y="9" width="3.4" height="3.4" fill="#cfcfcf"/><rect x="18" y="18" width="3.4" height="3.4" fill="#cfcfcf"/></svg>
<svg width="10" height="6" style="left:1264px;top:23px"><path d="M1 1L5.0 5L9 1" fill="none" stroke="#bdbdbd" stroke-width="1.5"/></svg>
<div class="vsep" style="left:1292px;top:6px;height:40px"></div>
<span class="lbl ul" style="left:1305px;top:13px;width:37px;height:23px;color:#e6e6e6">变换</span>
<div class="vsep" style="left:1352px;top:6px;height:40px"></div>
<svg width="26" height="24" style="left:1367px;top:12px"><rect x="8" y="7.5" width="10" height="8" fill="#8a8a8a" stroke="#cfcfcf" stroke-width="1.6"/><path d="M1 1L6.5 6M25 1L19.5 6M1 22L6.5 17M25 22L19.5 17" stroke="#cfcfcf" stroke-width="1.8"/><path d="M3 6.5H7V2.5M23 6.5H19V2.5M3 16.5H7V20.5M23 16.5H19V20.5" fill="none" stroke="#cfcfcf" stroke-width="1.8"/></svg>
<svg width="26" height="26" style="left:1412px;top:11px"><rect x="2" y="8" width="8" height="8" fill="#8a8a8a" stroke="#cfcfcf" stroke-width="1.4"/><rect x="15" y="2.5" width="7" height="7" fill="#8a8a8a" stroke="#cfcfcf" stroke-width="1.4"/><path d="M0 6.5h3M0 6.5v3M12 6.5h-3M12 6.5v3M0 17.5h3M0 17.5v-3M13 1h3M13 1v3M24 1h-3M24 1v3M24 11h-3M24 11v-3" stroke="#cfcfcf" stroke-width="1.2" fill="none"/><path d="M11 8V25L15.5 20.5H22Z" fill="#cfcfcf"/></svg>
<svg width="12" height="7" style="left:1447px;top:21px"><path d="M1 1L6.0 6L11 1" fill="none" stroke="#e0e0e0" stroke-width="2"/></svg>
<svg width="20" height="18" style="left:1765px;top:15px"><path d="M1 1h7v6h-7zM11 1h7v6h-7zM1 10h7v6h-7zM11 10h7v6h-7z" fill="#cfcfcf"/><path d="M9.5 0V18M0 8.5H19" stroke="#535353" stroke-width="1"/></svg>
<svg width="30" height="20" style="left:1803px;top:14px"><rect x="0" y="0" width="6" height="8" fill="#cfcfcf"/><rect x="0" y="11" width="6" height="8" fill="#cfcfcf"/><path d="M9 5H19C24 5 24 13 19 13H9" fill="none" stroke="#cfcfcf" stroke-width="2.4"/><path d="M9 1V9L15 5Z" fill="#cfcfcf" transform="translate(-1 0)"/></svg>
<svg width="10" height="6" style="left:1836px;top:21px"><path d="M1 1L5.0 5L9 1" fill="none" stroke="#6e6e6e" stroke-width="1.5"/></svg>
<svg width="22" height="16" style="left:1875px;top:17px"><path d="M0 2H3M0 8H3M0 14H3" stroke="#cfcfcf" stroke-width="2.4"/><path d="M6 2H21M6 8H21M6 14H21" stroke="#cfcfcf" stroke-width="2.4"/></svg>
</div>
<div id="tabbar"><div id="tab"><span style="left:15px;top:8px;font-size:18px;line-height:24px;color:#e8e8e8;white-space:nowrap;letter-spacing:.55px">未标题-1* @ 29.02% (CMYK/GPU 预览)</span><svg width="12" height="12" style="left:376px;top:13px"><path d="M1.5 1.5L10.5 10.5M10.5 1.5L1.5 10.5" stroke="#e0e0e0" stroke-width="2"/></svg></div></div>
<div style="left:1775px;top:397px;width:26px;height:608px;background:#4a4a4a;border-left:1px solid #444"></div>
<div style="left:1777px;top:550px;width:22px;height:38px;background:#5e5e5e;border-radius:10px"></div>
<svg width="12" height="8" style="left:1781px;top:989px"><path d="M1 1L6 6.5L11 1" fill="none" stroke="#8c8c8c" stroke-width="1.8"/></svg>
<div style="left:1764px;top:397px;width:11px;height:484px;background:linear-gradient(90deg,#0a0a10 0 1px,#1b1f3c 1px,#2e3560 6px,#1d2142 11px)"></div>
<div style="left:1765px;top:826px;width:9px;height:55px;background:linear-gradient(180deg,#d8d8e8,#ffffff 12px)"></div>
<div id="status"><div style="left:0;top:1px;width:1801px;height:24px">
<div class="fld" style="left:8px;top:1px;width:76px;height:22px;border-color:#555;background:#414141"></div>
<span class="mono" style="left:12px;top:3px;font-size:15px;letter-spacing:-.3px">29.02%</span>
<div class="dd" style="left:85px;top:1px;width:24px;height:22px;border-color:#555"></div>
<svg width="12" height="7" style="left:90px;top:10px"><path d="M1 1L6 6L11 1" fill="none" stroke="#e0e0e0" stroke-width="2"/></svg>
<div class="dd" style="left:111px;top:1px;width:60px;height:22px;border-color:#505050;background:#4a4a4a"></div>
<svg width="40" height="14" style="left:122px;top:5px"><path d="M1.5 0V14" stroke="#6e6e6e" stroke-width="2.4"/><path d="M12 0V14L3 7Z" fill="#6e6e6e"/><path d="M36 0V14L27 7Z" fill="#6e6e6e"/></svg>
<div class="fld" style="left:173px;top:1px;width:60px;height:22px;border-color:#555;background:#414141"></div>
<span class="mono" style="left:178px;top:3px;font-size:15px">1</span>
<div class="dd" style="left:234px;top:1px;width:24px;height:22px;border-color:#555"></div>
<svg width="12" height="7" style="left:240px;top:10px"><path d="M1 1L6 6L11 1" fill="none" stroke="#e0e0e0" stroke-width="2"/></svg>
<div class="dd" style="left:260px;top:1px;width:62px;height:22px;border-color:#505050;background:#4a4a4a"></div>
<svg width="42" height="14" style="left:273px;top:5px"><path d="M1 0V14L10 7Z" fill="#6e6e6e"/><path d="M26 0V14L35 7Z" fill="#6e6e6e"/><path d="M37.5 0V14" stroke="#6e6e6e" stroke-width="2.4"/></svg>
<div style="left:324px;top:1px;width:325px;height:23px;background:#4a4a4a;border-left:1px solid #414141"></div>
<span style="left:455px;top:4px;font-size:17px;line-height:22px;color:#c8c8c8;white-space:nowrap">选择</span>
<div style="left:623px;top:1px;width:27px;height:23px;background:#535353"></div>
<svg width="10" height="14" style="left:633px;top:5px"><path d="M1 0V14L9 7Z" fill="#d8d8d8"/></svg>
<svg width="9" height="14" style="left:658px;top:4px"><path d="M7.5 1L1.5 7L7.5 13" fill="none" stroke="#b0b0b0" stroke-width="1.8"/></svg>
<div style="left:1219px;top:1px;width:39px;height:21px;background:#5a5a5a;border-radius:10px"></div>
<svg width="9" height="14" style="left:1758px;top:4px"><path d="M1.5 1L7.5 7L1.5 13" fill="none" stroke="#8c8c8c" stroke-width="1.8"/></svg>
<div style="left:1776px;top:0;width:25px;height:24px;background:#4e4e4e;border-left:1px solid #444"></div>
</div></div>
<div id="dock">
<div style="left:0;top:0;width:119px;height:17px;background:#424242;border-bottom:1px solid #383838"></div>
<svg width="12.0" height="8.0" viewBox="0 0 12 8" style="left:39px;top:3px"><path d="M4.5 .5L1 4L4.5 7.5M10.5 .5L7 4L10.5 7.5" fill="none" stroke="#d6d6d6" stroke-width="1.5"/></svg>
<svg width="12.0" height="8.0" viewBox="0 0 12 8" style="left:98px;top:3px"><path d="M4.5 .5L1 4L4.5 7.5M10.5 .5L7 4L10.5 7.5" fill="none" stroke="#d6d6d6" stroke-width="1.5"/></svg>
<div style="left:0;top:17px;width:2px;height:915px;background:#424242"></div>
<div style="left:59px;top:17px;width:1px;height:915px;background:#3e3e3e"></div>
<div style="left:62px;top:17px;width:1px;height:915px;background:#444"></div>
<div style="left:60px;top:17px;width:2px;height:915px;background:#4c4c4c"></div>
<div style="left:117px;top:17px;width:2px;height:915px;background:#464646"></div>
<div style="left:2px;top:120px;width:57px;height:2px;background:#3e3e3e"></div>
<div style="left:2px;top:223px;width:57px;height:2px;background:#3e3e3e"></div>
<div style="left:2px;top:369px;width:57px;height:2px;background:#3e3e3e"></div>
<div style="left:63px;top:120px;width:56px;height:2px;background:#3e3e3e"></div>
<div style="left:16px;top:22px;width:29px;height:6px;background:repeating-linear-gradient(90deg,#3b3b3b 0 1px,transparent 1px 3px)"></div>
<div style="left:16px;top:128px;width:29px;height:6px;background:repeating-linear-gradient(90deg,#3b3b3b 0 1px,transparent 1px 3px)"></div>
<div style="left:16px;top:231px;width:29px;height:6px;background:repeating-linear-gradient(90deg,#3b3b3b 0 1px,transparent 1px 3px)"></div>
<div style="left:76px;top:22px;width:29px;height:6px;background:repeating-linear-gradient(90deg,#3b3b3b 0 1px,transparent 1px 3px)"></div>
<div style="left:10px;top:36px;width:40px;height:33px;background:#383838;border-radius:2px"></div>
<svg width="32" height="26" style="left:16px;top:40px"><path d="M14 1C24 0 31 5 30 12C29 19 22 24 14 24C6 24 0 20 1 14C2 9 7 9 10 8C13 7 11 2 14 1Z" fill="#c9c9c9"/><circle cx="8" cy="15" r="2.6" fill="#383838"/><circle cx="14.5" cy="18.5" r="2.6" fill="#383838"/><circle cx="21" cy="17" r="2.4" fill="#383838"/><circle cx="25" cy="12.5" r="2.2" fill="#383838"/><circle cx="23.5" cy="7" r="2" fill="#383838"/></svg>
<svg width="26" height="26" style="left:20px;top:82px"><defs><linearGradient id="cg" x1="0" y1="0" x2="1" y2="1"><stop offset="0" stop-color="#d8d8d8"/><stop offset="1" stop-color="#6a6a6a"/></linearGradient></defs><path d="M1.5 1.5A23 23 0 0 1 24.5 24.5H1.5Z" fill="url(#cg)" stroke="#c9c9c9" stroke-width="1.6"/></svg>
<svg width="28" height="28" style="left:79px;top:39px"><path d="M9 1L17 5V14L9 18L1 14V5Z" fill="#7c7c7c" stroke="#c9c9c9" stroke-width="1.5"/><path d="M1 5L9 9L17 5M9 9V18" fill="none" stroke="#c9c9c9" stroke-width="1.3"/><rect x="21" y="2" width="6" height="6" fill="#c9c9c9"/><rect x="21" y="11" width="6" height="6" fill="#c9c9c9"/><rect x="1" y="22" width="26" height="6" fill="#c9c9c9"/><path d="M21 24H26L23.5 27Z" fill="#555"/></svg>
<svg width="34" height="26" style="left:75px;top:82px"><path d="M9 23C3 23 1 18 2 14C3 10 7 8 10 9C12 3 19 1 24 5C27 7 27 10 27 11C32 12 33 17 31 20C30 22 27 23 25 23Z" fill="#8f8f8f" stroke="#c9c9c9" stroke-width="2.2"/><path d="M9 16C9 12 14 11 16 14L20 18C22 21 27 19 26 15" fill="none" stroke="#c9c9c9" stroke-width="2"/></svg>
<svg width="28" height="28" style="left:18px;top:142px"><circle cx="14" cy="14" r="12.5" fill="none" stroke="#c9c9c9" stroke-width="1.8" stroke-dasharray="4 2.5"/><circle cx="14" cy="14" r="9" fill="#c9c9c9"/></svg>
<svg width="28" height="28" style="left:18px;top:186px"><rect x="8" y="1.5" width="18" height="18" fill="none" stroke="#c9c9c9" stroke-width="1.8"/><rect x="1.5" y="13" width="9" height="9" fill="#535353" stroke="#c9c9c9" stroke-width="1.6"/><rect x="5" y="17" width="8" height="8" fill="none" stroke="#c9c9c9" stroke-width="1.4"/></svg>
<svg width="30" height="28" style="left:17px;top:246px"><path d="M15 1L29 8L15 15L1 8Z" fill="#c9c9c9"/><path d="M4 13L1 15L15 22L29 15L26 13L15 19Z" fill="#c9c9c9"/></svg>
<svg width="28" height="28" style="left:18px;top:287px"><path d="M13 5H2V26H23V15" fill="none" stroke="#c9c9c9" stroke-width="2.4"/><path d="M12 16L25 3M16 2H26V12" fill="none" stroke="#c9c9c9" stroke-width="2.4"/></svg>
<svg width="28" height="28" style="left:18px;top:329px"><rect x="1.5" y="1.5" width="16" height="17" fill="none" stroke="#c9c9c9" stroke-width="1.8"/><rect x="8" y="11" width="19" height="15" fill="#535353" stroke="#c9c9c9" stroke-width="1.8"/></svg>
</div>
<div style="left:1442px;top:112px;width:359px;height:6px;background:#3b3b3b;box-shadow:-1px -1px 3px rgba(0,0,0,.3)"></div>
<div id="cpanel">
<div style="left:0;top:0;width:358px;height:41px;background:#454545;border-bottom:1px solid #3c3c3c"></div>
<div style="left:0;top:0;width:71px;height:41px;background:#535353"></div>
<div style="left:71px;top:0;width:1px;height:40px;background:#3e3e3e"></div><div style="left:169px;top:0;width:1px;height:40px;background:#3e3e3e"></div>
<svg width="8" height="14" style="left:7px;top:16px"><path d="M1 5.5L4 2L7 5.5M1 8.5L4 12L7 8.5" fill="none" stroke="#c9c9c9" stroke-width="1.6"/></svg>
<span style="left:23px;top:8px;font-size:18px;line-height:24px;color:#ececec;white-space:nowrap">颜色</span>
<span style="left:84px;top:8px;font-size:18px;line-height:24px;color:#9c9c9c;white-space:nowrap">颜色参考</span>
<svg width="15.0" height="10.0" viewBox="0 0 12 8" style="left:296px;top:16px"><path d="M1 .5L4.5 4L1 7.5M7 .5L10.5 4L7 7.5" fill="none" stroke="#d6d6d6" stroke-width="1.5"/></svg>
<div style="left:322px;top:12px;width:1px;height:17px;background:#8a8a8a"></div>
<svg width="16" height="12" style="left:333px;top:15px"><path d="M0 1H16M0 4.3H16M0 7.6H16M0 11H16" stroke="#c9c9c9" stroke-width="1.4"/></svg>
<div style="left:10px;top:55px;width:58px;height:20px;background:#fff"></div>
<div style="left:29px;top:55px;width:20px;height:20px;background:#0a0000"></div>
<svg width="19" height="20" style="left:10px;top:55px"><path d="M0 20L19 0" stroke="#a8222a" stroke-width="2"/></svg>
<div style="left:11px;top:91px;width:322px;height:166px;background:linear-gradient(180deg,#ffffff 0%,rgba(255,255,255,.8) 12%,rgba(255,255,255,.35) 30%,rgba(255,255,255,0) 46%,rgba(0,0,0,0) 54%,rgba(0,0,0,.35) 70%,rgba(0,0,0,.75) 87%,#000 100%),linear-gradient(90deg,#e51f1d 0%,#ee7a1c 8%,#f4e52d 16.5%,#8cc22a 26%,#3caf38 36%,#26a98f 46%,#29a8e0 54%,#1f56ab 62%,#213b98 67%,#63399a 76%,#a0358f 82%,#e2208a 88%,#e51f3c 95%,#e51f1d 100%);border:1px solid #2a2a2a"></div>
<div style="left:0;top:269px;width:358px;height:11px;background:#525252;border-top:1px solid #333"></div>
<div style="left:163px;top:271px;width:29px;height:6px;background:repeating-linear-gradient(90deg,#333 0 1px,transparent 1px 3px)"></div>
<div style="left:0;top:0;width:1px;height:280px;background:#3a3a3a"></div>
</div>
<div style="left:1643px;top:194px;width:48px;height:48px;border-radius:50%;background:linear-gradient(180deg,#3d8be6,#55aef6);border:3px solid #e6f0fa;box-shadow:0 0 3px rgba(0,0,0,.3)"><span style="left:0;top:12px;width:42px;text-align:center;font-size:14px;line-height:18px;color:#e8f4ff">04:52</span></div>
<div id="taskbar">
<div style="left:0;top:0;width:1920px;height:1px;background:rgba(0,0,0,.35)"></div>
<svg width="22" height="22" style="left:19px;top:14px"><path d="M0 3L9.5 1.6V10.3H0ZM10.8 1.4L21 0V10.3H10.8ZM0 11.6H9.5V20.3L0 19ZM10.8 11.6H21V22L10.8 20.5Z" fill="#fff"/></svg>
<svg width="24" height="24" style="left:78px;top:13px"><circle cx="15" cy="9.5" r="7" fill="none" stroke="#fff" stroke-width="1.6"/><path d="M10 14.5L2 22.5" stroke="#fff" stroke-width="1.8"/></svg>
<svg width="24" height="24" style="left:138px;top:13px"><circle cx="12" cy="12" r="8.6" fill="none" stroke="#fff" stroke-width="2.8"/></svg>
<svg width="22" height="20" style="left:199px;top:14px"><rect x="1" y="5" width="13" height="9" fill="none" stroke="#fff" stroke-width="1.5"/><path d="M1 3V1H14V3M1 16V18.5H14V16" fill="none" stroke="#fff" stroke-width="1.5"/><path d="M19.5 0V19" stroke="#fff" stroke-width="1.5"/><rect x="18" y="6" width="3" height="3" fill="#fff"/></svg>
<svg width="30" height="28" viewBox="-15 -14 30 28" style="left:257px;top:11px"><g fill="#fff"><circle cx="-6.5" cy="-6" r="7.3"/><circle cx="6.5" cy="-6" r="7.3"/><circle cx="-6.5" cy="6.5" r="7.3"/><circle cx="6.5" cy="6.5" r="7.3"/></g><path d="M0 -13C-5 -8 4 -3 0 0C-4 3 5 8 0 13M-14 0C-8 5 -3 -4 0 0C3 4 8 -5 14 0" fill="none" stroke="#2c403c" stroke-width="1.5"/></svg>
<div style="left:305px;top:3px;width:180px;height:44px;background:#f1f1f1"></div>
<svg width="24" height="24" style="left:313px;top:12px"><path d="M2 14C2 6 8 3 13 3C18 3 22 7 22 13H8C8 16 10 18 13 18C15 18 17 17 18 15H22C20 20 17 22 12 22C6 22 2 19 2 14ZM8 10H17C17 8 15 6 12.5 6C10 6 8 8 8 10Z" fill="#2b8fdf"/><path d="M1 20C-1 14 8 4 18 1C22 0 24 2 22 6C21 3 17 3 12 6C6 10 2 16 3 21Z" fill="#58b5f0"/></svg>
<svg width="8" height="6" style="left:340px;top:21px"><path d="M0 6L4 0L8 6Z" fill="#9a9a9a"/></svg>
<span style="left:355px;top:14px;font-size:15px;line-height:20px;color:#111;white-space:nowrap">钛金板</span>
<div style="left:485px;top:3px;width:70px;height:44px;background:#2d8cf0"><span style="left:5px;top:11px;font-size:15px;line-height:20px;color:#fff;white-space:nowrap">搜索一下</span></div>
<svg width="30" height="26" style="left:576px;top:11px"><path d="M1 3H11L13 6H28V24H1Z" fill="#e9a825"/><path d="M1 8H28V24H1Z" fill="#fbd56b"/><path d="M7 15H22V24H7Z" fill="#3e8fd0"/><path d="M10 19H19V24H10Z" fill="#fbd56b"/></svg>
<div style="left:567px;top:47px;width:50px;height:3px;background:#76b9ed"></div>
<div style="left:638px;top:10px;width:29px;height:29px;border-radius:50%;background:conic-gradient(from 0deg,#d95af0,#f2507a 40deg,#f5504a 90deg,#f9a234 135deg,#f8e23a 180deg,#4cd04a 230deg,#35b7d8 275deg,#4a7cf0 320deg,#d95af0 360deg)"><div style="left:11px;top:11px;width:7px;height:7px;border-radius:50%;background:#fff"></div></div>
<svg width="28" height="28" style="left:701px;top:10px"><path d="M2 13C3 5 9 1 15 1C22 1 27 6 27 14V17H10C10 21 13 23 17 23C20 23 23 22 25 21V26C22 27.5 19 28 16 28C8 28 3 23 4 15C5 11 8 9 11 8C9 10 9 12 9 12H20C20 9 18 6 14 6C9 6 5 9 2 13Z" fill="#1e7fd6"/></svg>
<div style="left:748px;top:0;width:60px;height:50px;background:#6b6b6b"></div>
<div style="left:748px;top:47px;width:60px;height:3px;background:#76b9ed"></div>
<div style="left:763px;top:10px;width:29px;height:28px;background:#2b0e02;border:2px solid #e8862a"><span style="left:3px;top:2px;font-size:17px;line-height:20px;font-weight:bold;color:#f08a2c">Ai</span></div>
<svg width="32" height="32" style="left:823px;top:8px"><circle cx="16" cy="16" r="14" fill="#12260f" stroke="#7bc043" stroke-width="2.5"/><path d="M9 9L14 7L23 18L18 22ZM19 23L23.5 19L25 24Z" fill="#fff"/><path d="M8 24L14 12" stroke="#7bc043" stroke-width="1.5"/></svg>
<svg width="16" height="9" style="left:1475px;top:20px"><path d="M1 8L8 1L15 8" fill="none" stroke="#fff" stroke-width="1.5"/></svg>
<svg width="22" height="22" style="left:1502px;top:14px"><circle cx="11" cy="11" r="10" fill="#e8dc2a"/><path d="M1 11A10 10 0 0 1 17 3C12 4 8 8 8 12C5 13 3 13 1 11Z M21 11A10 10 0 0 1 5 19C10 18 14 14 14 10C17 9 19 9 21 11Z" fill="#2e9e3a"/><path d="M7 11H15M11 7V15" stroke="#2e7e2a" stroke-width="2.4"/></svg>
<div style="left:1532px;top:14px;width:21px;height:21px;border-radius:50%;background:radial-gradient(circle at 50% 55%,#e8b8b8 0,#f0e6e4 45%,#e4e0e0 100%)"></div>
<svg width="24" height="16" style="left:1562px;top:17px"><rect x="4.5" y="3.5" width="16" height="10" fill="none" stroke="#fff" stroke-width="1.3"/><rect x="6" y="5" width="6" height="7" fill="#fff"/><rect x="21" y="6" width="2" height="5" fill="#fff"/><path d="M0 2H4V6H0Z" fill="#fff"/></svg>
<svg width="20" height="18" style="left:1594px;top:16px"><path d="M2 16C2 8 8 2 18 2M6 16C6 10 10 6 18 6M10 16C10 12 13 10 18 10" fill="none" stroke="#fff" stroke-width="1.4"/><circle cx="16.5" cy="15" r="1.8" fill="#fff"/></svg>
<svg width="24" height="18" style="left:1622px;top:16px"><path d="M1 6H5L10 2V16L5 12H1Z" fill="none" stroke="#fff" stroke-width="1.3"/><path d="M13 6C15 8 15 10 13 12M16 3.5C19.5 7 19.5 11 16 14.5M19 1C24 6 24 12 19 17" fill="none" stroke="#fff" stroke-width="1.3"/></svg>
<svg width="24" height="24" style="left:1656px;top:13px"><path d="M8 18L17 4L20 6L11 20L7 22ZM3 20C0 17 2 13 6 14M14 17C18 19 22 17 21 13" fill="none" stroke="#fff" stroke-width="1.5"/></svg>
<span style="left:1690px;top:12px;font-size:21px;line-height:24px;color:#fff;white-space:nowrap">英</span>
<div style="left:1728px;top:15px;width:20px;height:20px;background:#fff"><span style="left:1px;top:0px;font-size:17px;line-height:20px;color:#000;font-weight:bold">拼</span></div>
<span style="left:1766px;top:3px;width:82px;text-align:center;font-size:16px;line-height:21px;color:#fff;white-space:nowrap">14:55</span>
<span style="left:1766px;top:25px;width:82px;text-align:center;font-size:16px;line-height:21px;color:#fff;white-space:nowrap">2020/9/1</span>
<svg width="22" height="22" style="left:1868px;top:15px"><path d="M1 1H20V15H13L10.5 18L8 15H1Z" fill="none" stroke="#fff" stroke-width="1.4"/></svg>
<div style="left:1913px;top:0;width:1px;height:50px;background:#6a6a6a"></div>
</div>
<div style="left:1738px;top:747px;width:130px;height:47px;border-radius:0 24px 24px 0;background:linear-gradient(180deg,#fafafa,#e6e6e6);box-shadow:0 1px 4px rgba(0,0,0,.4)"></div>
<div style="left:1711px;top:741px;width:58px;height:58px;border-radius:50%;background:radial-gradient(ellipse 14px 5px at 50% 14%,rgba(255,255,255,.55),rgba(255,255,255,0) 100%),linear-gradient(180deg,#0d8446 0,#17914f 52%,#3fd06a 53%,#3bcb66 100%);border:2.5px solid #e8f5ea;box-shadow:0 1px 4px rgba(0,0,0,.45)"><span style="left:0;top:15px;width:53px;text-align:center;font-size:17px;line-height:22px;font-weight:bold;color:#d8fbe2">47%</span></div>
<svg width="10" height="30" style="left:1773px;top:755px"><path d="M5 0L9 4H6.5V9H3.5V4H1Z" fill="#e86a4a"/><path d="M5 28L9 24H6.5V19H3.5V24H1Z" fill="#3aa860"/></svg>
<span style="left:1780px;top:754px;width:51px;text-align:right;font-size:11px;line-height:14px;color:#111;white-space:nowrap">0K/s</span>
<span style="left:1780px;top:773px;width:51px;text-align:right;font-size:11px;line-height:14px;color:#111;white-space:nowrap">0.07K/s</span>
<div style="left:1838px;top:761px;width:20px;height:20px;border-radius:50%;background:#3b86e0;box-shadow:0 0 0 2px rgba(120,170,240,.35)"><svg width="20" height="20" style="left:0;top:0"><path d="M10 4.5V15.5M4.5 10H15.5" stroke="#fff" stroke-width="2.8"/></svg></div>
<div style="left:1851px;top:758px;width:9px;height:9px;border-radius:50%;background:#d83a3a"></div>

</div>
</body>
</html>
